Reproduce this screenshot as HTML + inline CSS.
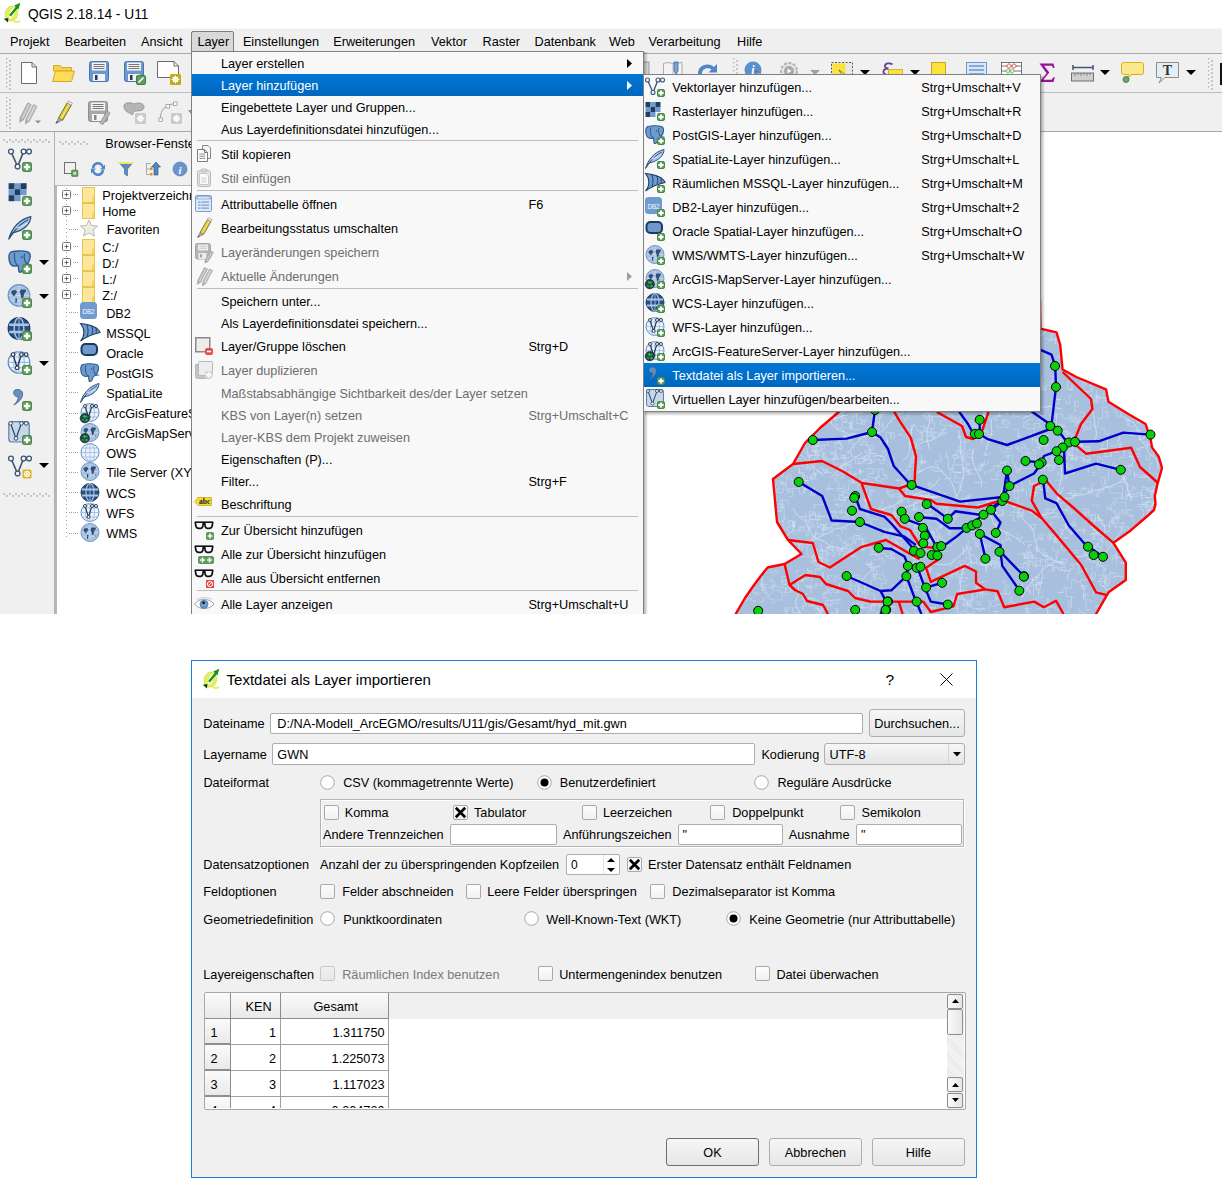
<!DOCTYPE html><html><head><meta charset="utf-8"><style>html,body{margin:0;padding:0;width:1222px;height:1187px;overflow:hidden;background:#fff;position:relative;}body{font-family:"Liberation Sans",sans-serif;}.t{position:absolute;white-space:nowrap;}svg{overflow:visible}</style></head><body>
<svg style="position:absolute;left:2px;top:1px;" width="20" height="24" viewBox="0 0 20 24"><ellipse cx="9.4" cy="12.6" rx="6.4" ry="7.6" transform="rotate(12 9.4 12.6)" fill="#e4ef5e" stroke="#c9d24a" stroke-width="0.5"/><ellipse cx="10" cy="12.2" rx="2.1" ry="5.8" transform="rotate(22 10 12.2)" fill="#fff"/><path d="M11.5 18.5C13.5 20.5 16 20.5 18.5 19L17.8 21.2C15 22.5 12.5 22 10.8 20Z" fill="#e4ef5e"/><path d="M8 14.8L15.6 5.6" stroke="#159515" stroke-width="2.3"/><path d="M12.2 4.6L18.4 1.8L16.4 8.6Z" fill="#159515"/><path d="M1.8 17.8L6.4 17L6 21.4Z" fill="#0b3d0b"/></svg>
<div class="t" style="left:27.5px;top:6.00px;font-size:15.0px;line-height:15.0px;color:#000;transform:scaleX(0.916);transform-origin:0 0;">QGIS 2.18.14 - U11</div>
<div style="position:absolute;left:0px;top:28px;width:1222px;height:1px;background:#f7f7f7"></div>
<div style="position:absolute;left:0px;top:29px;width:1222px;height:24px;background:#efefef"></div>
<div style="position:absolute;left:0px;top:53px;width:1222px;height:1px;background:#a8a8a8"></div>
<div style="position:absolute;left:191px;top:31px;width:43px;height:21px;background:#d9d9d9;border:1px solid #7d7d7d;border-radius:2px 2px 0 0;box-sizing:border-box"></div>
<div class="t" style="left:10px;top:36.00px;font-size:12.7px;line-height:12.7px;color:#000;">Projekt</div>
<div class="t" style="left:64.8px;top:36.00px;font-size:12.7px;line-height:12.7px;color:#000;">Bearbeiten</div>
<div class="t" style="left:141px;top:36.00px;font-size:12.7px;line-height:12.7px;color:#000;">Ansicht</div>
<div class="t" style="left:197.4px;top:36.00px;font-size:12.7px;line-height:12.7px;color:#000;">Layer</div>
<div class="t" style="left:242.9px;top:36.00px;font-size:12.7px;line-height:12.7px;color:#000;">Einstellungen</div>
<div class="t" style="left:333.2px;top:36.00px;font-size:12.7px;line-height:12.7px;color:#000;">Erweiterungen</div>
<div class="t" style="left:431px;top:36.00px;font-size:12.7px;line-height:12.7px;color:#000;">Vektor</div>
<div class="t" style="left:482.6px;top:36.00px;font-size:12.7px;line-height:12.7px;color:#000;">Raster</div>
<div class="t" style="left:534.5px;top:36.00px;font-size:12.7px;line-height:12.7px;color:#000;">Datenbank</div>
<div class="t" style="left:609px;top:36.00px;font-size:12.7px;line-height:12.7px;color:#000;">Web</div>
<div class="t" style="left:648.6px;top:36.00px;font-size:12.7px;line-height:12.7px;color:#000;">Verarbeitung</div>
<div class="t" style="left:737px;top:36.00px;font-size:12.7px;line-height:12.7px;color:#000;">Hilfe</div>
<div style="position:absolute;left:0px;top:54px;width:1222px;height:38px;background:#f0f0f0"></div>
<div style="position:absolute;left:0px;top:92px;width:1222px;height:1px;background:#bdbdbd"></div>
<div style="position:absolute;left:0px;top:93px;width:1222px;height:38px;background:#f0f0f0"></div>
<div style="position:absolute;left:0px;top:131px;width:1222px;height:1px;background:#a8a8a8"></div>
<svg style="position:absolute;left:6px;top:58px;" width="6" height="30" viewBox="0 0 6 30"><rect x="0" y="0" width="2" height="2" fill="#c6c6c6"/><rect x="3" y="2" width="2" height="2" fill="#c6c6c6"/><rect x="1" y="1" width="1" height="1" fill="#fff"/><rect x="0" y="4" width="2" height="2" fill="#c6c6c6"/><rect x="3" y="6" width="2" height="2" fill="#c6c6c6"/><rect x="1" y="5" width="1" height="1" fill="#fff"/><rect x="0" y="8" width="2" height="2" fill="#c6c6c6"/><rect x="3" y="10" width="2" height="2" fill="#c6c6c6"/><rect x="1" y="9" width="1" height="1" fill="#fff"/><rect x="0" y="12" width="2" height="2" fill="#c6c6c6"/><rect x="3" y="14" width="2" height="2" fill="#c6c6c6"/><rect x="1" y="13" width="1" height="1" fill="#fff"/><rect x="0" y="16" width="2" height="2" fill="#c6c6c6"/><rect x="3" y="18" width="2" height="2" fill="#c6c6c6"/><rect x="1" y="17" width="1" height="1" fill="#fff"/><rect x="0" y="20" width="2" height="2" fill="#c6c6c6"/><rect x="3" y="22" width="2" height="2" fill="#c6c6c6"/><rect x="1" y="21" width="1" height="1" fill="#fff"/><rect x="0" y="24" width="2" height="2" fill="#c6c6c6"/><rect x="3" y="26" width="2" height="2" fill="#c6c6c6"/><rect x="1" y="25" width="1" height="1" fill="#fff"/><rect x="0" y="28" width="2" height="2" fill="#c6c6c6"/><rect x="3" y="30" width="2" height="2" fill="#c6c6c6"/><rect x="1" y="29" width="1" height="1" fill="#fff"/></svg>
<svg style="position:absolute;left:6px;top:97px;" width="6" height="30" viewBox="0 0 6 30"><rect x="0" y="0" width="2" height="2" fill="#c6c6c6"/><rect x="3" y="2" width="2" height="2" fill="#c6c6c6"/><rect x="1" y="1" width="1" height="1" fill="#fff"/><rect x="0" y="4" width="2" height="2" fill="#c6c6c6"/><rect x="3" y="6" width="2" height="2" fill="#c6c6c6"/><rect x="1" y="5" width="1" height="1" fill="#fff"/><rect x="0" y="8" width="2" height="2" fill="#c6c6c6"/><rect x="3" y="10" width="2" height="2" fill="#c6c6c6"/><rect x="1" y="9" width="1" height="1" fill="#fff"/><rect x="0" y="12" width="2" height="2" fill="#c6c6c6"/><rect x="3" y="14" width="2" height="2" fill="#c6c6c6"/><rect x="1" y="13" width="1" height="1" fill="#fff"/><rect x="0" y="16" width="2" height="2" fill="#c6c6c6"/><rect x="3" y="18" width="2" height="2" fill="#c6c6c6"/><rect x="1" y="17" width="1" height="1" fill="#fff"/><rect x="0" y="20" width="2" height="2" fill="#c6c6c6"/><rect x="3" y="22" width="2" height="2" fill="#c6c6c6"/><rect x="1" y="21" width="1" height="1" fill="#fff"/><rect x="0" y="24" width="2" height="2" fill="#c6c6c6"/><rect x="3" y="26" width="2" height="2" fill="#c6c6c6"/><rect x="1" y="25" width="1" height="1" fill="#fff"/><rect x="0" y="28" width="2" height="2" fill="#c6c6c6"/><rect x="3" y="30" width="2" height="2" fill="#c6c6c6"/><rect x="1" y="29" width="1" height="1" fill="#fff"/></svg>
<svg style="position:absolute;left:20px;top:61px;" width="18" height="24" viewBox="0 0 18 24"><path d="M1.5 1.5H12L16.5 6V22.5H1.5Z" fill="#fff" stroke="#6b6b6b" stroke-width="1"/><path d="M12 1.5V6H16.5" fill="none" stroke="#6b6b6b" stroke-width="1"/></svg>
<svg style="position:absolute;left:52px;top:63px;" width="24" height="20" viewBox="0 0 24 20"><path d="M1.5 2.5H8L10 4.5H19.5V8H1.5Z" fill="#f5d34a" stroke="#d4a92a" stroke-width="1"/><path d="M3.5 8H22.5L19.5 18.5H0.5Z" fill="#fddc58" stroke="#d4a92a" stroke-width="1"/></svg>
<svg style="position:absolute;left:89px;top:61px;" width="22" height="22" viewBox="0 0 22 22"><rect x="0.5" y="0.5" width="19" height="20" rx="2" fill="#6a98d0" stroke="#4a76b0"/><rect x="3" y="1.5" width="14" height="8" fill="#f4f4f4"/><path d="M4.5 3.5h11M4.5 5.5h11M4.5 7.5h11" stroke="#555" stroke-width="0.8"/><rect x="4" y="13" width="12" height="7" fill="#f4f4f4"/><rect x="6" y="14" width="2.5" height="5" fill="#1f3a5c"/></svg>
<svg style="position:absolute;left:124px;top:61px;" width="24" height="24" viewBox="0 0 24 24"><rect x="0.5" y="0.5" width="19" height="20" rx="2" fill="#6a98d0" stroke="#4a76b0"/><rect x="3" y="1.5" width="14" height="8" fill="#f4f4f4"/><path d="M4.5 3.5h11M4.5 5.5h11M4.5 7.5h11" stroke="#555" stroke-width="0.8"/><rect x="4" y="13" width="12" height="7" fill="#f4f4f4"/><rect x="6" y="14" width="2.5" height="5" fill="#1f3a5c"/><rect x="12.5" y="14.5" width="9" height="9" rx="1.5" fill="#5e9e5e" stroke="#3f7c3f"/><path d="M14.5 21.5L19.5 16.5" stroke="#fff" stroke-width="1.6"/></svg>
<svg style="position:absolute;left:157px;top:61px;" width="25" height="25" viewBox="0 0 25 25"><path d="M0.5 0.5H17L21.5 5V16.5H0.5Z" fill="#fff" stroke="#6b6b6b"/><path d="M17 0.5V5H21.5" fill="none" stroke="#6b6b6b"/><rect x="13" y="13" width="11" height="11" rx="1.5" fill="#c9a414"/><circle cx="18.5" cy="18.5" r="2.4" fill="none" stroke="#fff" stroke-width="1.3"/><path d="M18.5 14.5v8M14.5 18.5h8M15.7 15.7l5.6 5.6M21.3 15.7l-5.6 5.6" stroke="#fff" stroke-width="0.9"/></svg>
<svg style="position:absolute;left:18px;top:100px;" width="26" height="26" viewBox="0 0 26 26"><g transform="scale(1.15)"><path d="M1.5 16L8.5 2.5L11.5 4L4.5 17.5Z" fill="#bdbdbd" stroke="#9c9c9c" stroke-width="0.7"/><path d="M1.5 16L4.5 17.5L1 20Z" fill="#a5a5a5"/><path d="M6.5 17.5L13.5 4L16.5 5.5L9.5 19Z" fill="#c6c6c6" stroke="#9c9c9c" stroke-width="0.7"/><path d="M6.5 17.5L9.5 19L6 21.5Z" fill="#a5a5a5"/><path d="M3.5 16.5L10 3.3M8.5 18L15 4.8" stroke="#e0e0e0" stroke-width="0.7"/></g><path d="M17 20.5h6l-3 3z" fill="#8a8a8a"/></svg>
<svg style="position:absolute;left:54px;top:100px;" width="20" height="25" viewBox="0 0 20 25"><g transform="scale(1.15)"><path d="M4 15.5L11.5 2.5L15 4.5L7.5 17.5Z" fill="#e1cc3a" stroke="#6d6020" stroke-width="0.8"/><path d="M6 16.3L13.2 3.6" stroke="#f3e88a" stroke-width="0.9"/><path d="M11.5 2.5L12.5 0.8L16 2.8L15 4.5Z" fill="#f4f4f4" stroke="#8a8a8a" stroke-width="0.6"/><path d="M4 15.5L7.5 17.5L1.5 20.5Z" fill="#a8a8a8" stroke="#777" stroke-width="0.5"/><path d="M1.5 20.5L2.6 18.5L3.8 19.2Z" fill="#333"/></g></svg>
<svg style="position:absolute;left:88px;top:101px;" width="24" height="24" viewBox="0 0 24 24"><rect x="0.5" y="0.5" width="19" height="20" rx="2" fill="#a8a8a8" stroke="#8d8d8d"/><rect x="3" y="1.5" width="14" height="8" fill="#f4f4f4"/><path d="M4.5 3.5h11M4.5 5.5h11M4.5 7.5h11" stroke="#555" stroke-width="0.8"/><rect x="4" y="13" width="12" height="7" fill="#f4f4f4"/><rect x="6" y="14" width="2.5" height="5" fill="#888"/><path d="M12 22L19 10L22 12L15 23.5Z" fill="#b8b8b8" stroke="#8a8a8a" stroke-width="0.8"/></svg>
<svg style="position:absolute;left:122px;top:101px;" width="26" height="26" viewBox="0 0 26 26"><path d="M2 6C1 1 9 1 12 3C16 1 22 2 22 6C22 10 17 10 13 10C10 12 12 15 9 13C6 11 3 11 2 6Z" fill="#b5b5b5" stroke="#8d8d8d" stroke-width="0.8"/><rect x="13" y="12" width="11" height="11" rx="1.5" fill="#c9c9c9"/><circle cx="18.5" cy="17.5" r="2.3" fill="none" stroke="#fff" stroke-width="1.2"/><path d="M18.5 13.5v8M14.5 17.5h8M15.7 14.7l5.6 5.6M21.3 14.7l-5.6 5.6" stroke="#fff" stroke-width="0.8"/></svg>
<svg style="position:absolute;left:158px;top:101px;" width="26" height="26" viewBox="0 0 26 26"><path d="M2.5 19C2 12 5 6 9.5 5C12 4 14 3 16 2.5" fill="none" stroke="#a0a0a0" stroke-width="1"/><rect x="1" y="17" width="3.5" height="3.5" fill="#fff" stroke="#9a9a9a" stroke-width="0.8"/><rect x="8" y="3.5" width="3.5" height="3.5" fill="#fff" stroke="#9a9a9a" stroke-width="0.8"/><rect x="15.5" y="1" width="3.5" height="3.5" fill="#fff" stroke="#9a9a9a" stroke-width="0.8"/><rect x="13" y="12" width="11" height="11" rx="1.5" fill="#c9c9c9"/><circle cx="18.5" cy="17.5" r="2.3" fill="none" stroke="#fff" stroke-width="1.2"/><path d="M18.5 13.5v8M14.5 17.5h8M15.7 14.7l5.6 5.6M21.3 14.7l-5.6 5.6" stroke="#fff" stroke-width="0.8"/></svg>
<svg style="position:absolute;left:188px;top:110px;" width="6" height="6" viewBox="0 0 6 6"><path d="M0 0h6l-3 4z" fill="#8a8a8a"/></svg>
<svg style="position:absolute;left:643px;top:61px;" width="8" height="14" viewBox="0 0 8 14"><rect x="0" y="1" width="6" height="14" fill="#d8d8d8" stroke="#888" stroke-width="0.8"/></svg>
<svg style="position:absolute;left:662px;top:61px;" width="24" height="14" viewBox="0 0 24 14"><path d="M1.5 2.5L6 1.5L11 2.5L20 1.5V14H1.5Z" fill="#f4f4f4" stroke="#9a9a9a" stroke-width="0.8"/><path d="M11 2.5V14" stroke="#bbb"/><path d="M12 1H16V10L14 13L12 10Z" fill="#7aa6dc" stroke="#3d6494" stroke-width="0.8"/></svg>
<svg style="position:absolute;left:696px;top:61px;" width="24" height="14" viewBox="0 0 24 14"><path d="M2 13C2 7 6 3.5 11.5 3.5C14.5 3.5 16.5 4.5 18 6L21 3V11.5H12.5L15.5 8.5C14.5 7.8 13 7.3 11.5 7.3C8 7.3 6 9.5 6 13Z" fill="#4f86c8"/></svg>
<svg style="position:absolute;left:733px;top:58px;" width="6" height="17" viewBox="0 0 6 17"><rect x="0" y="0" width="2" height="2" fill="#c6c6c6"/><rect x="3" y="2" width="2" height="2" fill="#c6c6c6"/><rect x="1" y="1" width="1" height="1" fill="#fff"/><rect x="0" y="4" width="2" height="2" fill="#c6c6c6"/><rect x="3" y="6" width="2" height="2" fill="#c6c6c6"/><rect x="1" y="5" width="1" height="1" fill="#fff"/><rect x="0" y="8" width="2" height="2" fill="#c6c6c6"/><rect x="3" y="10" width="2" height="2" fill="#c6c6c6"/><rect x="1" y="9" width="1" height="1" fill="#fff"/><rect x="0" y="12" width="2" height="2" fill="#c6c6c6"/><rect x="3" y="14" width="2" height="2" fill="#c6c6c6"/><rect x="1" y="13" width="1" height="1" fill="#fff"/><rect x="0" y="16" width="2" height="2" fill="#c6c6c6"/><rect x="3" y="18" width="2" height="2" fill="#c6c6c6"/><rect x="1" y="17" width="1" height="1" fill="#fff"/></svg>
<svg style="position:absolute;left:744px;top:61px;" width="20" height="14" viewBox="0 0 20 14"><circle cx="9" cy="9" r="8.5" fill="#5b8fcd"/><text x="9" y="13" font-family="Liberation Serif" font-style="italic" font-weight="bold" font-size="12" fill="#fff" text-anchor="middle">i</text><path d="M12 10L18 14L15 14.5Z" fill="#fff" stroke="#333" stroke-width="0.5"/></svg>
<svg style="position:absolute;left:779px;top:61px;" width="22" height="14" viewBox="0 0 22 14"><circle cx="10" cy="10" r="8" fill="#e4e4e4" stroke="#b0b0b0" stroke-width="2" stroke-dasharray="3 1.6"/><circle cx="10" cy="10" r="5" fill="#a8a8a8"/><path d="M8.5 7.5L12.5 10L8.5 12.5Z" fill="#fff"/></svg>
<svg style="position:absolute;left:810px;top:70px;" width="11" height="6" viewBox="0 0 11 6"><path d="M0 0h10l-5 5z" fill="#a0a0a0"/></svg>
<svg style="position:absolute;left:831px;top:62px;" width="23" height="13" viewBox="0 0 23 13"><rect x="0.5" y="0.5" width="21" height="21" fill="#e8e8e8" stroke="#333" stroke-width="0.8" stroke-dasharray="2 1.5"/><rect x="1.5" y="1.5" width="13" height="14" fill="#fce33b"/><path d="M8 8L16 14L12 14.5Z" fill="#fff" stroke="#333" stroke-width="0.6"/></svg>
<svg style="position:absolute;left:860px;top:70px;" width="11" height="6" viewBox="0 0 11 6"><path d="M0 0h10l-5 5z" fill="#000"/></svg>
<svg style="position:absolute;left:882px;top:62px;" width="22" height="13" viewBox="0 0 22 13"><path d="M10.5 2.5C8 0.5 2.5 1 3 4.5C3.3 6 5 6.5 6.5 6.5C3 6.5 1 8 1.5 10.5C2 13 6 13.5 9 12" fill="none" stroke="#6a3d8f" stroke-width="1.8"/><rect x="6.5" y="7.5" width="14" height="10" fill="#fce33b" stroke="#c8a820" stroke-width="0.8"/></svg>
<svg style="position:absolute;left:910px;top:70px;" width="11" height="6" viewBox="0 0 11 6"><path d="M0 0h10l-5 5z" fill="#000"/></svg>
<svg style="position:absolute;left:931px;top:62px;" width="16" height="13" viewBox="0 0 16 13"><rect x="0.5" y="0.5" width="14" height="16" fill="#fce33b" stroke="#c8a820"/></svg>
<svg style="position:absolute;left:966px;top:62px;" width="22" height="13" viewBox="0 0 22 13"><rect x="0.5" y="0.5" width="20" height="16" fill="#dbe7f5" stroke="#6a98d0"/><path d="M3 4h15M3 8h15M3 12h15" stroke="#6a98d0" stroke-width="1.6"/></svg>
<svg style="position:absolute;left:1001px;top:62px;" width="22" height="13" viewBox="0 0 22 13"><rect x="0.5" y="0.5" width="20" height="16" fill="#fff" stroke="#555" stroke-width="0.8"/><path d="M1 4h19M1 9h19" stroke="#555" stroke-width="0.8"/><path d="M8 1.5l2.5 2.5-2.5 2.5-2.5-2.5z M13 1.5l2.5 2.5-2.5 2.5-2.5-2.5z" fill="#fff" stroke="#d33" stroke-width="1"/><path d="M7 6.5l2.5 2.5-2.5 2.5-2.5-2.5z M11 6.5l2.5 2.5-2.5 2.5-2.5-2.5z" fill="#dff0d8" stroke="#5cb85c" stroke-width="1"/></svg>
<svg style="position:absolute;left:1039px;top:63px;" width="17" height="20" viewBox="0 0 17 20"><path d="M0.5 0.5H14.5L15.5 5H14L12.8 2.8H5L10.3 9.6L4.3 16.8H12.8L14.3 14.2H15.8L14.5 19H0.5L7.6 10.2Z" fill="#9c109c"/></svg>
<svg style="position:absolute;left:1071px;top:65px;" width="24" height="18" viewBox="0 0 24 18"><path d="M2 2.5h20M2 0v5M22 0v5" stroke="#3d5675" stroke-width="1.5"/><rect x="0.5" y="8" width="22" height="8" fill="#cfcfcf" stroke="#707070"/><path d="M4 8v3M7 8v2M10 8v3M13 8v2M16 8v3M19 8v2" stroke="#707070" stroke-width="0.8"/></svg>
<svg style="position:absolute;left:1100px;top:70px;" width="11" height="6" viewBox="0 0 11 6"><path d="M0 0h10l-5 5z" fill="#000"/></svg>
<svg style="position:absolute;left:1121px;top:62px;" width="26" height="22" viewBox="0 0 26 22"><path d="M3.5 0.5H20.5C22 0.5 22.5 1 22.5 3V10C22.5 12 22 12.5 20.5 12.5H10L6 18L7.5 12.5H3.5C1.5 12.5 0.5 12 0.5 10V3C0.5 1 1.5 0.5 3.5 0.5Z" fill="#fae98c" stroke="#d1b21c"/><circle cx="5" cy="17.5" r="3" fill="#6aa56a" stroke="#3f7c3f" stroke-width="0.8"/></svg>
<svg style="position:absolute;left:1156px;top:62px;" width="26" height="22" viewBox="0 0 26 22"><path d="M0.5 0.5H22.5V15.5H9L3 21L5.5 15.5H0.5Z" fill="#e6eef5" stroke="#8d8d8d"/><text x="11.5" y="13" font-family="Liberation Serif" font-weight="bold" font-size="14" fill="#333" text-anchor="middle">T</text></svg>
<svg style="position:absolute;left:1186px;top:70px;" width="11" height="6" viewBox="0 0 11 6"><path d="M0 0h10l-5 5z" fill="#000"/></svg>
<svg style="position:absolute;left:1208px;top:58px;" width="6" height="30" viewBox="0 0 6 30"><rect x="0" y="0" width="2" height="2" fill="#c6c6c6"/><rect x="3" y="2" width="2" height="2" fill="#c6c6c6"/><rect x="1" y="1" width="1" height="1" fill="#fff"/><rect x="0" y="4" width="2" height="2" fill="#c6c6c6"/><rect x="3" y="6" width="2" height="2" fill="#c6c6c6"/><rect x="1" y="5" width="1" height="1" fill="#fff"/><rect x="0" y="8" width="2" height="2" fill="#c6c6c6"/><rect x="3" y="10" width="2" height="2" fill="#c6c6c6"/><rect x="1" y="9" width="1" height="1" fill="#fff"/><rect x="0" y="12" width="2" height="2" fill="#c6c6c6"/><rect x="3" y="14" width="2" height="2" fill="#c6c6c6"/><rect x="1" y="13" width="1" height="1" fill="#fff"/><rect x="0" y="16" width="2" height="2" fill="#c6c6c6"/><rect x="3" y="18" width="2" height="2" fill="#c6c6c6"/><rect x="1" y="17" width="1" height="1" fill="#fff"/><rect x="0" y="20" width="2" height="2" fill="#c6c6c6"/><rect x="3" y="22" width="2" height="2" fill="#c6c6c6"/><rect x="1" y="21" width="1" height="1" fill="#fff"/><rect x="0" y="24" width="2" height="2" fill="#c6c6c6"/><rect x="3" y="26" width="2" height="2" fill="#c6c6c6"/><rect x="1" y="25" width="1" height="1" fill="#fff"/><rect x="0" y="28" width="2" height="2" fill="#c6c6c6"/><rect x="3" y="30" width="2" height="2" fill="#c6c6c6"/><rect x="1" y="29" width="1" height="1" fill="#fff"/></svg>
<div style="position:absolute;left:1220px;top:63px;width:2px;height:22px;background:#111"></div>
<div style="position:absolute;left:0px;top:132px;width:54px;height:482px;background:#f0f0f0"></div>
<div style="position:absolute;left:54px;top:132px;width:1px;height:482px;background:#b0b0b0"></div>
<div style="position:absolute;left:55px;top:132px;width:140px;height:482px;background:#f0f0f0"></div>
<svg style="position:absolute;left:3px;top:139px;" width="46" height="5" viewBox="0 0 46 5"><rect x="0" y="0" width="2" height="2" fill="#c6c6c6"/><rect x="3" y="2" width="2" height="2" fill="#c6c6c6"/><rect x="6" y="0" width="2" height="2" fill="#c6c6c6"/><rect x="9" y="2" width="2" height="2" fill="#c6c6c6"/><rect x="12" y="0" width="2" height="2" fill="#c6c6c6"/><rect x="15" y="2" width="2" height="2" fill="#c6c6c6"/><rect x="18" y="0" width="2" height="2" fill="#c6c6c6"/><rect x="21" y="2" width="2" height="2" fill="#c6c6c6"/><rect x="24" y="0" width="2" height="2" fill="#c6c6c6"/><rect x="27" y="2" width="2" height="2" fill="#c6c6c6"/><rect x="30" y="0" width="2" height="2" fill="#c6c6c6"/><rect x="33" y="2" width="2" height="2" fill="#c6c6c6"/><rect x="36" y="0" width="2" height="2" fill="#c6c6c6"/><rect x="39" y="2" width="2" height="2" fill="#c6c6c6"/><rect x="42" y="0" width="2" height="2" fill="#c6c6c6"/><rect x="45" y="2" width="2" height="2" fill="#c6c6c6"/></svg>
<svg style="position:absolute;left:59px;top:141px;" width="30" height="5" viewBox="0 0 30 5"><rect x="0" y="0" width="2" height="2" fill="#c6c6c6"/><rect x="3" y="2" width="2" height="2" fill="#c6c6c6"/><rect x="6" y="0" width="2" height="2" fill="#c6c6c6"/><rect x="9" y="2" width="2" height="2" fill="#c6c6c6"/><rect x="12" y="0" width="2" height="2" fill="#c6c6c6"/><rect x="15" y="2" width="2" height="2" fill="#c6c6c6"/><rect x="18" y="0" width="2" height="2" fill="#c6c6c6"/><rect x="21" y="2" width="2" height="2" fill="#c6c6c6"/><rect x="24" y="0" width="2" height="2" fill="#c6c6c6"/><rect x="27" y="2" width="2" height="2" fill="#c6c6c6"/></svg>
<svg style="position:absolute;left:3px;top:493px;" width="46" height="5" viewBox="0 0 46 5"><rect x="0" y="0" width="2" height="2" fill="#c6c6c6"/><rect x="3" y="2" width="2" height="2" fill="#c6c6c6"/><rect x="6" y="0" width="2" height="2" fill="#c6c6c6"/><rect x="9" y="2" width="2" height="2" fill="#c6c6c6"/><rect x="12" y="0" width="2" height="2" fill="#c6c6c6"/><rect x="15" y="2" width="2" height="2" fill="#c6c6c6"/><rect x="18" y="0" width="2" height="2" fill="#c6c6c6"/><rect x="21" y="2" width="2" height="2" fill="#c6c6c6"/><rect x="24" y="0" width="2" height="2" fill="#c6c6c6"/><rect x="27" y="2" width="2" height="2" fill="#c6c6c6"/><rect x="30" y="0" width="2" height="2" fill="#c6c6c6"/><rect x="33" y="2" width="2" height="2" fill="#c6c6c6"/><rect x="36" y="0" width="2" height="2" fill="#c6c6c6"/><rect x="39" y="2" width="2" height="2" fill="#c6c6c6"/><rect x="42" y="0" width="2" height="2" fill="#c6c6c6"/><rect x="45" y="2" width="2" height="2" fill="#c6c6c6"/></svg>
<div class="t" style="left:105.2px;top:138.00px;font-size:12.7px;line-height:12.7px;color:#000;">Browser-Fenster</div>
<svg style="position:absolute;left:0px;top:0px;" width="54" height="614" viewBox="0 0 54 614"><g transform="translate(8,148) scale(1.2)"><path d="M2.5 3L8 15.5L13 3H17" fill="none" stroke="#3d5675" stroke-width="1.3"/><circle cx="2.5" cy="3" r="2" fill="#f8f8f8" stroke="#3d5675" stroke-width="1.1"/><circle cx="8" cy="15.5" r="2" fill="#f8f8f8" stroke="#3d5675" stroke-width="1.1"/><circle cx="13" cy="3" r="2" fill="#f8f8f8" stroke="#3d5675" stroke-width="1.1"/><circle cx="17.5" cy="3" r="2" fill="#f8f8f8" stroke="#3d5675" stroke-width="1.1"/></g><rect x="22.5" y="162.5" width="9" height="9" rx="1.7" fill="#5c9c5c" stroke="#4b874b" stroke-width="1"/><path d="M27.0 163.8V170.2M23.8 167.0H30.2" stroke="#fff" stroke-width="2.4"/></svg>
<svg style="position:absolute;left:0px;top:0px;" width="54" height="614" viewBox="0 0 54 614"><g transform="translate(8,182) scale(1.2)"><rect x="0.5" y="1" width="5" height="5" fill="#213f63"/><rect x="5.5" y="1" width="5" height="5" fill="#6e9bd1"/><rect x="10.5" y="1" width="5" height="5" fill="#213f63"/><rect x="0.5" y="6" width="5" height="5" fill="#6e9bd1"/><rect x="5.5" y="6" width="5" height="5" fill="#213f63"/><rect x="10.5" y="6" width="5" height="5" fill="#6e9bd1"/><rect x="0.5" y="11" width="5" height="5" fill="#213f63"/><rect x="5.5" y="11" width="5" height="5" fill="#6e9bd1"/></g><rect x="22.5" y="196.5" width="9" height="9" rx="1.7" fill="#5c9c5c" stroke="#4b874b" stroke-width="1"/><path d="M27.0 197.8V204.2M23.8 201.0H30.2" stroke="#fff" stroke-width="2.4"/></svg>
<svg style="position:absolute;left:0px;top:0px;" width="54" height="614" viewBox="0 0 54 614"><g transform="translate(8,216) scale(1.2)"><path d="M0.5 19.5C3 11 9 3 19 0.5C19 6 14 12 4 14Z" fill="#a9c6ea" stroke="#2f4f7a" stroke-width="1"/><path d="M1.5 18C6 11 11 6 17 3" fill="none" stroke="#2f4f7a" stroke-width="0.9"/><path d="M7 10C10 9 13 8 16 6" fill="none" stroke="#e6f0fb" stroke-width="0.8"/></g><rect x="22.5" y="230.5" width="9" height="9" rx="1.7" fill="#5c9c5c" stroke="#4b874b" stroke-width="1"/><path d="M27.0 231.8V238.2M23.8 235.0H30.2" stroke="#fff" stroke-width="2.4"/></svg>
<svg style="position:absolute;left:0px;top:0px;" width="54" height="614" viewBox="0 0 54 614"><g transform="translate(8,250) scale(1.2)"><path d="M2.0 2.0C4.0 0.5 13.0 0.5 16.5 1.5C18.5 2.5 19.0 5.0 18.0 8.0C17.5 10.0 16.0 11.0 15.0 11.0L18.0 12.0L14.5 12.8C13.0 13.5 12.5 15.5 12.0 17.0C11.0 19.0 9.0 19.0 9.0 17.5L8.5 13.0L6.0 13.5C3.0 13.5 1.0 11.0 0.8 7.0C0.6 4.5 1.0 3.0 2.0 2.0Z" fill="#6d9bd0" stroke="#2f5a8a" stroke-width="1.1"/><path d="M5.5 2.5C5.0 6.0 5.5 10.0 7.5 13.0M14.0 3.0C13.0 5.0 13.5 8.0 15.0 11.0" fill="none" stroke="#2f5a8a" stroke-width="1"/><circle cx="11.5" cy="6" r="0.8" fill="#2f5a8a"/></g><rect x="22.5" y="264.5" width="9" height="9" rx="1.7" fill="#5c9c5c" stroke="#4b874b" stroke-width="1"/><path d="M27.0 265.8V272.2M23.8 269.0H30.2" stroke="#fff" stroke-width="2.4"/></svg>
<svg style="position:absolute;left:39px;top:260px;" width="10" height="6" viewBox="0 0 10 6"><path d="M0 0h10l-5 5z" fill="#000"/></svg>
<svg style="position:absolute;left:0px;top:0px;" width="54" height="614" viewBox="0 0 54 614"><g transform="translate(7,284) scale(1.2)"><circle cx="10" cy="9.5" r="9" fill="#a9c2e0" stroke="#6f95c5" stroke-width="1"/><path d="M1.5 9.5h17M10 1.5v17M3 5.5h14M3 13.5h14" stroke="#e8f0fa" stroke-width="0.6" opacity="0.6"/><path d="M4 5.5l3 -0.5 1.5 1.5 -1.5 2 -1 2 -1.5 -1.5 -1 -2z M7 12l1.5 0 -0.5 3.5 -1 0.5z M11.5 4.5l4 0 0.5 1.5 -1.5 1.5 -1 4 -1.5 0.5 -0.5 -3 -1 -2.5z M15.5 12l1 1 -1 1.5z" fill="#2f4f7a"/></g><rect x="22.5" y="298.5" width="9" height="9" rx="1.7" fill="#5c9c5c" stroke="#4b874b" stroke-width="1"/><path d="M27.0 299.8V306.2M23.8 303.0H30.2" stroke="#fff" stroke-width="2.4"/></svg>
<svg style="position:absolute;left:39px;top:294px;" width="10" height="6" viewBox="0 0 10 6"><path d="M0 0h10l-5 5z" fill="#000"/></svg>
<svg style="position:absolute;left:0px;top:0px;" width="54" height="614" viewBox="0 0 54 614"><g transform="translate(7,317) scale(1.2)"><circle cx="10" cy="9.5" r="9" fill="#2a4f7e" stroke="#1c3a60" stroke-width="1"/><path d="M1.8 6.5H18.2M1.8 12.5H18.2" stroke="#a9c6ea" stroke-width="2.2"/><ellipse cx="10" cy="9.5" rx="4" ry="9" fill="none" stroke="#a9c6ea" stroke-width="1.2"/><path d="M10 0.5V18.5" stroke="#a9c6ea" stroke-width="0.8"/></g><rect x="22.5" y="331.5" width="9" height="9" rx="1.7" fill="#5c9c5c" stroke="#4b874b" stroke-width="1"/><path d="M27.0 332.8V339.2M23.8 336.0H30.2" stroke="#fff" stroke-width="2.4"/></svg>
<svg style="position:absolute;left:0px;top:0px;" width="54" height="614" viewBox="0 0 54 614"><g transform="translate(7,351) scale(1.2)"><circle cx="10" cy="9.5" r="9" fill="#eef4fb" stroke="#5b8bc6" stroke-width="1"/><path d="M1.5 9.5H18.5M3 5H17M3 14H17M10 0.5V18.5" stroke="#9dbbe2" stroke-width="0.9"/><ellipse cx="10" cy="9.5" rx="4.5" ry="9" fill="none" stroke="#9dbbe2" stroke-width="0.9"/><path d="M5 3L8.5 14L12 3H16" fill="none" stroke="#1f2f45" stroke-width="1.1"/><circle cx="5" cy="3" r="1.5" fill="#fff" stroke="#1f2f45" stroke-width="0.9"/><circle cx="12" cy="3" r="1.5" fill="#fff" stroke="#1f2f45" stroke-width="0.9"/><circle cx="16" cy="3" r="1.5" fill="#fff" stroke="#1f2f45" stroke-width="0.9"/><circle cx="8.5" cy="14" r="1.5" fill="#fff" stroke="#1f2f45" stroke-width="0.9"/></g><rect x="22.5" y="365.5" width="9" height="9" rx="1.7" fill="#5c9c5c" stroke="#4b874b" stroke-width="1"/><path d="M27.0 366.8V373.2M23.8 370.0H30.2" stroke="#fff" stroke-width="2.4"/></svg>
<svg style="position:absolute;left:39px;top:361px;" width="10" height="6" viewBox="0 0 10 6"><path d="M0 0h10l-5 5z" fill="#000"/></svg>
<svg style="position:absolute;left:0px;top:0px;" width="54" height="614" viewBox="0 0 54 614"><g transform="translate(9,387) scale(1.2)"><path d="M5 2.5C9 1 12.5 3.5 11 8C10 11 7 13.5 4 15C6.5 12.5 8 10 7.5 8C4.5 8.5 2.5 4.5 5 2.5Z" fill="#6a8fc0" stroke="#3d5f8f" stroke-width="0.7"/></g><rect x="22.5" y="401.5" width="9" height="9" rx="1.7" fill="#5c9c5c" stroke="#4b874b" stroke-width="1"/><path d="M27.0 402.8V409.2M23.8 406.0H30.2" stroke="#fff" stroke-width="2.4"/></svg>
<svg style="position:absolute;left:0px;top:0px;" width="54" height="614" viewBox="0 0 54 614"><g transform="translate(7,421) scale(1.2)"><rect x="1.5" y="0.5" width="17" height="17" rx="2.5" fill="#c6d7ec" stroke="#5d7fa8" stroke-width="1"/><path d="M3 2L7.5 14.5L12 2H16" fill="none" stroke="#2a3f5a" stroke-width="1"/><circle cx="3" cy="2" r="1.5" fill="#fff" stroke="#2a3f5a" stroke-width="0.8"/><circle cx="12" cy="2" r="1.5" fill="#fff" stroke="#2a3f5a" stroke-width="0.8"/><circle cx="16" cy="2" r="1.5" fill="#fff" stroke="#2a3f5a" stroke-width="0.8"/><circle cx="7.5" cy="14.5" r="1.5" fill="#fff" stroke="#2a3f5a" stroke-width="0.8"/></g><rect x="22.5" y="435.5" width="9" height="9" rx="1.7" fill="#5c9c5c" stroke="#4b874b" stroke-width="1"/><path d="M27.0 436.8V443.2M23.8 440.0H30.2" stroke="#fff" stroke-width="2.4"/></svg>
<svg style="position:absolute;left:0px;top:0px;" width="54" height="614" viewBox="0 0 54 614"><g transform="translate(8,455) scale(1.2)"><path d="M2.5 3L8 15.5L13 3H17" fill="none" stroke="#3d5675" stroke-width="1.3"/><circle cx="2.5" cy="3" r="2" fill="#f8f8f8" stroke="#3d5675" stroke-width="1.1"/><circle cx="8" cy="15.5" r="2" fill="#f8f8f8" stroke="#3d5675" stroke-width="1.1"/><circle cx="13" cy="3" r="2" fill="#f8f8f8" stroke="#3d5675" stroke-width="1.1"/><circle cx="17.5" cy="3" r="2" fill="#f8f8f8" stroke="#3d5675" stroke-width="1.1"/></g><rect x="22.5" y="469.5" width="9" height="9" rx="1.5" fill="#d9b21c"/><circle cx="27" cy="474" r="2.6" fill="none" stroke="#fff" stroke-width="1"/><path d="M27 470.5v7M23.5 474h7M24.5 471.5l5 5M29.5 471.5l-5 5" stroke="#fff" stroke-width="0.8"/></svg>
<svg style="position:absolute;left:39px;top:463px;" width="10" height="6" viewBox="0 0 10 6"><path d="M0 0h10l-5 5z" fill="#000"/></svg>
<svg style="position:absolute;left:63px;top:161px;" width="16" height="16" viewBox="0 0 16 16"><rect x="1.5" y="1.5" width="11" height="11" fill="#f0f0f0" stroke="#707070"/><rect x="8.5" y="9" width="6.5" height="6.5" rx="1" fill="#5c9c5c" stroke="#4b874b" stroke-width="0.6"/><circle cx="11.75" cy="12.25" r="1.7" fill="#c8e0c8"/></svg>
<svg style="position:absolute;left:90px;top:161px;" width="16" height="16" viewBox="0 0 16 16"><path d="M2 7C2 3 5 1 8 1C11 1 13 3 13.5 5L15 3.5V8.5H10L12 6.5C11 4.5 10 3.5 8 3.5C6 3.5 4.5 5 4.5 7Z" fill="#4f86c8"/><path d="M14 9C14 13 11 15 8 15C5 15 3 13 2.5 11L1 12.5V7.5H6L4 9.5C5 11.5 6 12.5 8 12.5C10 12.5 11.5 11 11.5 9Z" fill="#4f86c8"/></svg>
<svg style="position:absolute;left:118px;top:161px;" width="16" height="16" viewBox="0 0 16 16"><path d="M1 1.5H15L9.5 8V15L6.5 13V8Z" fill="#5b8bc6" stroke="#3d6494" stroke-width="0.6"/><rect x="1" y="1" width="14" height="2" fill="#f2e55a"/></svg>
<svg style="position:absolute;left:145px;top:161px;" width="16" height="16" viewBox="0 0 16 16"><path d="M1 2.5H6M1.5 2.5V13.5M1.5 8H5M1.5 13.5H5" stroke="#999" stroke-width="0.8" fill="none"/><rect x="5" y="6.5" width="2.5" height="2.5" fill="#f08c1a"/><rect x="5" y="12" width="2.5" height="2.5" fill="#f08c1a"/><path d="M11 1L15.5 6H13V14H9V6H6.5Z" fill="#4f86c8" stroke="#2a4d7a" stroke-width="0.6"/></svg>
<svg style="position:absolute;left:172px;top:161px;" width="16" height="16" viewBox="0 0 16 16"><circle cx="8" cy="8" r="7" fill="#6a95cb" stroke="#4a76b0" stroke-width="0.6"/><text x="8" y="12.5" font-family="Liberation Serif" font-style="italic" font-weight="bold" font-size="11" fill="#fff" text-anchor="middle">i</text></svg>
<div style="position:absolute;left:55px;top:185px;width:140px;height:1px;background:#b8b8b8"></div>
<div style="position:absolute;left:55px;top:185px;width:2px;height:429px;background:#b8b8b8"></div>
<div style="position:absolute;left:57px;top:186px;width:138px;height:428px;background:#fff"></div>
<div class="t" style="left:102.2px;top:190.00px;font-size:12.7px;line-height:12.7px;color:#000;">Projektverzeichnis</div>
<div class="t" style="left:102.2px;top:206.00px;font-size:12.7px;line-height:12.7px;color:#000;">Home</div>
<div class="t" style="left:106.7px;top:224.00px;font-size:12.7px;line-height:12.7px;color:#000;">Favoriten</div>
<div class="t" style="left:102.2px;top:242.00px;font-size:12.7px;line-height:12.7px;color:#000;">C:/</div>
<div class="t" style="left:102.2px;top:258.00px;font-size:12.7px;line-height:12.7px;color:#000;">D:/</div>
<div class="t" style="left:102.2px;top:274.00px;font-size:12.7px;line-height:12.7px;color:#000;">L:/</div>
<div class="t" style="left:102.2px;top:290.00px;font-size:12.7px;line-height:12.7px;color:#000;">Z:/</div>
<div class="t" style="left:106.2px;top:308.00px;font-size:12.7px;line-height:12.7px;color:#000;">DB2</div>
<div class="t" style="left:106.2px;top:328.00px;font-size:12.7px;line-height:12.7px;color:#000;">MSSQL</div>
<div class="t" style="left:106.2px;top:348.00px;font-size:12.7px;line-height:12.7px;color:#000;">Oracle</div>
<div class="t" style="left:106.2px;top:368.00px;font-size:12.7px;line-height:12.7px;color:#000;">PostGIS</div>
<div class="t" style="left:106.2px;top:388.00px;font-size:12.7px;line-height:12.7px;color:#000;">SpatiaLite</div>
<div class="t" style="left:106.2px;top:408.00px;font-size:12.7px;line-height:12.7px;color:#000;">ArcGisFeatureServer</div>
<div class="t" style="left:106.2px;top:428.00px;font-size:12.7px;line-height:12.7px;color:#000;">ArcGisMapServer</div>
<div class="t" style="left:106.2px;top:448.00px;font-size:12.7px;line-height:12.7px;color:#000;">OWS</div>
<div class="t" style="left:106.2px;top:467.00px;font-size:12.7px;line-height:12.7px;color:#000;">Tile Server (XYZ)</div>
<div class="t" style="left:106.2px;top:488.00px;font-size:12.7px;line-height:12.7px;color:#000;">WCS</div>
<div class="t" style="left:106.2px;top:508.00px;font-size:12.7px;line-height:12.7px;color:#000;">WFS</div>
<div class="t" style="left:106.2px;top:528.00px;font-size:12.7px;line-height:12.7px;color:#000;">WMS</div>
<svg style="position:absolute;left:0px;top:0px;pointer-events:none" width="1222" height="614" viewBox="0 0 1222 614"><rect x="66" y="188" width="1" height="1" fill="#a0a0a0"/><rect x="66" y="192" width="1" height="1" fill="#a0a0a0"/><rect x="66" y="196" width="1" height="1" fill="#a0a0a0"/><rect x="66" y="200" width="1" height="1" fill="#a0a0a0"/><rect x="66" y="204" width="1" height="1" fill="#a0a0a0"/><rect x="66" y="208" width="1" height="1" fill="#a0a0a0"/><rect x="66" y="212" width="1" height="1" fill="#a0a0a0"/><rect x="66" y="216" width="1" height="1" fill="#a0a0a0"/><rect x="66" y="220" width="1" height="1" fill="#a0a0a0"/><rect x="66" y="224" width="1" height="1" fill="#a0a0a0"/><rect x="66" y="228" width="1" height="1" fill="#a0a0a0"/><rect x="66" y="232" width="1" height="1" fill="#a0a0a0"/><rect x="66" y="236" width="1" height="1" fill="#a0a0a0"/><rect x="66" y="240" width="1" height="1" fill="#a0a0a0"/><rect x="66" y="244" width="1" height="1" fill="#a0a0a0"/><rect x="66" y="248" width="1" height="1" fill="#a0a0a0"/><rect x="66" y="252" width="1" height="1" fill="#a0a0a0"/><rect x="66" y="256" width="1" height="1" fill="#a0a0a0"/><rect x="66" y="260" width="1" height="1" fill="#a0a0a0"/><rect x="66" y="264" width="1" height="1" fill="#a0a0a0"/><rect x="66" y="268" width="1" height="1" fill="#a0a0a0"/><rect x="66" y="272" width="1" height="1" fill="#a0a0a0"/><rect x="66" y="276" width="1" height="1" fill="#a0a0a0"/><rect x="66" y="280" width="1" height="1" fill="#a0a0a0"/><rect x="66" y="284" width="1" height="1" fill="#a0a0a0"/><rect x="66" y="288" width="1" height="1" fill="#a0a0a0"/><rect x="66" y="292" width="1" height="1" fill="#a0a0a0"/><rect x="66" y="296" width="1" height="1" fill="#a0a0a0"/><rect x="66" y="300" width="1" height="1" fill="#a0a0a0"/><rect x="66" y="304" width="1" height="1" fill="#a0a0a0"/><rect x="66" y="308" width="1" height="1" fill="#a0a0a0"/><rect x="66" y="312" width="1" height="1" fill="#a0a0a0"/><rect x="66" y="316" width="1" height="1" fill="#a0a0a0"/><rect x="66" y="320" width="1" height="1" fill="#a0a0a0"/><rect x="66" y="324" width="1" height="1" fill="#a0a0a0"/><rect x="66" y="328" width="1" height="1" fill="#a0a0a0"/><rect x="66" y="332" width="1" height="1" fill="#a0a0a0"/><rect x="66" y="336" width="1" height="1" fill="#a0a0a0"/><rect x="66" y="340" width="1" height="1" fill="#a0a0a0"/><rect x="66" y="344" width="1" height="1" fill="#a0a0a0"/><rect x="66" y="348" width="1" height="1" fill="#a0a0a0"/><rect x="66" y="352" width="1" height="1" fill="#a0a0a0"/><rect x="66" y="356" width="1" height="1" fill="#a0a0a0"/><rect x="66" y="360" width="1" height="1" fill="#a0a0a0"/><rect x="66" y="364" width="1" height="1" fill="#a0a0a0"/><rect x="66" y="368" width="1" height="1" fill="#a0a0a0"/><rect x="66" y="372" width="1" height="1" fill="#a0a0a0"/><rect x="66" y="376" width="1" height="1" fill="#a0a0a0"/><rect x="66" y="380" width="1" height="1" fill="#a0a0a0"/><rect x="66" y="384" width="1" height="1" fill="#a0a0a0"/><rect x="66" y="388" width="1" height="1" fill="#a0a0a0"/><rect x="66" y="392" width="1" height="1" fill="#a0a0a0"/><rect x="66" y="396" width="1" height="1" fill="#a0a0a0"/><rect x="66" y="400" width="1" height="1" fill="#a0a0a0"/><rect x="66" y="404" width="1" height="1" fill="#a0a0a0"/><rect x="66" y="408" width="1" height="1" fill="#a0a0a0"/><rect x="66" y="412" width="1" height="1" fill="#a0a0a0"/><rect x="66" y="416" width="1" height="1" fill="#a0a0a0"/><rect x="66" y="420" width="1" height="1" fill="#a0a0a0"/><rect x="66" y="424" width="1" height="1" fill="#a0a0a0"/><rect x="66" y="428" width="1" height="1" fill="#a0a0a0"/><rect x="66" y="432" width="1" height="1" fill="#a0a0a0"/><rect x="66" y="436" width="1" height="1" fill="#a0a0a0"/><rect x="66" y="440" width="1" height="1" fill="#a0a0a0"/><rect x="66" y="444" width="1" height="1" fill="#a0a0a0"/><rect x="66" y="448" width="1" height="1" fill="#a0a0a0"/><rect x="66" y="452" width="1" height="1" fill="#a0a0a0"/><rect x="66" y="456" width="1" height="1" fill="#a0a0a0"/><rect x="66" y="460" width="1" height="1" fill="#a0a0a0"/><rect x="66" y="464" width="1" height="1" fill="#a0a0a0"/><rect x="66" y="468" width="1" height="1" fill="#a0a0a0"/><rect x="66" y="472" width="1" height="1" fill="#a0a0a0"/><rect x="66" y="476" width="1" height="1" fill="#a0a0a0"/><rect x="66" y="480" width="1" height="1" fill="#a0a0a0"/><rect x="66" y="484" width="1" height="1" fill="#a0a0a0"/><rect x="66" y="488" width="1" height="1" fill="#a0a0a0"/><rect x="66" y="492" width="1" height="1" fill="#a0a0a0"/><rect x="66" y="496" width="1" height="1" fill="#a0a0a0"/><rect x="66" y="500" width="1" height="1" fill="#a0a0a0"/><rect x="66" y="504" width="1" height="1" fill="#a0a0a0"/><rect x="66" y="508" width="1" height="1" fill="#a0a0a0"/><rect x="66" y="512" width="1" height="1" fill="#a0a0a0"/><rect x="66" y="516" width="1" height="1" fill="#a0a0a0"/><rect x="66" y="520" width="1" height="1" fill="#a0a0a0"/><rect x="66" y="524" width="1" height="1" fill="#a0a0a0"/><rect x="66" y="528" width="1" height="1" fill="#a0a0a0"/><rect x="66" y="532" width="1" height="1" fill="#a0a0a0"/><rect x="66" y="536" width="1" height="1" fill="#a0a0a0"/><rect x="62.5" y="190.5" width="8" height="8" rx="1" fill="#fff" stroke="#777"/><path d="M64.5 194.5h4M66.5 192.5v4" stroke="#666"/><rect x="73" y="194" width="1" height="1" fill="#a0a0a0"/><rect x="75" y="194" width="1" height="1" fill="#a0a0a0"/><rect x="77" y="194" width="1" height="1" fill="#a0a0a0"/><rect x="82.5" y="187.5" width="12" height="15" fill="#fde69a" stroke="#e8c44a"/><path d="M94.5 197h-1.5v5" fill="none" stroke="#e8c44a"/><rect x="62.5" y="206.5" width="8" height="8" rx="1" fill="#fff" stroke="#777"/><path d="M64.5 210.5h4M66.5 208.5v4" stroke="#666"/><rect x="73" y="210" width="1" height="1" fill="#a0a0a0"/><rect x="75" y="210" width="1" height="1" fill="#a0a0a0"/><rect x="77" y="210" width="1" height="1" fill="#a0a0a0"/><rect x="82.5" y="203.5" width="12" height="15" fill="#fde69a" stroke="#e8c44a"/><path d="M94.5 213h-1.5v5" fill="none" stroke="#e8c44a"/><rect x="69" y="229" width="1" height="1" fill="#a0a0a0"/><rect x="71" y="229" width="1" height="1" fill="#a0a0a0"/><rect x="73" y="229" width="1" height="1" fill="#a0a0a0"/><rect x="75" y="229" width="1" height="1" fill="#a0a0a0"/><rect x="77" y="229" width="1" height="1" fill="#a0a0a0"/><path d="M89 220L91.5 225.5L97.5 226L93 230L94.5 236L89 233L83.5 236L85 230L80.5 226L86.5 225.5Z" fill="#eceee6" stroke="#b7bda8" stroke-width="1"/><rect x="62.5" y="242.5" width="8" height="8" rx="1" fill="#fff" stroke="#777"/><path d="M64.5 246.5h4M66.5 244.5v4" stroke="#666"/><rect x="73" y="246" width="1" height="1" fill="#a0a0a0"/><rect x="75" y="246" width="1" height="1" fill="#a0a0a0"/><rect x="77" y="246" width="1" height="1" fill="#a0a0a0"/><rect x="82.5" y="239.5" width="12" height="15" fill="#fde69a" stroke="#e8c44a"/><path d="M94.5 249h-1.5v5" fill="none" stroke="#e8c44a"/><rect x="62.5" y="258.5" width="8" height="8" rx="1" fill="#fff" stroke="#777"/><path d="M64.5 262.5h4M66.5 260.5v4" stroke="#666"/><rect x="73" y="262" width="1" height="1" fill="#a0a0a0"/><rect x="75" y="262" width="1" height="1" fill="#a0a0a0"/><rect x="77" y="262" width="1" height="1" fill="#a0a0a0"/><rect x="82.5" y="255.5" width="12" height="15" fill="#fde69a" stroke="#e8c44a"/><path d="M94.5 265h-1.5v5" fill="none" stroke="#e8c44a"/><rect x="62.5" y="274.5" width="8" height="8" rx="1" fill="#fff" stroke="#777"/><path d="M64.5 278.5h4M66.5 276.5v4" stroke="#666"/><rect x="73" y="278" width="1" height="1" fill="#a0a0a0"/><rect x="75" y="278" width="1" height="1" fill="#a0a0a0"/><rect x="77" y="278" width="1" height="1" fill="#a0a0a0"/><rect x="82.5" y="271.5" width="12" height="15" fill="#fde69a" stroke="#e8c44a"/><path d="M94.5 281h-1.5v5" fill="none" stroke="#e8c44a"/><rect x="62.5" y="290.5" width="8" height="8" rx="1" fill="#fff" stroke="#777"/><path d="M64.5 294.5h4M66.5 292.5v4" stroke="#666"/><rect x="73" y="294" width="1" height="1" fill="#a0a0a0"/><rect x="75" y="294" width="1" height="1" fill="#a0a0a0"/><rect x="77" y="294" width="1" height="1" fill="#a0a0a0"/><rect x="82.5" y="287.5" width="12" height="15" fill="#fde69a" stroke="#e8c44a"/><path d="M94.5 297h-1.5v5" fill="none" stroke="#e8c44a"/><rect x="69" y="312" width="1" height="1" fill="#a0a0a0"/><rect x="71" y="312" width="1" height="1" fill="#a0a0a0"/><rect x="73" y="312" width="1" height="1" fill="#a0a0a0"/><rect x="75" y="312" width="1" height="1" fill="#a0a0a0"/><rect x="77" y="312" width="1" height="1" fill="#a0a0a0"/><g transform="translate(80,302)"><rect x="0" y="0" width="17" height="17" rx="3.5" fill="#6f9bd0"/><text x="8.5" y="11.5" font-family="Liberation Sans" font-size="7.5" fill="#fff" text-anchor="middle" textLength="12" lengthAdjust="spacingAndGlyphs">DB2</text></g><rect x="69" y="332" width="1" height="1" fill="#a0a0a0"/><rect x="71" y="332" width="1" height="1" fill="#a0a0a0"/><rect x="73" y="332" width="1" height="1" fill="#a0a0a0"/><rect x="75" y="332" width="1" height="1" fill="#a0a0a0"/><rect x="77" y="332" width="1" height="1" fill="#a0a0a0"/><g transform="translate(80,323)"><path d="M0.5 0.5C9 1.5 18 4 20 9.5C13 11 6 14 0.5 18C5 13 5 6 0.5 0.5Z" fill="#6d9bd0" stroke="#1f3f68" stroke-width="1.1"/><path d="M6.5 1.5C8.5 5 8.5 10 7 13.5M11.5 2.5C13 5 13 8 12 11M15.5 4C16.5 6 16.5 8 16 10" fill="none" stroke="#1f3f68" stroke-width="1"/></g><rect x="69" y="352" width="1" height="1" fill="#a0a0a0"/><rect x="71" y="352" width="1" height="1" fill="#a0a0a0"/><rect x="73" y="352" width="1" height="1" fill="#a0a0a0"/><rect x="75" y="352" width="1" height="1" fill="#a0a0a0"/><rect x="77" y="352" width="1" height="1" fill="#a0a0a0"/><g transform="translate(80,343)"><rect x="1.5" y="1" width="15.5" height="11" rx="4" fill="#6f98cc" stroke="#1c3a60" stroke-width="2"/></g><rect x="69" y="372" width="1" height="1" fill="#a0a0a0"/><rect x="71" y="372" width="1" height="1" fill="#a0a0a0"/><rect x="73" y="372" width="1" height="1" fill="#a0a0a0"/><rect x="75" y="372" width="1" height="1" fill="#a0a0a0"/><rect x="77" y="372" width="1" height="1" fill="#a0a0a0"/><g transform="translate(80,363)"><path d="M2.0 2.0C4.0 0.5 13.0 0.5 16.5 1.5C18.5 2.5 19.0 5.0 18.0 8.0C17.5 10.0 16.0 11.0 15.0 11.0L18.0 12.0L14.5 12.8C13.0 13.5 12.5 15.5 12.0 17.0C11.0 19.0 9.0 19.0 9.0 17.5L8.5 13.0L6.0 13.5C3.0 13.5 1.0 11.0 0.8 7.0C0.6 4.5 1.0 3.0 2.0 2.0Z" fill="#6d9bd0" stroke="#2f5a8a" stroke-width="1.1"/><path d="M5.5 2.5C5.0 6.0 5.5 10.0 7.5 13.0M14.0 3.0C13.0 5.0 13.5 8.0 15.0 11.0" fill="none" stroke="#2f5a8a" stroke-width="1"/><circle cx="11.5" cy="6" r="0.8" fill="#2f5a8a"/></g><rect x="69" y="392" width="1" height="1" fill="#a0a0a0"/><rect x="71" y="392" width="1" height="1" fill="#a0a0a0"/><rect x="73" y="392" width="1" height="1" fill="#a0a0a0"/><rect x="75" y="392" width="1" height="1" fill="#a0a0a0"/><rect x="77" y="392" width="1" height="1" fill="#a0a0a0"/><g transform="translate(80,383)"><path d="M0.5 19.5C3 11 9 3 19 0.5C19 6 14 12 4 14Z" fill="#a9c6ea" stroke="#2f4f7a" stroke-width="1"/><path d="M1.5 18C6 11 11 6 17 3" fill="none" stroke="#2f4f7a" stroke-width="0.9"/><path d="M7 10C10 9 13 8 16 6" fill="none" stroke="#e6f0fb" stroke-width="0.8"/></g><rect x="69" y="413" width="1" height="1" fill="#a0a0a0"/><rect x="71" y="413" width="1" height="1" fill="#a0a0a0"/><rect x="73" y="413" width="1" height="1" fill="#a0a0a0"/><rect x="75" y="413" width="1" height="1" fill="#a0a0a0"/><rect x="77" y="413" width="1" height="1" fill="#a0a0a0"/><g transform="translate(80,403)"><circle cx="10" cy="9.5" r="9" fill="#eef4fb" stroke="#5b8bc6" stroke-width="1"/><path d="M1.5 9.5H18.5M3 5H17M3 14H17M10 0.5V18.5" stroke="#9dbbe2" stroke-width="0.9"/><ellipse cx="10" cy="9.5" rx="4.5" ry="9" fill="none" stroke="#9dbbe2" stroke-width="0.9"/><path d="M5 3L8.5 14L12 3H16" fill="none" stroke="#1f2f45" stroke-width="1.1"/><circle cx="5" cy="3" r="1.5" fill="#fff" stroke="#1f2f45" stroke-width="0.9"/><circle cx="12" cy="3" r="1.5" fill="#fff" stroke="#1f2f45" stroke-width="0.9"/><circle cx="16" cy="3" r="1.5" fill="#fff" stroke="#1f2f45" stroke-width="0.9"/><circle cx="8.5" cy="14" r="1.5" fill="#fff" stroke="#1f2f45" stroke-width="0.9"/><circle cx="4.8" cy="15.2" r="4.6" fill="#1b4d3a" stroke="#222" stroke-width="0.8"/><path d="M2.5 13l2 -1 1.5 1.5 -1 2zM5.5 16l2 0 0 2 -2 0.5z" fill="#2ec02e"/><circle cx="6.5" cy="13.5" r="1" fill="#3a8ad8"/><circle cx="3" cy="17" r="1" fill="#3a8ad8"/></g><rect x="69" y="432" width="1" height="1" fill="#a0a0a0"/><rect x="71" y="432" width="1" height="1" fill="#a0a0a0"/><rect x="73" y="432" width="1" height="1" fill="#a0a0a0"/><rect x="75" y="432" width="1" height="1" fill="#a0a0a0"/><rect x="77" y="432" width="1" height="1" fill="#a0a0a0"/><g transform="translate(80,423)"><circle cx="10" cy="9.5" r="9" fill="#a9c2e0" stroke="#6f95c5" stroke-width="1"/><path d="M1.5 9.5h17M10 1.5v17M3 5.5h14M3 13.5h14" stroke="#e8f0fa" stroke-width="0.6" opacity="0.6"/><path d="M4 5.5l3 -0.5 1.5 1.5 -1.5 2 -1 2 -1.5 -1.5 -1 -2z M7 12l1.5 0 -0.5 3.5 -1 0.5z M11.5 4.5l4 0 0.5 1.5 -1.5 1.5 -1 4 -1.5 0.5 -0.5 -3 -1 -2.5z M15.5 12l1 1 -1 1.5z" fill="#2f4f7a"/><circle cx="4.8" cy="15.2" r="4.6" fill="#1b4d3a" stroke="#222" stroke-width="0.8"/><path d="M2.5 13l2 -1 1.5 1.5 -1 2zM5.5 16l2 0 0 2 -2 0.5z" fill="#2ec02e"/><circle cx="6.5" cy="13.5" r="1" fill="#3a8ad8"/><circle cx="3" cy="17" r="1" fill="#3a8ad8"/></g><rect x="69" y="452" width="1" height="1" fill="#a0a0a0"/><rect x="71" y="452" width="1" height="1" fill="#a0a0a0"/><rect x="73" y="452" width="1" height="1" fill="#a0a0a0"/><rect x="75" y="452" width="1" height="1" fill="#a0a0a0"/><rect x="77" y="452" width="1" height="1" fill="#a0a0a0"/><g transform="translate(80,443)"><circle cx="10" cy="9.5" r="9" fill="#eef4fb" stroke="#5b8bc6" stroke-width="1"/><path d="M1.5 9.5H18.5M3 5H17M3 14H17M10 0.5V18.5" stroke="#9dbbe2" stroke-width="0.9"/><ellipse cx="10" cy="9.5" rx="4.5" ry="9" fill="none" stroke="#9dbbe2" stroke-width="0.9"/></g><rect x="69" y="472" width="1" height="1" fill="#a0a0a0"/><rect x="71" y="472" width="1" height="1" fill="#a0a0a0"/><rect x="73" y="472" width="1" height="1" fill="#a0a0a0"/><rect x="75" y="472" width="1" height="1" fill="#a0a0a0"/><rect x="77" y="472" width="1" height="1" fill="#a0a0a0"/><g transform="translate(80,462)"><circle cx="10" cy="9.5" r="9" fill="#a9c2e0" stroke="#6f95c5" stroke-width="1"/><path d="M1.5 9.5h17M10 1.5v17M3 5.5h14M3 13.5h14" stroke="#e8f0fa" stroke-width="0.6" opacity="0.6"/><path d="M4 5.5l3 -0.5 1.5 1.5 -1.5 2 -1 2 -1.5 -1.5 -1 -2z M7 12l1.5 0 -0.5 3.5 -1 0.5z M11.5 4.5l4 0 0.5 1.5 -1.5 1.5 -1 4 -1.5 0.5 -0.5 -3 -1 -2.5z M15.5 12l1 1 -1 1.5z" fill="#2f4f7a"/></g><rect x="69" y="492" width="1" height="1" fill="#a0a0a0"/><rect x="71" y="492" width="1" height="1" fill="#a0a0a0"/><rect x="73" y="492" width="1" height="1" fill="#a0a0a0"/><rect x="75" y="492" width="1" height="1" fill="#a0a0a0"/><rect x="77" y="492" width="1" height="1" fill="#a0a0a0"/><g transform="translate(80,483)"><circle cx="10" cy="9.5" r="9" fill="#2a4f7e" stroke="#1c3a60" stroke-width="1"/><path d="M1.8 6.5H18.2M1.8 12.5H18.2" stroke="#a9c6ea" stroke-width="2.2"/><ellipse cx="10" cy="9.5" rx="4" ry="9" fill="none" stroke="#a9c6ea" stroke-width="1.2"/><path d="M10 0.5V18.5" stroke="#a9c6ea" stroke-width="0.8"/></g><rect x="69" y="512" width="1" height="1" fill="#a0a0a0"/><rect x="71" y="512" width="1" height="1" fill="#a0a0a0"/><rect x="73" y="512" width="1" height="1" fill="#a0a0a0"/><rect x="75" y="512" width="1" height="1" fill="#a0a0a0"/><rect x="77" y="512" width="1" height="1" fill="#a0a0a0"/><g transform="translate(80,503)"><circle cx="10" cy="9.5" r="9" fill="#eef4fb" stroke="#5b8bc6" stroke-width="1"/><path d="M1.5 9.5H18.5M3 5H17M3 14H17M10 0.5V18.5" stroke="#9dbbe2" stroke-width="0.9"/><ellipse cx="10" cy="9.5" rx="4.5" ry="9" fill="none" stroke="#9dbbe2" stroke-width="0.9"/><path d="M5 3L8.5 14L12 3H16" fill="none" stroke="#1f2f45" stroke-width="1.1"/><circle cx="5" cy="3" r="1.5" fill="#fff" stroke="#1f2f45" stroke-width="0.9"/><circle cx="12" cy="3" r="1.5" fill="#fff" stroke="#1f2f45" stroke-width="0.9"/><circle cx="16" cy="3" r="1.5" fill="#fff" stroke="#1f2f45" stroke-width="0.9"/><circle cx="8.5" cy="14" r="1.5" fill="#fff" stroke="#1f2f45" stroke-width="0.9"/></g><rect x="69" y="533" width="1" height="1" fill="#a0a0a0"/><rect x="71" y="533" width="1" height="1" fill="#a0a0a0"/><rect x="73" y="533" width="1" height="1" fill="#a0a0a0"/><rect x="75" y="533" width="1" height="1" fill="#a0a0a0"/><rect x="77" y="533" width="1" height="1" fill="#a0a0a0"/><g transform="translate(80,523)"><circle cx="10" cy="9.5" r="9" fill="#a9c2e0" stroke="#6f95c5" stroke-width="1"/><path d="M1.5 9.5h17M10 1.5v17M3 5.5h14M3 13.5h14" stroke="#e8f0fa" stroke-width="0.6" opacity="0.6"/><path d="M4 5.5l3 -0.5 1.5 1.5 -1.5 2 -1 2 -1.5 -1.5 -1 -2z M7 12l1.5 0 -0.5 3.5 -1 0.5z M11.5 4.5l4 0 0.5 1.5 -1.5 1.5 -1 4 -1.5 0.5 -0.5 -3 -1 -2.5z M15.5 12l1 1 -1 1.5z" fill="#2f4f7a"/></g></svg>
<div style="position:absolute;left:195px;top:132px;width:1027px;height:482px;background:#fff"></div>
<svg style="position:absolute;left:0px;top:0px;" width="1222" height="614" viewBox="0 0 1222 614"><defs><clipPath id="mc"><rect x="195" y="132" width="1027" height="482"/></clipPath><pattern id="tex" width="40" height="40" patternUnits="userSpaceOnUse"><path d="M0 7h9v9h7M20 0v12l8 6h12M3 40l10-14h12v-8M30 40v-10l10-4M0 28h6l4 6" fill="none" stroke="#d2e0f0" stroke-width="0.7" opacity="0.8"/></pattern></defs><g clip-path="url(#mc)"><path d="M1040.4 328.7 L1056.5 332.4 L1060.2 344.8 L1062.6 369.5 L1076.3 377.0 L1106.0 389.3 L1108.5 401.7 L1128.3 414.0 L1145.6 424.0 L1150.8 440.0 L1152.0 447.4 L1158.8 456.8 L1162.0 468.0 L1157.5 483.8 L1154.8 496.0 L1155.5 504.0 L1154.0 510.0 L1147.4 516.0 L1142.7 520.0 L1130.7 530.4 L1113.4 542.8 L1125.8 562.6 L1125.8 580.0 L1108.5 592.3 L1096.0 614.0 L1096.0 616.0 L735.0 616.0 L735.6 614.0 L745.0 598.0 L754.0 585.0 L760.0 577.0 L767.6 567.5 L784.6 564.0 L801.5 554.0 L788.0 540.0 L777.0 522.0 L773.0 479.0 L793.0 464.0 L805.0 443.0 L820.0 428.0 L841.0 410.0 L1040.0 300.0Z" fill="#a8c0de"/><clipPath id="oc"><path d="M1040.4 328.7 L1056.5 332.4 L1060.2 344.8 L1062.6 369.5 L1076.3 377.0 L1106.0 389.3 L1108.5 401.7 L1128.3 414.0 L1145.6 424.0 L1150.8 440.0 L1152.0 447.4 L1158.8 456.8 L1162.0 468.0 L1157.5 483.8 L1154.8 496.0 L1155.5 504.0 L1154.0 510.0 L1147.4 516.0 L1142.7 520.0 L1130.7 530.4 L1113.4 542.8 L1125.8 562.6 L1125.8 580.0 L1108.5 592.3 L1096.0 614.0 L1096.0 616.0 L735.0 616.0 L735.6 614.0 L745.0 598.0 L754.0 585.0 L760.0 577.0 L767.6 567.5 L784.6 564.0 L801.5 554.0 L788.0 540.0 L777.0 522.0 L773.0 479.0 L793.0 464.0 L805.0 443.0 L820.0 428.0 L841.0 410.0 L1040.0 300.0Z"/></clipPath><g clip-path="url(#oc)"><path d="M874.2 364.3L874.2 369.5L876.0 369.5L876.0 373.0M972.0 337.4L972.0 341.7L975.2 341.7L975.2 336.4L971.3 336.4M1028.3 350.3L1028.3 353.5L1024.0 353.5L1024.0 350.1L1018.3 350.1M1076.6 525.5L1073.7 525.5L1068.9 525.5L1068.9 523.7L1065.9 523.7L1065.9 529.5L1065.9 525.4L1062.8 525.4M931.2 567.0L931.2 571.6L926.5 571.6L926.5 568.4L930.1 568.4L930.1 572.1L930.1 574.2M1129.2 466.0L1133.2 466.0L1127.8 466.0L1121.9 466.0L1124.1 466.0L1124.1 470.4L1119.9 470.4M797.6 477.2L797.6 483.0L792.2 483.0L792.2 479.7L794.0 479.7L797.5 479.7M757.6 320.1L763.4 320.1L763.4 317.6L760.7 317.6M938.9 353.9L935.2 353.9L935.2 352.0L935.2 355.6L932.8 355.6L932.8 359.6L932.8 362.4M847.3 427.8L843.4 427.8L843.4 432.1L843.4 437.3L847.1 437.3M1074.7 458.8L1068.9 458.8L1064.2 458.8L1067.3 458.8L1067.3 455.2L1071.6 455.2L1071.6 459.7L1071.6 457.6M1057.6 460.5L1054.6 460.5L1054.6 465.4L1054.6 467.7L1050.4 467.7L1048.2 467.7L1048.2 470.7L1053.3 470.7L1053.3 465.0M818.8 576.9L821.6 576.9L818.6 576.9L816.8 576.9L812.4 576.9M1112.6 358.4L1111.0 358.4L1115.3 358.4L1115.3 362.1L1112.3 362.1L1114.3 362.1L1114.3 364.8L1118.3 364.8M998.4 468.6L998.4 465.9L995.8 465.9L1001.3 465.9L1003.4 465.9L1003.4 468.8L1000.9 468.8L1006.5 468.8L1002.1 468.8M1114.6 604.5L1111.3 604.5L1111.3 609.0L1107.9 609.0M819.2 413.6L819.2 410.6L817.6 410.6L817.6 413.5M1130.0 387.2L1130.0 389.9L1130.0 392.2L1130.0 386.9M965.7 471.3L967.6 471.3L970.0 471.3L970.0 472.9L970.0 474.8L964.6 474.8M1162.6 442.8L1162.6 444.9L1162.6 439.0L1160.1 439.0L1160.1 442.9L1163.9 442.9L1163.9 437.8L1165.5 437.8M840.6 451.4L840.6 448.0L835.1 448.0L835.1 442.1L840.6 442.1L840.6 445.1L840.6 443.6L838.9 443.6L834.3 443.6M1032.9 333.3L1029.3 333.3L1029.3 330.3L1023.5 330.3L1023.5 328.0L1027.1 328.0M1068.8 346.7L1068.8 350.0L1071.6 350.0L1071.6 355.8L1066.9 355.8M1044.9 465.3L1049.3 465.3L1044.6 465.3L1049.7 465.3L1054.6 465.3L1058.7 465.3L1058.7 463.6L1058.7 460.4M1004.9 504.1L1004.9 501.4L1004.9 506.3L1003.1 506.3L1003.1 504.5L1008.0 504.5L1002.2 504.5M768.0 587.7L772.3 587.7L772.3 585.5L776.9 585.5M761.1 399.0L761.1 396.5L757.3 396.5L757.3 401.5L755.4 401.5L755.4 397.9L755.4 401.2L753.5 401.2L751.4 401.2M1037.4 388.0L1037.4 391.3L1033.7 391.3L1033.7 386.5L1030.8 386.5L1030.8 381.6L1036.5 381.6M859.6 429.4L857.8 429.4L852.4 429.4L852.4 424.2L850.3 424.2L850.3 421.3L850.3 424.7L850.3 429.0M756.3 535.3L751.9 535.3L751.9 540.9L748.5 540.9L748.5 536.1M837.6 462.1L837.6 464.3L833.9 464.3L833.9 460.8M928.5 361.0L930.8 361.0L930.8 364.2L930.8 359.3M1055.7 381.7L1052.0 381.7L1052.0 385.5L1046.4 385.5M926.7 600.5L926.7 598.4L926.7 592.9L926.7 596.6M1133.5 562.7L1133.5 565.3L1135.7 565.3L1131.0 565.3L1131.0 570.3L1131.0 572.9L1133.8 572.9M962.1 448.6L962.1 450.4L964.7 450.4L964.7 447.6M871.0 566.8L873.6 566.8L873.6 563.4L871.2 563.4L871.2 560.9L871.2 563.4L866.5 563.4L866.5 561.0M952.1 380.3L952.1 385.3L949.6 385.3L949.6 389.6L949.6 393.3L949.6 391.1M745.2 495.3L743.4 495.3L743.4 490.6L743.4 496.5L741.1 496.5L741.1 492.1L741.1 486.1L739.5 486.1L739.5 489.5M1061.3 431.8L1061.3 426.6L1066.0 426.6L1066.0 432.2L1061.1 432.2L1061.1 428.8M750.0 338.4L750.0 340.8L750.0 337.7L755.8 337.7L755.8 333.0L755.8 335.9M835.6 459.7L835.6 454.7L835.6 452.6L830.5 452.6L835.4 452.6L835.4 449.6L835.4 453.8M803.8 439.9L803.8 435.9L807.2 435.9L809.9 435.9L809.9 432.5L807.8 432.5L807.8 437.0M861.4 402.1L866.2 402.1L866.2 404.5L871.7 404.5L871.7 407.8L874.2 407.8M1161.1 350.1L1155.8 350.1L1155.8 352.9L1160.0 352.9L1163.2 352.9M846.8 548.7L846.8 544.3L849.9 544.3L849.9 550.3M1015.2 379.8L1011.9 379.8L1011.9 382.7L1008.1 382.7L1008.1 380.8L1010.3 380.8M906.0 399.7L906.0 402.6L902.0 402.6L902.0 401.0L898.7 401.0L898.7 402.6L893.5 402.6L893.5 405.7L895.3 405.7M1126.2 346.2L1126.2 351.0L1129.0 351.0L1127.0 351.0L1132.1 351.0L1132.1 356.3M942.6 335.7L942.6 337.6L937.2 337.6L937.2 335.2L934.7 335.2L932.5 335.2L932.5 337.8M976.8 542.7L974.8 542.7L974.8 538.4L977.7 538.4L977.7 533.9L980.0 533.9M945.5 389.2L945.5 383.9L943.7 383.9L943.7 382.0L948.1 382.0L948.1 380.1L948.1 383.9M1119.8 511.9L1119.8 517.3L1113.9 517.3L1113.9 522.4M1045.1 385.0L1045.1 389.9L1040.8 389.9L1040.8 386.2L1043.5 386.2L1043.5 387.8L1039.1 387.8L1039.1 393.3M848.7 545.9L842.8 545.9L842.8 550.0L838.9 550.0L835.7 550.0L831.6 550.0M770.0 387.6L770.0 384.8L764.1 384.8L769.0 384.8M999.9 447.1L999.9 449.2L1001.6 449.2L1001.6 452.3M964.7 441.5L962.2 441.5L962.2 443.1L962.2 446.6L956.8 446.6M848.6 323.4L848.6 317.9L844.8 317.9L844.8 323.4L846.4 323.4L846.4 325.2L850.4 325.2L850.4 322.8M810.1 411.0L804.1 411.0L802.6 411.0L799.0 411.0M1163.5 396.9L1163.5 393.8L1163.5 391.2L1157.9 391.2M1134.3 582.9L1132.7 582.9L1138.0 582.9L1133.1 582.9L1133.1 586.1L1127.8 586.1L1127.8 590.0L1127.8 593.5M867.3 382.3L867.3 386.4L869.0 386.4L869.0 388.6M748.3 360.7L748.3 365.3L744.1 365.3L744.1 371.1M1060.0 529.1L1062.4 529.1L1062.4 534.9L1062.4 530.5L1064.5 530.5M879.7 396.8L878.0 396.8L873.0 396.8L877.3 396.8L878.9 396.8L878.9 401.5M1091.0 488.9L1092.5 488.9L1092.5 493.8L1088.8 493.8L1088.8 488.6L1083.0 488.6L1083.0 490.8M834.6 368.7L834.6 372.4L831.5 372.4L837.0 372.4M1012.7 429.4L1018.3 429.4L1018.3 434.8L1018.3 436.9L1021.2 436.9L1017.7 436.9L1017.7 433.4M789.2 455.8L789.2 452.0L793.9 452.0L788.0 452.0L788.0 455.1M816.4 606.7L816.4 608.9L818.6 608.9L813.8 608.9M782.0 588.0L785.6 588.0L785.6 593.0L781.2 593.0L781.2 590.4L778.6 590.4L774.5 590.4M1022.2 511.8L1022.2 516.5L1017.8 516.5L1017.8 519.2L1017.8 516.6L1017.8 512.2L1017.8 515.9L1021.2 515.9L1024.1 515.9M945.6 606.5L948.1 606.5L948.1 604.6L952.8 604.6L952.8 599.4L958.6 599.4L960.9 599.4L965.2 599.4M899.2 338.1L894.9 338.1L894.9 336.1L894.9 341.8L894.9 336.0L896.9 336.0L892.6 336.0M1044.9 559.5L1040.5 559.5L1040.5 562.3L1040.5 565.9L1037.3 565.9L1032.8 565.9L1032.8 561.2L1028.3 561.2L1028.3 564.6M890.8 593.0L890.8 591.2L890.8 589.0L892.4 589.0M766.0 406.1L766.0 408.3L769.5 408.3L769.5 411.6L774.1 411.6L774.1 406.1L778.7 406.1L782.2 406.1M848.7 388.8L844.7 388.8L844.7 386.7L847.0 386.7L847.0 383.8L841.7 383.8L841.7 389.8M890.0 510.1L885.4 510.1L883.5 510.1L883.5 515.6M913.7 357.3L910.6 357.3L914.6 357.3L914.6 354.3L909.3 354.3L909.3 350.5L906.6 350.5L911.1 350.5L911.1 347.6M1153.3 345.7L1153.3 341.0L1151.6 341.0L1151.6 339.3L1147.1 339.3L1147.1 343.6L1142.6 343.6M809.8 515.1L809.8 520.1L804.6 520.1L804.6 517.4L806.2 517.4L806.2 521.8L810.1 521.8M916.1 524.5L914.5 524.5L914.5 530.5L917.9 530.5M938.0 583.4L938.0 584.9L938.0 590.2L938.0 592.3L934.0 592.3L936.3 592.3L936.3 597.2M771.2 504.8L771.2 500.3L771.2 502.0L772.8 502.0L772.8 504.9L772.8 510.2L767.0 510.2M806.6 604.1L804.3 604.1L804.3 599.1L804.3 594.1L802.6 594.1L807.3 594.1L803.1 594.1L803.1 600.0L807.7 600.0M856.8 320.5L859.0 320.5L859.0 322.6L853.7 322.6L853.7 320.7L853.7 323.1L851.9 323.1M823.8 394.9L823.8 398.5L826.9 398.5L826.9 394.4L826.9 390.5L829.3 390.5L829.3 388.2M977.7 438.3L977.7 435.7L975.7 435.7L977.9 435.7L977.9 439.6M823.0 576.0L823.0 572.0L823.0 574.7L823.0 579.7L824.7 579.7L827.9 579.7L827.9 575.7L833.2 575.7M1010.1 591.1L1010.1 593.8L1004.3 593.8L1004.3 588.4M1161.4 385.2L1167.2 385.2L1172.7 385.2L1172.7 381.4L1174.9 381.4L1170.3 381.4M924.8 511.8L927.4 511.8L927.4 508.6L929.6 508.6L929.6 514.2L934.8 514.2M1107.7 581.3L1101.9 581.3L1097.6 581.3L1100.5 581.3L1100.5 585.6L1105.3 585.6L1109.3 585.6M799.2 443.0L796.5 443.0L796.5 440.7L793.0 440.7M1155.8 336.7L1155.8 331.1L1155.8 333.1L1155.8 329.6L1155.8 335.3L1159.2 335.3L1159.2 330.5L1154.8 330.5L1157.8 330.5M1074.5 597.4L1071.1 597.4L1071.1 601.5L1071.1 605.4L1071.1 607.7L1071.1 602.2M810.4 360.3L810.4 355.1L808.6 355.1L803.0 355.1L803.0 349.8L799.6 349.8L799.6 354.3L794.4 354.3L794.4 359.0M1135.8 604.8L1131.1 604.8L1136.5 604.8L1136.5 602.8L1138.1 602.8L1138.1 608.7M807.2 411.7L807.2 413.3L801.9 413.3L801.9 418.0M775.4 372.6L771.7 372.6L771.7 374.7L774.2 374.7L774.2 370.6L769.0 370.6L769.0 374.8M1139.8 548.4L1134.5 548.4L1130.4 548.4L1135.8 548.4L1135.8 546.3M916.5 506.0L914.2 506.0L914.2 509.8L910.8 509.8L916.5 509.8L922.0 509.8L922.0 505.4L922.0 509.7M842.7 473.0L840.0 473.0L840.0 475.2L834.2 475.2M988.8 594.0L986.7 594.0L982.6 594.0L982.6 592.1L982.6 596.3L980.2 596.3L980.2 592.4L983.1 592.4M816.2 480.5L816.2 478.9L810.4 478.9L810.4 475.2L810.4 477.7L810.4 479.9L813.5 479.9M1093.8 424.1L1093.8 426.6L1098.3 426.6L1098.3 422.3L1098.3 418.5L1102.6 418.5L1102.6 416.6L1102.6 412.4M1162.0 364.0L1162.0 369.4L1158.4 369.4L1158.4 366.3L1154.4 366.3L1154.4 364.8M864.0 477.8L864.0 481.9L858.4 481.9L862.6 481.9L860.2 481.9L866.0 481.9L866.0 477.9M965.7 411.9L965.7 408.0L962.6 408.0L962.6 409.6L960.6 409.6L960.6 414.0L960.6 408.1M1065.0 584.4L1065.0 588.2L1067.9 588.2L1071.7 588.2L1071.7 585.4L1071.7 579.5L1075.5 579.5L1075.5 581.8L1079.6 581.8M1162.3 507.1L1163.9 507.1L1163.9 511.7L1163.9 515.0L1168.4 515.0L1168.4 510.1L1168.4 515.6M911.8 355.7L913.8 355.7L913.8 350.0L913.8 354.2L909.2 354.2L909.2 351.6L911.9 351.6L917.6 351.6M928.4 433.4L932.6 433.4L932.6 437.7L934.8 437.7L934.8 432.1L930.6 432.1L928.8 432.1M986.5 441.6L990.2 441.6L990.2 439.3L984.3 439.3L984.3 436.2L981.0 436.2L981.0 430.3L981.0 433.4L977.4 433.4M750.0 515.3L752.6 515.3L752.6 518.0L756.2 518.0L756.2 514.9M1147.1 381.2L1147.1 378.7L1141.4 378.7L1141.4 375.3L1144.7 375.3L1144.7 380.1L1142.0 380.1L1142.0 384.9M902.7 345.3L905.6 345.3L905.6 339.7L910.4 339.7L910.4 337.6M908.5 587.2L908.5 592.6L908.5 590.3L904.0 590.3L902.4 590.3L902.4 585.0L902.4 583.1L908.0 583.1L909.6 583.1M920.2 542.5L918.5 542.5L918.5 548.3L913.8 548.3L909.3 548.3L907.3 548.3L912.7 548.3L917.3 548.3L914.8 548.3M772.0 524.2L776.3 524.2L776.3 522.3L773.3 522.3L773.3 526.9L777.1 526.9L777.1 524.5L779.3 524.5L779.3 527.1M884.3 347.2L884.3 345.1L886.9 345.1L886.9 349.7L886.9 346.6M1039.3 492.7L1034.1 492.7L1036.4 492.7L1036.4 489.2L1036.4 487.2L1040.1 487.2L1040.1 489.9L1043.0 489.9L1043.0 486.4M974.7 333.4L972.9 333.4L976.9 333.4L976.9 327.6L980.8 327.6L980.8 325.7L975.1 325.7M768.6 539.7L763.3 539.7L763.3 545.6L758.6 545.6L761.6 545.6L761.6 548.7L757.6 548.7M844.0 337.0L838.4 337.0L832.6 337.0L832.6 332.2L836.9 332.2L836.9 329.9L840.3 329.9L843.9 329.9L842.4 329.9M766.0 336.3L766.0 338.0L771.2 338.0L771.2 336.5L767.6 336.5L767.6 339.9M1148.6 502.2L1148.6 497.5L1145.7 497.5L1149.4 497.5M882.7 580.2L880.2 580.2L880.2 578.1L874.4 578.1L874.4 574.0M832.7 604.7L830.7 604.7L830.7 602.4L830.7 599.9L834.8 599.9L840.4 599.9L835.8 599.9L835.8 603.6L841.6 603.6M1030.0 480.0L1030.0 484.1L1035.0 484.1L1035.0 485.8L1039.1 485.8M786.8 359.9L786.8 364.2L781.2 364.2L781.2 359.3M1051.5 323.4L1048.3 323.4L1046.6 323.4L1046.6 327.4L1052.2 327.4M818.1 451.3L818.1 454.8L816.2 454.8L816.2 450.8L816.2 455.3L813.6 455.3L812.0 455.3L808.3 455.3M1079.2 330.4L1074.6 330.4L1068.8 330.4L1068.8 335.9L1064.9 335.9L1069.1 335.9L1069.1 330.7L1065.5 330.7L1065.5 327.7M743.8 455.1L743.8 459.4L741.1 459.4L741.1 463.5M749.7 484.8L749.7 489.8L752.4 489.8L758.2 489.8L758.2 484.9M1008.1 423.0L1008.1 420.0L1002.7 420.0L1002.7 425.5L1002.7 427.7L997.2 427.7L997.2 424.4M987.3 362.3L987.3 357.5L989.7 357.5L989.7 354.6L989.7 351.5L989.7 345.9M810.4 583.9L810.4 588.3L810.4 585.8L804.8 585.8L809.2 585.8M759.4 357.9L754.3 357.9L752.8 357.9L752.8 352.5M826.3 416.1L826.3 412.4L831.6 412.4L831.6 408.1L831.6 404.8L831.6 403.2L837.6 403.2L837.6 398.5L839.2 398.5M1064.9 346.4L1064.9 349.5L1060.7 349.5L1060.7 345.2L1060.7 340.2L1056.7 340.2L1056.7 337.1M738.9 459.9L738.9 462.1L744.8 462.1L744.8 464.1L742.5 464.1L748.0 464.1M885.9 528.6L883.4 528.6L886.6 528.6L886.6 534.2L885.1 534.2L885.1 537.3L881.7 537.3M1004.7 385.9L1009.4 385.9L1009.4 383.5L1006.5 383.5L1006.5 387.5L1000.8 387.5M793.7 408.2L797.4 408.2L797.4 403.7L799.1 403.7M1051.3 333.6L1051.3 335.9L1051.3 338.7L1051.3 340.9L1048.4 340.9L1048.4 338.7L1045.4 338.7M1156.2 329.7L1160.9 329.7L1160.9 325.5L1165.6 325.5L1168.6 325.5L1168.6 329.2L1170.1 329.2L1170.1 331.4L1175.3 331.4M827.5 604.4L827.5 606.3L830.2 606.3L830.2 604.6L833.2 604.6L833.2 600.6L827.3 600.6L827.3 597.7L825.1 597.7M1080.6 584.0L1080.6 579.8L1085.4 579.8L1089.9 579.8L1094.9 579.8M975.2 521.3L978.1 521.3L978.1 516.9L973.9 516.9L973.9 512.6L972.1 512.6L972.1 508.1L977.2 508.1L972.3 508.1M938.5 532.1L938.5 536.2L933.6 536.2L933.6 532.3L931.3 532.3L931.3 538.1L928.2 538.1M801.2 393.9L796.7 393.9L796.7 392.0L800.2 392.0L800.2 395.7L800.2 397.9M958.9 389.9L953.8 389.9L953.8 387.5L951.5 387.5L948.8 387.5L946.9 387.5M821.7 444.4L821.7 449.4L821.7 452.6L821.7 449.8L817.5 449.8L817.5 453.0L817.5 450.7L819.9 450.7M926.6 435.6L931.5 435.6L931.5 431.6L931.5 428.1L929.7 428.1L929.7 431.9L924.9 431.9L924.9 426.3L919.9 426.3M829.9 342.7L829.9 346.4L831.7 346.4L835.3 346.4M1056.6 568.0L1061.8 568.0L1061.8 570.4L1057.9 570.4L1057.9 567.2L1054.1 567.2L1054.1 570.0M1079.8 571.9L1081.9 571.9L1081.9 568.7L1086.6 568.7L1086.6 573.8M1039.0 515.2L1039.0 511.3L1039.0 516.5L1033.9 516.5M825.0 606.1L825.0 600.4L827.4 600.4L827.4 604.8L822.0 604.8L822.0 610.4L817.4 610.4M964.8 366.7L964.8 369.2L967.2 369.2L963.9 369.2L960.4 369.2L960.4 370.9L955.1 370.9L949.7 370.9L944.9 370.9M874.5 567.3L868.6 567.3L871.6 567.3L871.6 569.8L873.7 569.8L873.7 574.4L876.8 574.4L882.5 574.4L882.5 571.3M1127.6 378.9L1131.8 378.9L1131.8 382.6L1134.6 382.6L1137.7 382.6L1137.7 380.8M941.8 416.9L936.8 416.9L932.0 416.9L932.0 420.9M933.4 329.9L933.4 333.3L938.7 333.3L938.7 337.8M1020.0 346.5L1014.6 346.5L1014.6 349.1L1014.6 347.1L1010.6 347.1L1010.6 349.4L1013.8 349.4L1013.8 353.4L1013.8 358.1M741.5 597.3L745.6 597.3L745.6 595.1L745.6 598.5L751.1 598.5L751.1 601.0L756.1 601.0L754.3 601.0L756.0 601.0M882.1 558.3L880.5 558.3L882.2 558.3L882.2 562.1L885.2 562.1M1132.7 521.7L1132.7 515.7L1128.8 515.7L1133.7 515.7M1003.8 568.6L1003.8 564.2L998.7 564.2L998.7 569.1M1033.3 409.1L1038.5 409.1L1038.5 403.9L1038.5 408.0L1033.5 408.0L1038.8 408.0L1038.8 411.6M982.3 594.4L982.3 591.1L982.3 586.5L982.3 589.9M1023.9 552.8L1023.9 557.9L1028.1 557.9L1024.5 557.9L1024.5 554.3L1022.6 554.3L1018.3 554.3M1161.8 375.1L1161.8 379.5L1166.3 379.5L1166.3 374.0L1160.5 374.0L1160.5 370.9L1163.5 370.9M1151.3 434.9L1153.3 434.9L1153.3 429.8L1153.3 425.2L1148.4 425.2M767.6 503.5L764.5 503.5L769.6 503.5L765.9 503.5L765.9 505.0L769.4 505.0M1057.4 330.3L1055.9 330.3L1055.9 334.5L1055.9 332.2L1058.5 332.2M1155.6 510.7L1155.6 506.4L1155.6 501.7L1150.4 501.7L1145.3 501.7L1147.7 501.7L1147.7 506.5L1142.1 506.5L1137.1 506.5M815.5 411.0L815.5 406.7L810.9 406.7L810.9 403.4L808.5 403.4M910.6 367.0L910.6 364.8L905.2 364.8L902.5 364.8M905.1 558.4L905.1 561.1L899.9 561.1L899.9 555.4M1115.9 577.4L1111.4 577.4L1106.7 577.4L1106.7 579.7L1106.7 576.4L1102.9 576.4L1102.9 578.8L1099.1 578.8M880.7 339.4L882.2 339.4L882.2 336.1L882.2 340.6L886.7 340.6L886.7 346.2L886.7 341.0L886.7 338.9M853.3 339.8L853.3 342.5L853.3 339.6L859.2 339.6L859.2 344.3L865.0 344.3L865.0 348.6L861.2 348.6M991.1 329.5L991.1 331.5L985.4 331.5L985.4 334.0L991.3 334.0L991.3 331.7L989.5 331.7M986.5 437.6L986.5 441.0L986.5 435.2L983.9 435.2L983.9 431.7L988.2 431.7L988.2 434.5L993.7 434.5M820.0 526.9L817.6 526.9L823.4 526.9L823.4 529.3L823.4 524.9L819.1 524.9M866.5 333.0L869.9 333.0L873.4 333.0L873.4 327.6L873.4 331.3L873.4 326.2M1154.8 569.9L1154.8 573.7L1159.2 573.7L1153.5 573.7L1158.3 573.7L1163.5 573.7M782.8 534.0L782.8 535.5L784.5 535.5L781.5 535.5M1010.0 380.5L1013.2 380.5L1013.2 385.9L1009.1 385.9L1013.2 385.9L1015.4 385.9M936.9 578.9L936.9 573.3L939.5 573.3L939.5 577.4M1053.9 331.3L1059.0 331.3L1059.0 334.6L1059.0 332.9L1061.2 332.9M1146.3 543.3L1146.3 545.6L1143.3 545.6L1144.8 545.6M1088.2 467.7L1088.2 472.8L1088.2 468.3L1092.7 468.3L1092.7 463.1L1097.4 463.1L1097.4 469.0L1100.5 469.0M837.7 579.1L837.7 576.0L834.9 576.0L834.9 581.9M767.2 353.4L767.2 351.0L770.6 351.0L775.4 351.0L780.6 351.0L780.6 348.8L780.6 347.1L776.0 347.1M1098.9 328.3L1095.4 328.3L1090.1 328.3L1090.1 325.7L1087.1 325.7M876.3 546.5L876.3 551.6L871.1 551.6L871.1 554.6L877.0 554.6L877.0 556.3M910.2 588.7L910.2 590.6L915.1 590.6L918.6 590.6L916.3 590.6L916.3 588.3L916.3 585.7L916.3 587.6L920.6 587.6M992.1 524.3L996.9 524.3L996.9 526.1L996.9 521.7M928.5 584.6L931.9 584.6L931.9 589.3L931.9 585.8L931.9 587.4L929.4 587.4L929.4 590.2M766.2 346.3L766.2 342.2L768.4 342.2L766.6 342.2L766.6 346.2L763.8 346.2L761.7 346.2L761.7 351.0L756.9 351.0M959.9 352.8L957.1 352.8L958.8 352.8L953.8 352.8L953.8 347.3M756.7 515.1L756.7 512.3L754.7 512.3L754.7 508.6L758.4 508.6M918.1 337.9L915.0 337.9L915.0 340.9L917.5 340.9L917.5 335.5L923.2 335.5M808.4 574.2L804.7 574.2L808.3 574.2L808.3 570.7M855.7 552.0L849.7 552.0L849.7 555.8L854.3 555.8L854.3 553.2L852.2 553.2L852.2 548.1L852.2 542.8L856.6 542.8M932.1 532.8L934.9 532.8L932.1 532.8L932.1 527.1M806.0 425.8L802.4 425.8L802.4 428.3L798.8 428.3M931.3 386.5L931.3 388.2L935.8 388.2L935.8 393.1L935.8 391.6L932.2 391.6M838.4 355.4L838.4 361.0L843.9 361.0L843.9 364.4L840.3 364.4M980.2 385.6L977.5 385.6L977.5 389.0L977.5 394.6L983.3 394.6L983.3 390.7L983.3 395.1L979.6 395.1L985.4 395.1M989.6 394.5L995.4 394.5L995.4 388.7L997.3 388.7L997.3 385.1L997.3 383.5L1002.2 383.5L1002.2 386.5L1002.2 388.4M907.5 359.4L907.5 354.6L903.7 354.6L903.7 357.1L903.7 359.1L903.7 363.3M930.3 417.6L930.3 412.9L935.4 412.9L935.4 407.9L929.6 407.9L934.0 407.9M1150.5 377.7L1150.5 382.1L1150.5 386.3L1149.0 386.3L1151.7 386.3L1156.9 386.3M736.7 387.6L741.7 387.6L741.7 389.6L741.7 387.5L738.7 387.5L738.7 383.8L733.0 383.8L733.0 385.7L730.3 385.7M946.5 375.4L946.5 380.5L946.5 377.1L946.5 379.6L946.5 381.6L941.8 381.6L944.3 381.6L940.7 381.6M817.9 491.3L814.3 491.3L814.3 487.4L814.3 489.0L811.5 489.0L811.5 494.6L811.5 488.6L809.7 488.6L804.5 488.6M959.9 410.1L959.9 412.0L962.4 412.0L957.0 412.0L957.0 409.0L953.3 409.0M780.7 340.6L782.5 340.6L782.5 335.3L782.5 332.1L782.5 327.3L780.5 327.3L780.5 333.0M1156.9 587.4L1161.5 587.4L1161.5 585.6L1159.6 585.6L1159.6 590.4L1165.2 590.4L1165.2 585.7M963.7 564.9L960.5 564.9L963.6 564.9L963.6 568.9L958.8 568.9M1146.3 497.6L1149.5 497.6L1151.6 497.6L1147.9 497.6L1146.3 497.6L1141.6 497.6L1141.6 492.8M1018.7 336.6L1022.7 336.6L1025.4 336.6L1019.6 336.6L1019.6 333.6M864.7 501.6L866.7 501.6L866.7 506.2L866.7 510.6L866.7 515.4L866.7 512.7M1096.1 359.3L1096.1 363.8L1090.8 363.8L1092.9 363.8L1087.6 363.8L1084.0 363.8M1109.0 383.0L1110.8 383.0L1110.8 384.6L1112.6 384.6L1112.6 382.8M868.8 460.1L864.4 460.1L864.4 457.1L864.4 460.2L870.4 460.2L870.4 463.5L867.3 463.5L871.8 463.5L871.8 459.5M920.9 530.9L918.6 530.9L913.5 530.9L913.5 536.0M1114.7 611.8L1119.1 611.8L1116.7 611.8L1120.5 611.8L1120.5 616.7L1118.4 616.7L1122.4 616.7M1126.4 482.1L1126.4 485.2L1128.0 485.2L1128.0 490.9L1132.3 490.9L1132.3 486.7L1134.9 486.7L1134.9 490.3M1080.2 585.6L1084.1 585.6L1084.1 587.8L1084.1 590.2L1084.1 595.0M1095.5 592.0L1099.0 592.0L1093.4 592.0L1093.4 595.5M879.5 545.4L877.0 545.4L877.0 541.9L879.5 541.9L879.5 546.1M813.9 461.0L810.3 461.0L810.3 463.4L807.7 463.4L801.9 463.4L801.9 458.6L797.3 458.6L797.3 462.2M1072.3 460.2L1072.3 454.5L1072.3 458.8L1076.8 458.8L1074.6 458.8L1074.6 455.5L1070.1 455.5L1067.9 455.5L1067.9 458.3M1079.2 327.9L1075.7 327.9L1075.7 322.3L1070.7 322.3L1070.7 318.7L1066.4 318.7L1066.4 323.8M1127.6 478.4L1124.8 478.4L1124.8 483.1L1127.2 483.1L1127.2 485.6L1129.3 485.6M971.9 591.1L975.3 591.1L975.3 587.3L979.7 587.3L979.7 593.2M804.0 331.5L808.3 331.5L808.3 333.5L812.9 333.5L812.9 327.5L809.5 327.5L809.5 333.4L804.0 333.4L804.0 329.0M1027.7 329.9L1026.1 329.9L1021.9 329.9L1021.9 333.7L1021.9 339.3L1026.5 339.3L1026.5 340.8L1026.5 343.9M1048.2 440.2L1048.2 445.9L1045.0 445.9L1047.5 445.9L1042.9 445.9L1042.9 441.8L1037.5 441.8L1042.9 441.8M1091.3 333.7L1087.2 333.7L1087.2 337.1L1092.2 337.1M1111.9 498.2L1117.0 498.2L1121.5 498.2L1121.5 493.0L1117.0 493.0L1114.6 493.0L1110.0 493.0L1110.0 487.6L1114.6 487.6M1094.6 558.5L1100.5 558.5L1100.5 563.9L1096.7 563.9L1096.7 565.7L1100.9 565.7L1104.0 565.7L1108.4 565.7M1095.5 396.5L1099.1 396.5L1099.1 402.1L1093.1 402.1L1088.2 402.1M1102.6 450.4L1107.7 450.4L1105.2 450.4L1105.2 454.3L1105.2 456.5L1108.5 456.5L1102.9 456.5M850.2 428.1L850.2 425.1L850.2 428.3L850.2 426.1L850.2 429.4L851.8 429.4L851.8 423.6L847.8 423.6M1134.7 378.1L1134.7 373.6L1132.4 373.6L1135.0 373.6L1135.0 376.1L1138.7 376.1L1141.3 376.1L1141.3 381.7L1146.0 381.7M1154.2 345.7L1149.6 345.7L1149.6 350.4L1152.0 350.4L1154.5 350.4L1151.8 350.4L1151.8 353.7L1146.6 353.7M1055.9 399.5L1061.3 399.5L1055.3 399.5L1055.3 403.9L1058.5 403.9L1058.5 398.4M804.9 364.6L807.1 364.6L807.1 367.9L807.1 370.5M1060.4 391.1L1060.4 386.1L1057.0 386.1L1059.5 386.1L1059.5 389.9M812.8 340.4L807.9 340.4L807.9 337.0L802.9 337.0L802.9 334.8L808.6 334.8M919.4 368.8L925.4 368.8L920.3 368.8L920.3 371.8M1056.7 376.2L1052.2 376.2L1052.2 379.8L1052.2 381.3L1050.2 381.3M1030.6 612.2L1026.1 612.2L1026.1 608.9L1028.0 608.9L1028.0 614.8L1023.4 614.8M1023.0 465.7L1023.0 463.9L1021.2 463.9L1021.2 468.5L1027.1 468.5L1032.2 468.5M873.5 335.8L873.5 338.5L870.3 338.5L870.3 342.0L868.4 342.0L872.8 342.0L872.8 344.7L876.0 344.7L876.0 343.0M866.6 493.5L866.6 488.5L866.6 492.9L864.2 492.9L864.2 496.0L868.6 496.0L868.6 499.3L871.5 499.3L866.8 499.3M842.1 592.1L842.1 588.2L837.4 588.2L837.4 593.0L837.4 587.6L835.5 587.6L837.9 587.6M920.8 536.1L916.2 536.1L916.2 533.1L910.4 533.1L907.9 533.1L907.9 537.8M893.8 399.3L891.7 399.3L886.3 399.3L886.3 401.5L886.3 403.9L888.1 403.9L888.1 409.2L885.7 409.2L885.7 407.2M905.9 495.0L909.2 495.0L909.2 493.5L912.1 493.5M1003.6 375.4L1007.6 375.4L1007.6 377.8L1003.5 377.8L1003.5 381.9L1005.6 381.9L1005.6 375.9L1003.0 375.9L1000.4 375.9M987.5 430.9L982.4 430.9L982.4 426.2L982.4 424.4L986.6 424.4L981.3 424.4L981.3 418.6L981.3 423.5M1109.6 523.8L1111.9 523.8L1111.9 520.0L1111.9 516.9M807.8 470.1L810.6 470.1L810.6 466.9L806.6 466.9L806.6 465.0L806.6 461.8M1024.8 353.5L1019.0 353.5L1019.0 355.0L1015.5 355.0M809.1 527.1L814.3 527.1L814.3 524.6L809.7 524.6L809.7 529.7L812.0 529.7M1012.2 360.0L1012.2 355.6L1008.3 355.6L1006.3 355.6L1006.3 360.1M1054.5 414.0L1058.2 414.0L1062.6 414.0L1062.6 418.3L1067.9 418.3L1073.7 418.3M1117.8 449.4L1117.8 452.9L1117.8 450.5L1115.7 450.5L1115.7 452.3L1111.1 452.3L1111.1 457.1L1111.1 451.2L1116.9 451.2M1049.8 386.9L1053.8 386.9L1053.8 383.0L1053.8 386.5L1053.8 384.0L1053.8 389.3L1056.7 389.3L1056.7 386.8L1053.6 386.8M1059.0 539.1L1059.0 542.4L1054.2 542.4L1054.2 537.4L1054.2 541.1L1054.2 543.5M1084.4 347.7L1082.3 347.7L1082.3 351.8L1077.2 351.8L1077.2 357.1L1077.2 359.3L1077.2 354.8L1072.6 354.8L1072.6 352.8M1120.7 413.4L1120.7 416.7L1125.4 416.7L1125.4 420.8L1129.2 420.8L1129.2 426.5L1134.7 426.5M828.6 549.6L832.8 549.6L832.8 546.5L832.8 552.4L834.9 552.4L834.9 556.5L832.5 556.5L832.5 554.6L831.0 554.6M839.3 578.2L844.7 578.2L844.7 576.2L844.7 582.2L841.8 582.2M1135.4 435.4L1131.1 435.4L1131.1 431.3L1125.9 431.3M756.1 383.4L756.1 389.4L753.0 389.4L751.4 389.4L751.4 384.1M1111.1 447.6L1111.1 445.5L1115.6 445.5L1115.6 450.2L1117.7 450.2M1075.0 409.9L1075.0 411.9L1075.0 409.1L1075.0 404.8L1075.0 402.8M1150.9 432.6L1154.1 432.6L1154.1 428.2L1149.2 428.2L1145.1 428.2M1132.5 365.1L1135.2 365.1L1135.2 367.4L1135.2 372.9L1136.8 372.9L1136.8 369.4L1136.8 372.9L1131.7 372.9M1042.8 325.7L1047.9 325.7L1047.9 327.9L1053.1 327.9L1053.1 326.0M914.3 394.1L918.3 394.1L918.3 389.6L923.7 389.6M981.0 383.2L981.0 378.6L977.6 378.6L977.6 375.7L981.3 375.7L985.1 375.7M871.1 564.8L868.0 564.8L871.8 564.8L866.0 564.8L871.4 564.8L871.4 568.7M975.0 343.4L975.0 346.5L977.2 346.5L977.2 351.6L972.8 351.6M817.2 602.3L814.8 602.3L814.8 598.2L809.0 598.2L812.6 598.2L812.6 603.1L812.6 597.6M932.5 417.7L932.5 423.0L934.7 423.0L934.7 428.4L930.7 428.4M859.1 344.1L864.9 344.1L864.9 342.6L864.9 344.5M838.4 494.5L842.5 494.5L842.5 497.3L848.5 497.3L844.3 497.3L844.3 502.5L844.3 498.9M817.3 528.2L817.3 523.9L817.3 518.8L821.0 518.8L821.0 516.1L815.3 516.1L815.3 512.5L815.3 517.1L815.3 519.7M824.9 516.2L818.9 516.2L818.9 517.9L818.9 516.2L822.5 516.2L827.3 516.2M1100.4 549.3L1100.4 546.2L1102.2 546.2L1102.2 542.0L1105.2 542.0M1097.2 570.9L1097.2 566.2L1097.2 562.1L1094.0 562.1L1094.0 556.3L1090.8 556.3L1090.8 551.8M1079.2 495.9L1075.5 495.9L1075.5 490.4L1074.0 490.4L1071.4 490.4L1071.4 493.2L1067.5 493.2L1071.5 493.2M1114.6 506.5L1114.6 502.2L1120.1 502.2L1125.9 502.2L1125.9 506.9M840.1 587.6L837.5 587.6L832.6 587.6L832.6 589.8L828.8 589.8L826.6 589.8M975.2 547.6L975.2 543.7L977.2 543.7L977.2 547.7M765.6 431.6L765.6 436.3L765.6 439.9L770.8 439.9L770.8 434.1L769.3 434.1L769.3 429.2L764.1 429.2M790.6 374.4L790.6 369.9L793.3 369.9L793.3 375.2L797.9 375.2L797.9 378.1L796.0 378.1M1026.7 557.1L1026.7 555.1L1029.0 555.1L1029.0 560.0L1029.0 563.3L1024.5 563.3L1024.5 561.3M839.1 551.9L839.1 555.8L839.1 554.0L843.9 554.0L843.9 557.5L843.9 553.1L848.2 553.1M928.3 486.6L928.3 482.9L932.1 482.9L932.1 485.3L928.9 485.3L928.9 487.3M1018.8 410.5L1018.8 407.5L1013.4 407.5L1013.4 411.8L1013.4 416.2L1019.4 416.2M965.6 466.1L965.6 469.5L968.9 469.5L968.9 474.1L974.8 474.1M822.2 429.2L822.2 423.5L824.2 423.5L824.2 421.5L824.2 415.8L828.5 415.8L824.4 415.8L824.4 412.5L824.4 410.9M824.0 335.8L826.8 335.8L824.3 335.8L824.3 339.7L826.1 339.7L826.1 336.5M795.9 415.5L794.2 415.5L794.2 410.1L791.4 410.1M849.8 457.5L844.1 457.5L841.9 457.5L840.2 457.5L844.7 457.5L844.7 455.6L840.4 455.6M926.2 575.4L926.2 572.2L921.5 572.2L921.5 567.8L916.4 567.8L916.4 573.2L911.7 573.2L911.7 576.7L913.4 576.7M1069.3 524.4L1064.4 524.4L1068.7 524.4L1068.7 528.1L1068.7 525.7L1067.1 525.7L1067.1 530.5L1071.9 530.5L1071.9 534.6M1061.8 441.6L1061.8 435.8L1061.8 431.3L1067.6 431.3L1067.6 433.8L1067.6 431.1L1062.4 431.1M955.5 600.4L953.5 600.4L953.5 596.7L949.4 596.7L949.4 599.8L943.8 599.8M939.5 416.9L943.7 416.9L943.7 419.5L948.4 419.5L948.4 414.9L952.1 414.9M1004.4 445.0L1004.4 443.3L1007.1 443.3L1007.1 447.1L1007.1 451.5M789.4 383.9L789.4 382.1L786.1 382.1L786.1 378.4L790.1 378.4L790.1 381.9L792.0 381.9M1071.9 532.6L1073.8 532.6L1072.1 532.6L1068.5 532.6L1071.4 532.6L1071.4 534.9L1071.4 530.4L1076.1 530.4L1078.0 530.4M741.8 591.6L737.3 591.6L737.3 590.0L734.6 590.0L739.4 590.0L739.4 588.4L742.8 588.4L742.8 593.0M986.3 569.4L986.3 564.7L986.3 562.4L986.3 560.4L988.2 560.4L988.2 564.8L988.2 568.6M827.5 324.9L830.1 324.9L830.1 323.2L835.5 323.2L838.4 323.2L838.4 318.7M807.1 421.2L807.1 427.1L807.1 430.5L807.1 435.4L807.1 431.0L803.4 431.0M790.5 445.2L787.9 445.2L787.9 443.0L793.8 443.0L793.8 446.0L797.3 446.0L797.3 448.6M757.1 528.7L757.1 531.6L757.1 534.2L751.9 534.2L751.9 536.2L751.9 530.8L747.7 530.8L741.8 530.8L740.0 530.8M938.6 582.1L938.6 584.2L941.2 584.2L941.2 587.7L938.3 587.7L938.3 582.4L938.3 587.2L942.5 587.2M1137.6 371.5L1137.6 368.0L1135.3 368.0L1135.3 365.8M986.9 401.0L986.9 398.2L991.2 398.2L991.2 392.8L986.0 392.8M939.3 436.6L939.3 433.1L933.7 433.1L933.7 429.9M790.3 588.6L790.3 592.4L785.9 592.4L785.9 587.7L791.7 587.7L791.7 582.5L789.1 582.5M1073.5 519.1L1073.5 523.7L1071.9 523.7L1070.1 523.7M945.2 480.0L945.2 478.3L950.5 478.3L950.5 473.3L950.5 468.4L953.2 468.4L953.2 473.4M885.5 374.9L888.1 374.9L882.3 374.9L882.3 380.3L880.6 380.3L880.6 376.7M936.4 332.3L936.4 336.8L938.1 336.8L938.1 339.6M802.9 582.2L802.9 577.8L799.4 577.8L799.4 575.7L802.3 575.7L802.3 580.8L798.1 580.8L803.8 580.8M997.1 364.7L998.7 364.7L998.7 360.0L998.7 354.5L993.8 354.5L993.8 351.4L988.1 351.4M1084.2 419.9L1082.2 419.9L1079.1 419.9L1079.1 416.8L1081.3 416.8L1084.1 416.8L1084.1 412.3L1079.0 412.3M967.0 440.6L967.0 442.7L964.9 442.7L964.9 447.8M757.2 323.1L760.4 323.1L760.4 319.3L760.4 324.4L760.4 319.4M1049.7 463.1L1049.7 466.6L1046.2 466.6L1044.6 466.6L1044.6 470.5L1039.9 470.5M1162.5 510.7L1166.1 510.7L1166.1 507.7L1161.7 507.7M1095.4 484.2L1091.6 484.2L1091.6 489.6L1091.6 491.4L1086.8 491.4L1091.3 491.4M830.3 385.2L833.1 385.2L833.1 382.4L835.9 382.4L835.9 378.8L834.0 378.8M1104.8 578.4L1104.8 583.8L1109.6 583.8L1109.6 579.7L1104.7 579.7L1104.7 575.0L1109.8 575.0M1090.0 338.5L1090.0 341.4L1090.0 339.5L1086.7 339.5L1089.3 339.5L1089.3 335.6L1085.3 335.6L1088.0 335.6L1088.0 334.0M892.9 491.0L889.0 491.0L889.0 496.7L891.7 496.7L891.7 494.8L894.2 494.8L890.3 494.8L887.3 494.8L887.3 489.5M981.8 560.8L985.8 560.8L985.8 555.2L982.4 555.2M736.3 347.2L736.3 345.1L736.3 350.5L736.3 356.4L739.4 356.4M848.3 391.0L850.7 391.0L850.7 393.6L854.2 393.6L854.2 390.7L854.2 385.6L854.2 382.6M778.7 504.4L780.6 504.4L780.6 507.6L776.1 507.6L776.1 511.2L779.5 511.2L782.3 511.2M1162.8 483.7L1167.0 483.7L1167.0 479.1L1170.7 479.1L1170.7 476.0M866.7 460.1L866.7 454.2L868.5 454.2L868.5 456.6L863.1 456.6L863.1 459.0L865.8 459.0L871.6 459.0L871.6 461.9M1148.4 606.4L1148.4 609.8L1148.4 605.0L1146.8 605.0L1146.8 602.3L1143.8 602.3L1143.8 607.3L1143.8 612.4L1138.4 612.4M1074.4 552.8L1077.7 552.8L1077.7 550.3L1073.1 550.3M1150.8 487.0L1155.7 487.0L1155.7 491.9L1149.8 491.9L1148.0 491.9L1148.0 488.1L1150.9 488.1L1147.8 488.1M928.7 595.3L923.4 595.3L923.4 591.9L921.4 591.9M944.1 574.0L948.4 574.0L948.4 576.1L951.8 576.1L951.8 573.9L957.5 573.9L957.5 568.1L960.3 568.1L960.3 562.5M1050.5 479.4L1050.5 481.4L1050.5 485.8L1048.3 485.8M1087.3 462.2L1087.3 459.6L1084.6 459.6L1084.6 458.0L1084.6 461.7L1082.7 461.7L1082.7 459.3L1082.7 457.3L1080.7 457.3M967.7 375.8L967.7 379.7L963.6 379.7L963.6 384.6L961.6 384.6L961.6 382.2L966.2 382.2M911.7 444.9L911.7 442.8L916.2 442.8L916.2 448.1L922.0 448.1M798.2 342.6L802.6 342.6L804.4 342.6L804.4 344.6L801.3 344.6L801.3 341.5M976.0 613.3L976.0 618.2L976.0 623.1L979.3 623.1L979.3 626.8M918.6 527.8L918.6 522.7L918.6 528.0L921.7 528.0L921.7 525.8L925.4 525.8L925.4 523.5M940.6 401.5L942.7 401.5L942.7 399.6L939.6 399.6L939.6 402.9L933.7 402.9L933.7 405.9L933.7 409.4M990.7 563.5L995.5 563.5L995.5 567.6L995.5 564.7M857.0 589.9L860.8 589.9L860.8 587.2L860.8 591.2L855.4 591.2L855.4 586.6M785.4 581.6L781.8 581.6L781.8 576.3L787.0 576.3L787.0 581.7M849.4 321.8L855.1 321.8L855.1 326.0L855.1 330.2L859.5 330.2L859.5 325.9L861.0 325.9L857.1 325.9L857.1 331.6M1158.5 340.3L1160.7 340.3L1160.7 344.0L1160.7 347.6L1157.8 347.6L1155.4 347.6L1152.1 347.6M1057.7 444.5L1057.7 449.4L1059.4 449.4L1059.4 444.4L1064.1 444.4M777.1 490.5L775.2 490.5L775.2 492.5L777.8 492.5L783.2 492.5L783.2 487.4M839.6 463.8L841.7 463.8L841.7 469.1L841.7 471.0L844.4 471.0L844.4 474.0L848.6 474.0L848.6 471.6L848.6 475.4M811.7 334.6L811.7 332.0L814.8 332.0L814.8 329.4L814.8 326.2L811.6 326.2M985.3 414.5L983.1 414.5L983.1 410.3L983.1 412.2L986.9 412.2L986.9 417.3L984.3 417.3L990.0 417.3L990.0 421.5M1114.9 408.2L1114.9 412.7L1117.4 412.7L1117.4 416.9L1121.3 416.9L1121.3 412.5M973.4 590.0L976.5 590.0L976.5 584.3L979.4 584.3L979.4 582.7L982.1 582.7L982.1 581.1L986.5 581.1M929.2 565.6L929.2 568.7L931.5 568.7L931.5 562.9M796.9 574.5L796.9 572.5L796.9 570.5L799.9 570.5M1040.6 583.5L1040.6 589.0L1035.2 589.0L1038.9 589.0L1038.9 594.6M875.4 514.7L875.4 510.7L879.3 510.7L879.3 507.0L882.0 507.0L882.0 502.0L884.0 502.0M1069.2 334.1L1069.2 337.6L1066.9 337.6L1066.9 340.5L1063.1 340.5L1063.1 343.7L1059.8 343.7L1054.3 343.7M1102.7 403.2L1102.7 401.0L1107.9 401.0L1107.9 397.6L1102.9 397.6L1102.9 393.7L1106.0 393.7L1106.0 389.9L1106.0 395.1M1138.1 585.2L1138.1 589.4L1141.2 589.4L1141.2 587.3L1141.2 584.2L1141.2 589.6M1144.0 510.0L1141.1 510.0L1141.1 504.6L1146.1 504.6L1146.1 502.2L1152.1 502.2L1152.1 506.6M956.0 472.4L961.2 472.4L956.4 472.4L961.6 472.4L959.8 472.4L954.7 472.4M966.4 335.5L968.3 335.5L968.3 338.7L964.0 338.7L964.0 333.5L968.6 333.5L968.6 337.4L968.6 340.8L974.1 340.8M971.5 571.3L971.5 566.4L971.5 563.4L975.3 563.4M1131.9 376.8L1127.3 376.8L1127.3 371.1L1131.2 371.1L1131.2 366.6L1134.2 366.6M974.5 531.2L974.5 527.8L976.7 527.8L976.7 522.4L982.0 522.4L978.4 522.4L978.4 520.5M996.4 513.0L991.0 513.0L994.2 513.0L994.2 508.1M1162.0 611.3L1163.8 611.3L1157.9 611.3L1163.2 611.3L1160.9 611.3M999.8 502.2L995.7 502.2L995.7 500.1L990.2 500.1L994.7 500.1L997.1 500.1L997.1 503.1M1136.6 543.0L1136.6 540.7L1138.3 540.7L1138.3 542.3L1138.3 538.4L1134.7 538.4L1136.4 538.4M1040.0 577.6L1035.1 577.6L1036.8 577.6L1036.8 579.7L1036.8 575.9M805.6 512.2L805.6 516.6L799.8 516.6L805.7 516.6L809.3 516.6L809.3 511.6L814.0 511.6L814.0 515.2M1143.7 406.8L1143.7 410.0L1149.3 410.0L1152.3 410.0L1152.3 404.7L1152.3 401.9L1156.2 401.9M740.8 456.6L742.7 456.6L742.7 453.4L742.7 451.8L742.7 448.0M912.1 522.9L915.6 522.9L915.6 526.0L919.4 526.0L919.4 529.6L924.8 529.6L924.8 533.8L921.9 533.8L921.9 537.2M922.1 458.3L922.1 462.0L919.0 462.0L921.5 462.0L921.5 465.1L919.8 465.1L916.8 465.1L916.8 471.1L916.8 473.1M773.2 481.3L778.7 481.3L782.9 481.3L782.9 483.2L779.5 483.2L784.5 483.2L781.7 483.2L781.7 485.0L787.0 485.0M1048.6 532.4L1048.6 534.1L1050.2 534.1L1050.2 539.0L1047.8 539.0L1047.8 535.3L1049.8 535.3L1049.8 541.0M961.6 370.0L956.8 370.0L956.8 367.0L962.0 367.0L962.0 364.2M837.5 524.6L831.7 524.6L831.7 527.5L826.6 527.5L823.6 527.5L823.6 531.5L823.6 529.3L821.4 529.3L824.5 529.3M850.6 482.9L855.0 482.9L849.1 482.9L849.1 480.1L854.3 480.1L854.3 475.4L854.3 473.6L859.4 473.6L859.4 468.0M1051.0 517.1L1054.8 517.1L1058.6 517.1L1063.2 517.1L1063.2 521.2L1063.2 518.4L1066.8 518.4M930.5 364.1L935.6 364.1L935.6 358.4L931.1 358.4L931.1 360.4L931.1 363.8L931.1 366.4L931.1 371.1M752.9 345.1L750.4 345.1L753.8 345.1L753.8 342.6L757.8 342.6L757.8 344.7M1054.1 571.3L1054.1 565.3L1049.9 565.3L1047.0 565.3L1052.8 565.3L1052.8 571.2L1049.7 571.2L1049.7 569.5M981.2 601.5L977.3 601.5L977.3 604.3L981.2 604.3L979.1 604.3M1100.6 477.5L1103.4 477.5L1105.9 477.5L1105.9 482.8L1105.9 486.6L1110.5 486.6M946.8 389.6L946.8 394.8L944.7 394.8L944.7 400.4M917.4 553.4L917.4 558.0L911.5 558.0L915.9 558.0L915.9 563.4L912.1 563.4M957.0 382.8L961.5 382.8L961.5 386.6L957.7 386.6L961.5 386.6L961.5 384.6L964.3 384.6L964.3 387.4M894.6 525.8L894.6 520.8L894.6 524.0L894.6 527.0L890.4 527.0M934.4 534.1L934.4 539.0L934.4 541.2L937.5 541.2L937.5 537.4L940.4 537.4L940.4 539.1L940.4 533.6M842.4 439.1L844.0 439.1L844.0 436.3L848.8 436.3L851.4 436.3L851.4 438.9L851.4 443.7L853.6 443.7L853.6 449.5M772.2 502.7L768.3 502.7L769.9 502.7L769.9 507.7M1031.2 556.0L1031.2 558.2L1036.0 558.2L1040.7 558.2M753.4 508.2L753.4 505.9L753.4 503.9L753.4 499.4M945.6 329.7L945.6 327.2L951.0 327.2L954.6 327.2L954.6 329.7L954.6 332.9L954.6 328.3M883.8 353.2L883.8 347.9L888.7 347.9L890.8 347.9L890.8 346.0L890.8 340.0L896.4 340.0M758.9 601.8L761.6 601.8L763.5 601.8L763.5 596.9M1081.2 372.1L1081.2 376.7L1081.2 380.2L1083.0 380.2L1083.0 385.3M981.9 415.2L983.9 415.2L983.9 413.3L983.9 418.4L985.8 418.4L983.8 418.4L986.4 418.4L986.4 415.7M972.5 336.4L974.6 336.4L974.6 332.6L974.6 327.8L979.4 327.8L979.4 329.4L979.4 332.3M1111.8 347.0L1111.8 352.8L1111.8 356.3L1106.8 356.3L1109.0 356.3L1109.0 353.1L1113.0 353.1L1113.0 347.9M1143.3 503.2L1146.0 503.2L1142.4 503.2L1142.4 497.7L1140.9 497.7L1140.9 492.3L1137.8 492.3L1135.7 492.3M962.3 363.0L962.3 360.6L957.4 360.6L957.4 365.3L961.0 365.3L961.0 359.6M1102.0 426.4L1102.0 429.0L1105.0 429.0L1105.0 434.1L1108.4 434.1L1108.4 430.7M1162.4 420.0L1162.4 414.9L1168.3 414.9L1168.3 409.7L1164.0 409.7M766.0 524.9L768.2 524.9L768.2 522.1L768.2 520.0L768.2 517.1L765.6 517.1L765.6 520.1L771.1 520.1M756.8 462.0L753.3 462.0L757.3 462.0L757.3 459.9M800.4 451.8L800.4 448.9L804.2 448.9L804.2 451.8L807.9 451.8M811.3 327.1L805.5 327.1L800.3 327.1L800.3 324.4L806.0 324.4L806.0 330.1M991.3 385.4L988.5 385.4L988.5 381.4L985.4 381.4L985.4 376.5L990.1 376.5L990.1 371.5L994.8 371.5L994.8 369.2M876.8 612.5L876.8 616.9L874.7 616.9L874.7 621.4L877.6 621.4L881.6 621.4M1103.8 325.1L1101.2 325.1L1101.2 322.6L1102.9 322.6M973.2 418.2L978.2 418.2L978.2 423.8L976.2 423.8L971.1 423.8L971.1 426.3L975.9 426.3L972.9 426.3L972.9 430.9M961.2 462.3L961.2 457.4L965.7 457.4L965.7 459.9L965.7 463.3L970.0 463.3M823.3 578.2L820.7 578.2L822.9 578.2L822.9 575.5M957.7 540.5L957.7 537.2L954.8 537.2L954.8 542.5M999.0 465.8L995.4 465.8L993.4 465.8L993.4 470.2L990.2 470.2L990.2 472.0L984.4 472.0L984.4 474.5M1096.2 491.9L1096.2 496.4L1099.1 496.4L1099.1 493.9M1150.8 607.4L1145.1 607.4L1145.1 601.9L1147.3 601.9L1145.5 601.9L1145.5 597.1L1148.4 597.1L1144.1 597.1L1144.1 594.6M830.0 613.0L833.6 613.0L837.3 613.0L837.3 609.6L837.3 614.2L837.3 608.4L834.2 608.4M735.1 612.0L733.6 612.0L732.0 612.0L732.0 610.1L732.0 607.8L728.4 607.8M1119.6 460.7L1119.6 457.5L1124.2 457.5L1124.2 454.4L1124.2 450.4M762.6 582.0L762.6 586.8L762.6 590.2L766.5 590.2L764.1 590.2L764.1 584.3M919.4 463.0L925.0 463.0L925.0 461.3L920.5 461.3L925.8 461.3L925.8 462.9L921.3 462.9L921.3 459.6L921.3 454.4M859.1 591.0L864.5 591.0L864.5 589.1L864.5 587.0L864.5 582.0M963.0 467.2L963.0 469.5L963.0 464.9L959.1 464.9L954.9 464.9L952.5 464.9L952.5 469.0L948.4 469.0L948.4 463.1M836.9 440.0L839.1 440.0L839.1 442.5L840.7 442.5L840.7 445.4L842.5 445.4L842.5 448.5L839.1 448.5M792.6 334.1L792.6 336.9L790.3 336.9L784.6 336.9M749.9 595.2L749.9 591.1L749.9 585.4L749.9 581.4L746.4 581.4L748.3 581.4L748.3 583.9M1067.5 354.0L1070.1 354.0L1070.1 349.9L1070.1 344.6L1073.6 344.6M1003.9 464.1L1003.9 461.7L1008.0 461.7L1008.0 457.9L1008.0 455.2L1012.8 455.2L1012.8 458.3L1012.8 463.8M777.6 521.6L780.9 521.6L783.9 521.6L783.9 526.7L783.9 529.4L788.0 529.4L788.0 531.7M788.5 496.8L792.8 496.8L792.8 491.2L794.5 491.2L788.6 491.2M934.8 323.6L934.8 326.7L940.1 326.7L945.2 326.7L939.8 326.7L939.8 332.4M1094.8 519.0L1094.8 523.2L1094.8 517.9L1098.5 517.9L1098.5 520.6M955.9 596.0L959.0 596.0L959.0 599.4L959.0 602.2L953.1 602.2M1005.7 407.1L1005.7 402.9L1010.7 402.9L1014.7 402.9L1017.9 402.9M1016.7 326.8L1016.7 329.2L1019.6 329.2L1019.6 332.4L1019.6 327.6M1128.0 591.8L1128.0 586.3L1122.1 586.3L1122.1 590.7L1127.3 590.7L1127.3 595.4M1105.8 346.9L1105.8 344.1L1109.3 344.1L1109.3 338.6L1115.1 338.6L1119.0 338.6L1117.4 338.6L1117.4 334.2M740.5 437.2L740.5 440.7L740.5 446.4L745.4 446.4M890.4 541.8L888.1 541.8L888.1 536.6L886.2 536.6M790.6 342.6L790.6 346.6L788.9 346.6L790.9 346.6L790.9 342.3M814.6 460.2L814.6 455.6L809.2 455.6L809.2 461.2L809.2 456.9L809.2 453.6L807.3 453.6L805.0 453.6M846.5 422.2L846.5 418.4L846.5 422.5L841.9 422.5L841.9 428.0L837.0 428.0L837.0 424.0L834.0 424.0M880.5 417.7L875.5 417.7L875.5 420.8L879.6 420.8L879.6 426.0L879.6 422.6L879.6 417.9M1063.0 587.4L1063.0 592.3L1058.4 592.3L1063.4 592.3L1057.9 592.3M876.8 397.0L876.8 402.5L882.1 402.5L882.1 401.0L887.2 401.0M1139.6 547.6L1139.6 549.7L1144.1 549.7L1138.3 549.7L1138.3 546.0L1135.3 546.0M1118.2 517.1L1118.2 512.6L1118.2 516.1L1118.2 521.5L1118.2 518.5L1113.0 518.5L1113.0 523.7M992.9 336.0L990.5 336.0L990.5 338.3L993.6 338.3L996.2 338.3L996.2 341.3M901.7 484.5L906.4 484.5L906.4 490.1L906.4 495.9L902.1 495.9M870.5 341.8L870.5 336.9L874.6 336.9L872.3 336.9L872.3 332.1L868.8 332.1L868.8 330.3L866.1 330.3L860.5 330.3M882.5 371.7L882.5 368.0L882.5 373.8L882.5 377.3L878.5 377.3L878.5 382.8L873.0 382.8M1099.3 449.4L1104.2 449.4L1106.2 449.4L1106.2 447.9L1106.2 451.0L1101.9 451.0L1101.9 449.2L1101.9 444.2L1104.3 444.2M921.7 434.9L921.7 440.1L919.7 440.1L919.7 443.1M883.7 482.5L881.1 482.5L881.1 478.9L885.9 478.9L885.9 475.4L883.7 475.4M971.9 593.7L971.9 597.7L977.2 597.7L977.2 592.8L981.0 592.8M1034.3 433.1L1034.3 428.6L1031.5 428.6L1026.3 428.6L1026.3 426.5L1023.6 426.5L1023.6 421.9M784.4 323.8L784.4 319.5L786.4 319.5L786.4 314.6L790.0 314.6L792.9 314.6L790.9 314.6M922.2 388.4L922.2 383.3L922.2 386.9L922.2 388.5L922.2 384.2L924.1 384.2L924.1 380.4L929.7 380.4L934.1 380.4M912.3 456.0L912.3 451.4L913.9 451.4L913.9 447.2L913.9 449.2L913.9 454.6L913.9 458.6M1035.3 440.2L1035.3 442.2L1035.3 440.0L1040.8 440.0L1040.8 435.0L1044.2 435.0L1048.9 435.0M755.3 491.3L752.6 491.3L757.8 491.3L757.8 493.1L752.1 493.1L752.1 488.1L752.1 491.6L749.8 491.6L747.1 491.6M826.2 403.5L826.2 400.6L829.4 400.6L829.4 396.0L829.4 398.2M960.2 596.8L960.2 590.8L957.6 590.8L957.6 593.9L957.6 597.5L960.3 597.5L956.9 597.5L954.8 597.5M781.0 473.5L777.9 473.5L777.9 468.2L777.9 464.2L775.0 464.2L775.0 462.6L778.7 462.6L778.7 464.7L778.7 461.1M1104.4 440.0L1107.6 440.0L1107.6 444.7L1107.6 440.9L1107.6 438.4L1107.6 444.3L1107.6 448.8M835.7 513.0L835.7 517.2L838.2 517.2L838.2 522.4L838.2 524.7L833.0 524.7M1063.0 533.8L1060.7 533.8L1060.7 538.2L1060.7 540.8L1060.7 536.8L1055.9 536.8L1055.9 542.2L1055.9 537.2M1133.5 612.1L1137.4 612.1L1137.4 614.2L1132.7 614.2L1132.7 610.9M940.7 382.6L937.6 382.6L934.2 382.6L934.2 380.5L934.2 375.9L934.2 381.5M832.1 437.6L832.1 440.8L827.9 440.8L827.9 445.1L822.8 445.1L824.5 445.1L824.5 448.7L821.4 448.7M786.5 442.9L786.5 448.3L783.9 448.3L782.3 448.3M922.9 347.6L925.6 347.6L931.3 347.6L929.0 347.6L929.0 351.4M846.4 506.1L841.0 506.1L837.3 506.1L837.3 504.2L834.6 504.2L837.7 504.2L843.5 504.2M995.1 479.3L998.3 479.3L994.6 479.3L990.4 479.3M1110.4 593.3L1110.4 589.4L1110.4 593.6L1110.4 588.5L1108.8 588.5L1108.8 591.9M920.6 500.4L920.6 504.5L924.5 504.5L921.2 504.5L921.2 500.3M1132.0 379.2L1127.0 379.2L1127.0 373.5L1122.4 373.5L1122.4 367.9L1120.8 367.9L1116.1 367.9L1116.1 365.9M758.1 537.7L763.3 537.7L758.9 537.7L756.0 537.7L756.0 543.3L756.0 538.7M1127.9 423.3L1127.9 426.0L1127.9 422.5L1127.9 419.0M894.7 494.4L900.2 494.4L900.2 497.2L896.0 497.2L890.2 497.2M1112.9 473.1L1112.9 468.0L1114.9 468.0L1114.9 463.3L1112.4 463.3L1112.4 468.4M915.3 376.5L919.3 376.5L919.3 380.1L919.3 374.4M968.7 441.7L968.7 437.1L964.7 437.1L964.7 443.0L964.7 440.5M996.1 600.0L996.1 596.7L996.1 601.2L991.4 601.2L991.4 605.0L989.2 605.0L989.2 603.3L989.2 599.5M942.0 514.1L942.0 517.2L944.0 517.2L944.0 515.5L949.7 515.5L953.2 515.5L953.2 520.6L953.2 525.5M894.4 385.9L892.3 385.9L892.3 382.6L895.2 382.6L898.2 382.6L898.2 379.7L900.3 379.7M850.3 581.5L850.3 585.5L852.7 585.5L856.9 585.5L856.9 583.9L856.9 579.3L855.0 579.3M1134.5 475.6L1134.5 472.4L1134.5 477.5L1134.5 474.6L1139.7 474.6L1139.7 477.5L1145.4 477.5L1145.4 474.9L1147.3 474.9M759.6 370.1L763.0 370.1L763.0 371.8L763.0 367.8L763.0 364.2L759.1 364.2L759.1 367.2L759.1 362.3M847.9 369.0L853.4 369.0L853.4 366.3L853.4 369.3L853.4 365.4L855.9 365.4L855.9 362.9M887.2 366.8L884.4 366.8L884.4 372.7L887.0 372.7L890.2 372.7L890.2 369.6L890.2 363.6L886.4 363.6L886.4 360.9M1135.4 612.9L1133.6 612.9L1138.8 612.9L1134.2 612.9L1134.2 609.0M882.8 425.0L882.8 422.7L882.8 427.8L882.8 425.4L882.8 427.4M942.5 493.2L939.1 493.2L939.1 490.9L937.5 490.9L940.9 490.9M1032.4 557.6L1032.4 555.2L1032.4 559.2L1032.4 553.7M896.9 400.2L896.9 397.1L896.9 399.5L896.9 395.2L893.3 395.2L893.3 400.0L893.3 395.5L898.0 395.5L893.1 395.5M1120.5 588.8L1123.8 588.8L1123.8 594.5L1119.0 594.5M842.2 518.3L842.2 521.9L842.2 517.6L845.6 517.6L845.6 512.1L839.6 512.1L834.7 512.1L834.7 508.8M934.7 404.3L932.7 404.3L932.7 401.6L929.4 401.6L925.9 401.6M1024.6 455.9L1022.7 455.9L1022.7 451.9L1020.8 451.9L1020.8 447.6L1025.1 447.6L1025.1 444.3L1021.1 444.3M1146.2 455.7L1146.2 459.7L1149.5 459.7L1149.5 455.2L1153.8 455.2L1153.8 450.5L1157.4 450.5M1075.4 573.8L1078.9 573.8L1078.9 569.0L1078.9 563.4L1081.9 563.4L1081.9 568.0L1084.7 568.0L1084.7 570.9M1153.0 550.6L1155.0 550.6L1155.0 553.5L1158.1 553.5L1158.1 556.3L1158.1 560.9L1158.1 557.0L1163.4 557.0L1163.4 561.4M1142.5 552.4L1142.5 555.5L1142.5 557.7L1146.0 557.7L1142.6 557.7L1142.6 555.1M866.9 597.5L864.1 597.5L864.1 602.0L858.7 602.0L858.7 603.6L860.9 603.6M857.9 490.2L857.9 485.0L862.0 485.0L867.8 485.0L867.8 482.3L873.4 482.3M1098.1 606.4L1094.7 606.4L1098.1 606.4L1098.1 609.6L1100.8 609.6L1100.8 606.7L1106.1 606.7L1104.2 606.7M758.3 495.1L758.3 489.3L761.7 489.3L761.7 485.5L761.7 490.3L764.3 490.3M772.0 588.2L774.2 588.2L774.2 583.4L774.2 581.6L770.9 581.6L770.9 577.3M981.5 553.3L981.5 558.1L979.0 558.1L980.8 558.1M745.5 367.0L745.5 364.2L742.9 364.2L742.9 367.6L740.6 367.6L740.6 370.3M843.3 462.0L843.3 464.1L845.7 464.1L845.7 468.2M892.9 584.1L892.9 589.9L898.8 589.9L904.4 589.9M967.3 605.0L967.3 601.1L972.1 601.1L972.1 597.5L972.1 601.4L970.5 601.4L970.5 604.7M1096.5 554.4L1096.5 548.9L1091.6 548.9L1091.6 545.8L1095.9 545.8L1095.9 543.3L1097.9 543.3L1097.9 547.1L1102.0 547.1M950.6 567.2L950.6 562.9L952.8 562.9L952.8 559.6L954.8 559.6M1025.0 557.0L1026.8 557.0L1031.4 557.0L1031.4 552.5L1026.5 552.5L1026.5 550.8L1030.8 550.8L1030.8 556.6M1082.1 361.7L1076.3 361.7L1077.8 361.7L1077.8 357.9L1077.8 363.8L1079.5 363.8L1085.1 363.8L1089.5 363.8L1087.6 363.8M1148.8 388.1L1150.9 388.1L1150.9 384.6L1145.4 384.6L1145.4 380.5L1150.8 380.5M784.8 452.4L784.8 446.5L790.2 446.5L795.0 446.5L795.0 452.4L795.0 449.9L790.0 449.9L790.0 454.0M900.2 480.2L895.7 480.2L900.4 480.2L897.4 480.2L895.7 480.2M1041.6 582.6L1039.2 582.6L1036.2 582.6L1036.2 586.0L1033.6 586.0L1033.6 591.0L1033.6 595.4M925.8 524.4L927.3 524.4L927.3 528.8L927.3 531.6L931.4 531.6L934.1 531.6L934.1 535.8L934.1 539.7L936.6 539.7M855.6 474.5L850.6 474.5L850.6 471.1L850.6 476.0L852.5 476.0L852.5 481.8L858.5 481.8L858.5 479.3L860.8 479.3M1101.4 479.7L1101.4 484.7L1104.5 484.7L1104.5 479.0M811.6 326.3L815.8 326.3L818.0 326.3L822.1 326.3L822.1 330.0L822.1 325.9L819.1 325.9M1029.1 385.2L1029.1 390.3L1031.1 390.3L1031.1 384.9L1031.1 389.1L1035.4 389.1L1035.4 385.0M850.6 582.9L850.6 588.5L852.4 588.5L848.0 588.5L848.0 593.6M751.5 380.8L751.5 385.5L753.7 385.5L756.3 385.5M1000.4 416.6L996.7 416.6L996.7 421.2L996.7 419.1L993.9 419.1L993.9 415.4M870.8 496.4L870.8 490.9L874.2 490.9L869.6 490.9L869.6 485.8M809.5 515.3L812.9 515.3L812.9 511.9L812.9 514.7L810.2 514.7L810.2 519.5L815.2 519.5L819.5 519.5M741.1 416.6L741.1 420.9L743.3 420.9L743.3 418.7L743.3 413.0L739.0 413.0L739.0 415.0L737.3 415.0L737.3 419.9M852.4 415.8L856.4 415.8L856.4 413.4L856.4 419.1L862.2 419.1L862.2 423.7L856.6 423.7L856.6 421.4M736.1 529.5L733.5 529.5L733.5 524.6L738.9 524.6M1006.3 585.5L1006.3 588.1L1006.3 593.9L1003.5 593.9L998.0 593.9L998.0 598.9L995.4 598.9L995.4 595.5L995.4 589.7M786.1 449.8L786.1 445.4L787.7 445.4L787.7 442.2L784.2 442.2L784.2 444.3L788.9 444.3M1069.3 569.1L1069.3 572.6L1069.3 574.5L1067.6 574.5L1067.6 579.9L1067.6 574.0M968.2 600.6L968.2 605.6L963.2 605.6L963.2 602.3L963.2 605.0L965.5 605.0L969.4 605.0M1123.1 330.5L1120.5 330.5L1120.5 328.0L1122.4 328.0L1122.4 325.4M1117.3 500.6L1113.4 500.6L1113.4 503.7L1110.9 503.7L1110.9 509.7L1107.1 509.7L1107.1 505.5M826.3 332.5L826.3 327.8L824.0 327.8L824.0 322.5L826.5 322.5L826.5 317.4M773.2 443.5L773.2 448.1L776.5 448.1L780.4 448.1L777.8 448.1L777.8 445.8L773.0 445.8L776.5 445.8L770.9 445.8M1054.8 480.2L1060.2 480.2L1062.7 480.2L1062.7 475.1L1058.1 475.1L1058.1 471.3L1058.1 474.5M896.9 380.3L898.5 380.3L893.3 380.3L896.3 380.3L896.3 383.6L893.6 383.6L893.6 378.8L897.6 378.8M1160.0 322.3L1157.8 322.3L1157.8 324.5L1153.1 324.5L1153.1 322.3L1153.1 328.0L1156.9 328.0L1156.9 323.5M863.6 543.9L866.4 543.9L866.4 545.5L863.0 545.5L863.0 541.0L863.0 545.0L863.0 539.2L865.1 539.2L865.1 536.7M867.8 592.5L867.8 595.6L864.9 595.6L864.9 589.8L864.9 585.7L867.7 585.7L867.7 591.5L867.7 593.9M1085.3 595.3L1085.3 600.0L1091.2 600.0L1091.2 601.9L1091.2 603.7M939.8 529.0L939.8 527.0L942.6 527.0L942.6 521.6L940.4 521.6L940.4 527.3M877.4 611.7L877.4 614.7L880.4 614.7L880.4 616.7M741.1 509.6L741.1 512.0L735.9 512.0L735.9 509.6L739.7 509.6M778.4 557.5L775.3 557.5L775.3 555.2L772.7 555.2L770.1 555.2M1045.8 554.9L1045.8 556.4L1045.8 552.4L1043.5 552.4L1043.5 549.0L1037.5 549.0L1037.5 552.6M1132.4 466.1L1132.4 462.5L1132.4 464.9L1128.8 464.9L1128.8 470.2L1130.7 470.2L1130.7 474.1L1127.0 474.1M1095.2 514.8L1090.3 514.8L1095.4 514.8L1095.4 518.8L1095.4 520.5L1091.3 520.5L1091.3 518.4M934.2 392.6L934.2 389.4L939.1 389.4L939.1 392.9L939.1 390.3L939.1 387.7L933.6 387.7L930.3 387.7L930.3 385.5M1079.1 612.5L1079.1 614.5L1082.2 614.5L1084.2 614.5L1084.2 612.4L1079.9 612.4L1079.9 609.1L1077.5 609.1M1148.5 418.0L1143.9 418.0L1143.9 415.1L1140.7 415.1L1140.7 412.0L1139.1 412.0L1136.1 412.0L1136.1 407.8M1041.2 437.4L1041.2 441.6L1037.2 441.6L1041.9 441.6L1041.9 447.1M1101.8 489.7L1098.0 489.7L1098.0 495.2L1096.1 495.2L1096.1 496.8M818.4 414.2L818.4 410.6L818.4 404.6L815.9 404.6L815.9 408.8M1125.2 451.3L1122.6 451.3L1122.6 446.9L1120.1 446.9L1120.1 448.4L1120.1 442.4L1122.8 442.4M873.9 354.4L873.9 351.3L871.4 351.3L871.4 356.8L868.8 356.8L871.8 356.8L871.8 362.3L867.2 362.3L861.2 362.3M1151.9 385.1L1151.9 382.2L1157.9 382.2L1157.9 380.2L1160.7 380.2L1160.7 376.7M1138.4 476.9L1144.2 476.9L1150.1 476.9L1150.1 473.4L1150.1 468.3L1150.1 463.3L1152.9 463.3M912.2 607.6L916.1 607.6L919.0 607.6L919.0 611.4L920.6 611.4L926.3 611.4L926.3 616.0M1009.9 327.5L1007.9 327.5L1004.3 327.5L1004.3 332.6L1009.5 332.6L1009.5 327.4L1013.1 327.4M1009.4 455.2L1004.8 455.2L1004.8 457.1L1010.1 457.1M1092.2 381.6L1092.2 385.7L1092.2 391.3L1090.6 391.3L1090.6 388.2L1090.6 382.6L1090.6 386.7M926.9 328.5L922.7 328.5L922.7 325.7L922.7 323.6L922.7 326.6L926.8 326.6L930.2 326.6M1083.7 444.7L1080.3 444.7L1080.3 449.3L1075.5 449.3L1077.5 449.3L1077.5 445.9L1083.4 445.9L1081.0 445.9M1008.9 515.0L1013.4 515.0L1013.4 520.7L1016.5 520.7M845.8 322.7L849.8 322.7L846.4 322.7L846.4 320.2L843.6 320.2L846.8 320.2M807.8 544.4L801.9 544.4L801.9 549.8L801.9 546.4L806.9 546.4L806.9 551.7L806.9 554.7L809.6 554.7M745.5 333.3L745.5 334.9L741.1 334.9L743.3 334.9L743.3 336.8L743.3 332.8L737.3 332.8L737.3 330.7L731.9 330.7M955.2 577.0L951.9 577.0L951.9 574.6L957.3 574.6L957.3 577.9L963.1 577.9L966.1 577.9L967.6 577.9L967.6 579.7M1026.3 559.5L1026.3 563.3L1023.4 563.3L1023.4 567.6L1020.5 567.6L1015.8 567.6M766.9 597.8L766.9 592.5L763.7 592.5L763.7 590.6L762.0 590.6L762.0 585.6M966.4 547.5L966.4 544.6L966.4 549.7L966.4 547.5L971.3 547.5L971.3 549.7L967.3 549.7L967.3 547.5M1134.4 581.2L1138.1 581.2L1134.4 581.2L1136.2 581.2L1136.2 585.0L1132.6 585.0L1132.6 580.9L1127.9 580.9L1127.9 584.2M1052.7 523.2L1050.3 523.2L1050.3 528.6L1050.3 525.2L1045.6 525.2L1048.9 525.2L1048.9 526.8M939.4 393.2L939.4 388.4L943.0 388.4L940.8 388.4M1134.1 335.4L1134.1 340.6L1129.0 340.6L1126.3 340.6L1130.0 340.6L1130.0 336.9L1130.0 342.4L1130.0 344.6M777.0 340.4L774.0 340.4L774.0 343.5L771.7 343.5L771.7 341.4M887.6 441.8L887.6 439.6L887.6 444.6L887.6 439.2L887.6 443.5M832.5 459.4L837.7 459.4L837.7 454.7L833.9 454.7L833.9 460.1L833.9 458.4L830.3 458.4M851.1 437.1L851.1 434.1L852.7 434.1L850.7 434.1L850.7 439.6M965.1 597.4L965.1 600.1L968.5 600.1L972.8 600.1L972.8 597.3L972.8 592.7L969.5 592.7M884.9 463.2L881.7 463.2L880.0 463.2L880.0 459.8L877.3 459.8L874.2 459.8L874.2 462.4L871.7 462.4M1086.1 561.9L1086.1 559.9L1090.3 559.9L1090.3 561.9L1094.5 561.9M926.2 514.8L930.3 514.8L932.2 514.8L928.1 514.8L925.1 514.8L925.1 516.6L925.1 513.3L921.3 513.3L921.3 516.1M997.2 392.9L1002.6 392.9L1002.6 397.5L1002.6 399.5L1006.7 399.5L1006.7 401.6L1006.7 403.4L1011.0 403.4L1011.0 405.5M819.7 610.8L821.8 610.8L825.8 610.8L821.0 610.8L821.0 614.0L815.7 614.0L820.7 614.0M984.9 465.2L978.9 465.2L978.9 471.1L980.7 471.1L980.7 465.3L982.4 465.3L982.4 467.7L982.4 463.5L982.4 466.1M779.7 439.0L779.7 444.7L775.0 444.7L775.0 440.9L775.0 439.1L775.0 436.7L778.3 436.7L775.9 436.7M1155.2 507.2L1160.7 507.2L1160.7 510.6L1162.9 510.6M1011.9 408.7L1007.3 408.7L1007.3 414.3L1005.6 414.3L1005.6 411.0L1009.9 411.0L1009.9 407.7L1009.9 410.2M887.0 556.1L890.7 556.1L890.7 553.5L890.7 548.0L886.1 548.0L886.1 546.2L890.9 546.2M781.6 510.7L781.6 507.1L783.9 507.1L780.1 507.1L780.1 511.6L776.4 511.6L776.4 514.7M1163.2 566.3L1166.0 566.3L1166.0 569.6L1166.0 575.3L1161.5 575.3L1161.5 580.0L1165.3 580.0L1163.7 580.0M968.7 495.6L968.7 498.8L968.7 495.5L966.9 495.5L966.9 499.1L966.9 505.0L966.9 500.9M785.9 443.1L788.6 443.1L788.6 446.8L791.0 446.8M746.5 575.9L751.9 575.9L751.9 577.7L749.0 577.7L751.8 577.7M1043.4 582.9L1038.4 582.9L1041.6 582.9L1041.6 580.8L1041.6 582.4L1041.6 578.0L1041.6 583.7L1039.5 583.7L1039.5 581.3M896.1 509.9L896.1 513.3L891.1 513.3L894.1 513.3L894.1 511.7L888.9 511.7L885.5 511.7M818.8 512.1L818.8 516.2L816.9 516.2L816.9 518.0M828.6 560.2L824.1 560.2L824.1 557.7L820.4 557.7L818.7 557.7M849.4 322.0L849.4 316.5L844.3 316.5L839.0 316.5L842.3 316.5M929.9 370.4L929.9 364.6L933.7 364.6L933.7 359.9L939.2 359.9L939.2 354.1M826.3 329.0L826.3 333.4L831.0 333.4L831.0 338.8L836.4 338.8L840.0 338.8L840.0 335.9L840.0 340.8L840.0 339.1M986.6 327.1L981.8 327.1L981.8 332.9L981.8 331.1L985.7 331.1L985.7 325.9L985.7 330.5L983.0 330.5M774.5 500.8L774.5 495.8L772.5 495.8L772.5 491.2L772.5 495.0L772.5 490.4L770.4 490.4L770.4 485.2M957.0 436.7L960.5 436.7L958.2 436.7L961.9 436.7M867.9 420.3L864.7 420.3L864.7 424.5L861.8 424.5L861.8 420.7L865.7 420.7M1029.8 388.0L1029.8 391.7L1033.0 391.7L1033.0 395.2L1038.3 395.2L1038.3 391.5L1038.3 393.3M1130.6 500.5L1130.6 495.4L1125.9 495.4L1125.9 491.2M945.7 529.2L948.6 529.2L948.6 535.2L950.1 535.2L950.1 530.7L950.1 532.5L950.1 527.7L945.8 527.7M880.1 553.8L880.1 548.7L880.1 553.4L885.7 553.4L885.7 556.5L888.4 556.5M1142.1 387.2L1138.0 387.2L1138.0 390.3L1138.0 391.9L1138.0 397.5M919.1 399.2L913.4 399.2L913.4 403.5L917.0 403.5L917.0 407.1M1037.0 446.2L1037.0 443.6L1037.0 439.3L1032.2 439.3L1032.2 442.6L1032.2 445.7M993.4 381.7L993.4 379.2L993.4 382.3L998.7 382.3L998.7 380.7L1002.5 380.7L1002.5 384.3M921.5 436.4L921.5 438.9L917.4 438.9L917.4 444.5L915.8 444.5L915.8 447.6L910.7 447.6L910.7 444.6M753.9 429.7L753.9 431.7L751.8 431.7L751.8 434.5L753.9 434.5L753.9 439.1L750.9 439.1M1047.0 597.7L1047.0 602.6L1051.6 602.6L1051.6 606.6L1047.1 606.6L1047.1 603.5L1052.1 603.5L1048.1 603.5L1048.1 597.9M811.5 365.8L817.2 365.8L817.2 360.0L817.2 358.3M862.6 438.6L862.6 441.2L862.6 444.7L859.3 444.7L862.6 444.7L868.4 444.7M809.5 465.5L806.9 465.5L806.9 462.2L806.9 468.1L811.9 468.1L813.6 468.1L813.6 473.0L816.5 473.0M974.1 574.4L977.5 574.4L977.5 576.3L974.6 576.3L974.6 573.7M743.4 404.6L743.4 407.4L743.4 404.8L743.4 401.4L737.9 401.4L737.9 396.6L743.7 396.6L743.7 398.2L741.0 398.2M1137.7 329.6L1137.7 334.1L1133.5 334.1L1133.5 330.8L1129.4 330.8L1129.4 333.7L1129.4 330.3L1127.6 330.3L1127.6 328.2M773.4 329.4L768.9 329.4L772.5 329.4L772.5 334.7L768.7 334.7L768.7 333.0L765.1 333.0M1153.3 473.8L1157.5 473.8L1157.5 478.5L1160.8 478.5L1160.8 477.0L1158.7 477.0L1158.7 481.6M976.9 607.6L976.9 609.4L980.7 609.4L980.7 612.2L980.7 609.2L986.3 609.2M1002.1 580.9L1005.0 580.9L1005.0 586.1L1010.6 586.1M812.3 473.3L815.6 473.3L815.6 477.4L812.6 477.4L810.5 477.4L812.4 477.4L808.5 477.4M1015.6 355.8L1015.6 361.6L1018.9 361.6L1013.5 361.6L1013.5 359.7M894.4 548.8L899.1 548.8L899.1 546.5L901.5 546.5L901.5 541.8L905.3 541.8L905.3 539.9L909.4 539.9M1000.8 558.9L1000.8 561.3L1000.8 565.4L997.4 565.4M891.4 606.9L895.8 606.9L892.6 606.9L891.0 606.9L891.0 601.0L891.0 605.2M744.6 588.4L744.6 594.1L746.7 594.1L750.7 594.1M1030.1 457.9L1030.1 452.2L1027.6 452.2L1027.6 454.3L1027.6 460.0L1033.1 460.0L1033.1 455.3M897.1 548.2L897.1 553.6L902.6 553.6L902.6 559.0L902.6 562.3L902.6 560.0M885.6 456.3L885.6 450.9L882.3 450.9L882.3 456.5L879.9 456.5L884.5 456.5L884.5 460.4L886.7 460.4M872.9 600.6L868.7 600.6L868.7 603.2L862.8 603.2L862.8 607.8L858.4 607.8L859.9 607.8L864.9 607.8L867.7 607.8M735.3 355.3L735.3 353.4L739.9 353.4L739.9 349.4L734.1 349.4L734.1 347.7L738.8 347.7L738.8 345.4M820.8 608.6L823.8 608.6L818.5 608.6L818.5 605.1L818.5 600.1L814.4 600.1L814.4 598.3M802.5 462.8L802.5 465.8L797.7 465.8L797.7 467.3L794.8 467.3M772.4 362.9L772.4 367.8L767.4 367.8L767.4 371.3L771.8 371.3L771.8 375.9M963.3 348.5L961.0 348.5L967.0 348.5L967.0 342.8L969.9 342.8L969.9 337.2L975.7 337.2L975.7 331.7M1150.9 495.8L1150.9 490.3L1153.7 490.3L1151.1 490.3L1147.4 490.3L1147.4 487.5L1142.4 487.5L1142.4 485.1M868.7 594.0L874.4 594.0L874.4 599.4L876.7 599.4L876.7 603.1L871.8 603.1L871.8 607.3M1069.0 455.5L1069.0 450.2L1071.0 450.2L1072.8 450.2L1072.8 447.2L1067.4 447.2M1109.5 528.1L1109.5 526.0L1109.5 521.3L1114.7 521.3L1114.7 517.1L1118.4 517.1L1115.8 517.1L1115.8 514.3M1089.3 325.3L1089.3 330.2L1087.1 330.2L1087.1 325.0L1089.1 325.0L1094.7 325.0M750.3 548.1L754.4 548.1L754.4 543.8L754.4 541.1L754.4 537.9L754.4 534.6L748.7 534.6L748.7 529.6M988.5 396.8L985.1 396.8L979.4 396.8L984.2 396.8L989.0 396.8L987.3 396.8L987.3 393.8M850.5 440.7L848.9 440.7L848.9 438.0L848.9 443.7M920.0 530.2L920.0 527.0L923.0 527.0L923.0 525.5L928.3 525.5L928.3 530.4L924.9 530.4L924.9 535.6L920.2 535.6M1034.6 580.2L1037.4 580.2L1032.3 580.2L1032.3 577.4L1032.3 582.2L1032.3 586.2L1028.4 586.2L1028.4 588.5M918.4 367.3L918.4 371.9L923.1 371.9L925.4 371.9L925.4 375.4L925.4 380.4L930.7 380.4L930.7 376.8M867.2 472.5L867.2 468.5L872.3 468.5L872.3 473.8L868.1 473.8L868.1 477.2L872.4 477.2M1072.8 436.6L1072.8 434.3L1067.8 434.3L1065.2 434.3L1065.2 439.2L1060.4 439.2L1060.4 442.7L1060.4 438.3M980.4 438.8L984.3 438.8L981.8 438.8L981.8 443.8M967.9 452.0L967.9 450.0L972.6 450.0L972.6 453.6L970.1 453.6L967.7 453.6L967.7 457.5L972.1 457.5L972.1 460.9M1048.1 411.5L1048.1 405.8L1051.3 405.8L1051.3 409.0M914.8 613.1L920.2 613.1L920.2 608.2L922.5 608.2L922.5 610.3L920.7 610.3L920.7 608.2L915.1 608.2L915.1 612.0M955.8 387.6L949.9 387.6L949.9 391.8L947.3 391.8M1106.9 543.2L1106.9 547.1L1106.9 541.1L1109.4 541.1L1109.4 542.9L1114.2 542.9M855.2 612.7L850.1 612.7L850.1 609.7L848.5 609.7L848.5 612.7M880.2 410.7L881.9 410.7L881.9 408.7L881.9 414.5L886.4 414.5L886.4 412.4L881.3 412.4L881.3 415.0L877.2 415.0M1087.1 594.1L1083.5 594.1L1083.5 599.8L1083.5 595.4L1088.8 595.4M855.1 535.6L859.1 535.6L859.1 539.6L855.1 539.6L855.1 544.6M947.4 324.4L951.1 324.4L954.6 324.4L954.6 326.9L958.4 326.9L958.4 321.1L954.0 321.1L954.0 325.2M1059.1 550.7L1057.4 550.7L1055.1 550.7L1052.9 550.7L1052.9 545.4M901.4 387.2L901.4 385.4L896.5 385.4L896.5 387.4L901.1 387.4L905.8 387.4L905.8 382.3L900.7 382.3M1023.4 510.5L1023.4 514.1L1018.7 514.1L1018.7 512.5L1020.8 512.5L1018.5 512.5L1013.0 512.5M1061.3 564.8L1061.3 559.7L1067.0 559.7L1067.0 562.8L1061.6 562.8L1059.4 562.8L1056.4 562.8M943.2 510.9L943.2 507.5L945.6 507.5L945.6 512.3L947.9 512.3M996.1 472.2L996.1 475.9L998.4 475.9L998.4 471.2L1000.2 471.2L1000.2 469.6M1137.8 413.6L1137.8 417.9L1137.8 422.5L1141.9 422.5M952.7 517.6L952.7 520.1L952.7 515.4L956.8 515.4L956.8 519.8L954.4 519.8L954.4 516.0M946.4 449.6L946.4 451.8L946.4 455.0L946.4 457.6L946.4 454.3M823.3 342.1L817.9 342.1L817.9 343.8L817.9 342.2L813.6 342.2L816.7 342.2L816.7 347.2L820.6 347.2L815.8 347.2M788.9 385.3L790.5 385.3L790.5 383.0L793.0 383.0L794.7 383.0L796.8 383.0M1081.0 333.2L1076.6 333.2L1076.6 329.6L1076.6 324.5M767.5 399.6L771.3 399.6L771.3 394.3L774.3 394.3L774.3 392.0L771.3 392.0M808.5 374.0L811.1 374.0L811.1 370.8L811.1 366.5M1102.3 397.0L1097.7 397.0L1096.1 397.0L1096.1 395.1L1096.1 399.7L1096.1 403.9M896.8 376.0L896.8 371.9L899.9 371.9L899.9 377.7L899.9 383.7L894.3 383.7L897.0 383.7L897.0 389.6L898.9 389.6M1081.2 453.5L1084.0 453.5L1084.0 449.0L1081.4 449.0L1081.4 447.5M1135.6 376.6L1135.6 379.7L1135.6 385.0L1131.8 385.0L1131.8 390.6M1141.9 591.9L1141.9 597.1L1136.9 597.1L1136.9 599.6L1136.9 594.4L1136.9 588.7L1142.5 588.7M814.5 505.2L814.5 508.2L814.5 504.6L820.3 504.6L823.1 504.6L823.1 499.9L823.1 503.0M874.9 437.4L874.9 434.2L874.9 430.8L879.3 430.8L879.3 428.3L874.5 428.3L874.5 431.2L874.5 433.8L874.5 427.9M1083.1 513.7L1083.1 508.9L1089.0 508.9L1089.0 512.4L1085.3 512.4L1085.3 515.7L1085.3 512.7M1012.8 491.9L1018.8 491.9L1018.8 496.1L1018.8 499.1M847.4 421.8L841.6 421.8L841.6 417.3L836.1 417.3L836.1 420.8L836.1 417.6L831.2 417.6M1068.3 512.4L1068.3 506.4L1065.9 506.4L1065.9 511.9L1065.9 509.6L1068.1 509.6L1065.1 509.6L1061.3 509.6L1061.3 505.0M963.6 478.0L960.0 478.0L954.2 478.0L954.2 482.2L959.9 482.2L959.9 487.7L959.9 490.6L964.1 490.6M743.3 578.9L743.3 581.6L743.3 577.1L743.3 574.3L738.7 574.3L738.7 577.5L738.7 575.9L743.8 575.9M873.9 552.8L873.9 554.7L879.1 554.7L879.1 559.7L873.4 559.7M830.4 396.2L832.0 396.2L832.0 391.4L830.1 391.4L825.9 391.4L825.9 387.7L831.1 387.7M852.5 345.1L852.5 340.0L855.5 340.0L857.0 340.0L861.6 340.0L861.6 334.3M1026.9 545.0L1032.0 545.0L1028.8 545.0L1028.8 547.5L1026.9 547.5M1121.6 337.8L1121.6 333.3L1124.2 333.3L1124.2 330.7L1130.0 330.7L1130.0 327.9L1130.0 325.1M1077.7 360.4L1077.7 364.4L1080.9 364.4L1080.9 362.4L1080.9 360.0L1080.9 363.0L1077.9 363.0L1077.9 361.1L1082.8 361.1M738.1 594.1L741.8 594.1L741.8 590.1L741.8 585.5L739.5 585.5L739.5 590.2L739.5 588.4M1150.9 373.3L1152.8 373.3L1157.5 373.3L1157.5 370.3L1159.8 370.3L1163.1 370.3L1163.1 365.2M896.0 503.0L898.7 503.0L898.7 499.3L902.1 499.3L902.1 496.3M770.9 352.5L770.9 349.5L775.2 349.5L775.2 344.5L772.3 344.5M808.1 520.0L813.0 520.0L815.9 520.0L820.9 520.0M1015.2 490.1L1020.3 490.1L1023.3 490.1L1023.3 487.9M1044.0 537.5L1042.3 537.5L1042.3 540.9L1042.3 538.4L1038.3 538.4L1038.3 534.5M909.4 576.0L909.4 573.5L911.7 573.5L911.7 576.1L911.7 577.8L907.6 577.8L901.9 577.8L898.9 577.8M980.8 330.7L975.1 330.7L975.1 336.0L975.1 331.8L972.4 331.8L972.4 326.5L974.5 326.5M969.9 374.0L969.9 369.1L969.9 364.9L972.8 364.9L976.0 364.9L971.4 364.9M904.0 585.9L906.5 585.9L910.2 585.9L910.2 589.8L908.4 589.8L908.4 586.1M754.3 353.6L758.3 353.6L758.3 348.3L752.9 348.3L752.9 344.9L752.9 342.3L755.8 342.3L754.1 342.3L754.1 338.4M913.0 466.4L907.4 466.4L910.3 466.4L910.3 461.0L912.4 461.0M797.6 612.0L797.6 617.1L797.6 614.8L799.5 614.8L799.5 612.5L795.0 612.5L792.6 612.5L792.6 607.7M786.7 519.2L784.1 519.2L784.1 514.7L784.1 520.4L782.1 520.4L782.1 522.7M1103.5 492.7L1098.5 492.7L1098.5 490.8L1103.3 490.8L1103.3 487.0L1105.2 487.0L1102.4 487.0M739.5 373.3L734.6 373.3L734.6 374.9L729.4 374.9L729.4 372.4L725.4 372.4M1131.9 402.9L1131.9 397.2L1136.5 397.2L1142.4 397.2M1122.0 479.7L1122.0 477.2L1123.8 477.2L1123.8 482.5L1119.5 482.5L1123.0 482.5L1123.0 479.0L1125.2 479.0M876.5 471.0L878.9 471.0L878.9 476.7L876.5 476.7L876.5 480.9L879.5 480.9M765.2 544.2L765.2 538.4L760.4 538.4L760.4 534.1L760.4 529.1L755.1 529.1M776.4 525.6L776.4 527.1L772.2 527.1L772.2 522.8L769.1 522.8M775.7 535.8L775.7 540.8L778.4 540.8L784.2 540.8L781.0 540.8L777.5 540.8L775.3 540.8M952.2 540.6L952.2 545.5L947.1 545.5L947.1 540.4L942.5 540.4L942.5 536.6M870.8 340.1L870.8 337.3L874.7 337.3L876.9 337.3L879.5 337.3L879.5 343.0L876.4 343.0L876.4 347.3L881.1 347.3M948.2 596.6L948.2 601.5L944.2 601.5L948.9 601.5L948.9 597.3M779.2 381.7L780.7 381.7L783.0 381.7L783.0 387.0L783.0 391.9L779.9 391.9M911.7 425.3L911.7 430.2L911.7 425.7L916.6 425.7L916.6 430.8L922.5 430.8L922.5 436.4M919.1 388.0L919.1 392.9L922.7 392.9L922.7 397.4L926.9 397.4L926.9 400.2M750.8 447.5L750.8 453.3L750.8 458.2L746.5 458.2M793.9 401.1L795.8 401.1L790.8 401.1L790.8 397.0L796.0 397.0L798.0 397.0M944.4 407.2L944.4 412.8L942.8 412.8L942.8 407.6L937.4 407.6M802.1 324.2L802.1 327.3L802.1 330.7L802.1 333.5L802.1 328.8L802.1 333.2L802.1 330.9L804.9 330.9L804.9 327.3M944.7 516.2L944.7 521.2L944.7 517.9L941.7 517.9L939.1 517.9L939.1 519.9L941.8 519.9L941.8 525.7M1021.8 502.5L1021.8 508.4L1017.7 508.4L1022.9 508.4L1018.7 508.4L1022.7 508.4M1021.4 553.0L1023.7 553.0L1028.7 553.0L1028.7 558.5L1024.6 558.5L1024.6 554.7L1028.7 554.7M894.3 531.1L889.0 531.1L889.0 535.4L889.0 529.6L893.4 529.6L893.4 535.2L897.3 535.2L897.3 539.1L902.2 539.1M878.4 415.2L880.7 415.2L880.7 418.1L880.7 414.1L878.1 414.1L878.1 409.3L882.5 409.3L882.5 414.3L879.1 414.3M1108.6 463.5L1108.6 468.3L1108.6 471.9L1108.6 476.6L1108.6 480.9M807.4 365.8L810.9 365.8L808.3 365.8L808.3 362.6L803.4 362.6L803.4 368.0M968.8 423.7L970.4 423.7L970.4 421.1L973.1 421.1L968.6 421.1M940.4 495.1L940.4 496.6L935.9 496.6L932.9 496.6L934.8 496.6M811.1 466.5L814.7 466.5L814.7 464.2L814.7 461.3M1160.7 374.2L1160.7 368.4L1156.2 368.4L1156.2 366.2L1151.2 366.2L1147.6 366.2L1147.6 364.6L1141.8 364.6M857.5 479.4L857.5 482.8L863.5 482.8L863.5 479.2L868.5 479.2L868.5 481.7M877.9 325.7L877.9 321.7L880.9 321.7L884.8 321.7L884.8 324.1L883.3 324.1L883.3 320.3L883.3 323.1M1094.6 520.6L1099.9 520.6L1099.9 517.9L1098.4 517.9L1098.4 520.2L1103.9 520.2L1098.5 520.2L1098.5 514.4M1117.6 329.3L1115.9 329.3L1113.2 329.3L1113.2 324.5M773.6 550.0L773.6 547.5L778.1 547.5L778.1 553.3L781.7 553.3L785.2 553.3L781.1 553.3L781.1 547.7L781.1 543.0M1037.3 563.7L1037.3 565.5L1035.1 565.5L1035.1 560.7L1035.1 554.8L1033.4 554.8M850.0 573.8L850.0 571.0L850.0 572.8L845.1 572.8L845.1 575.8L849.0 575.8L843.9 575.8L842.3 575.8M793.5 410.8L793.5 405.0L790.6 405.0L794.1 405.0L789.3 405.0L793.3 405.0M1090.0 447.6L1084.9 447.6L1084.9 449.5L1089.4 449.5L1089.4 451.6L1089.4 448.8M964.7 593.4L967.3 593.4L961.9 593.4L961.9 597.9L959.1 597.9L955.3 597.9L955.3 599.8M1004.0 338.4L1004.0 344.0L999.7 344.0L999.7 342.1L994.8 342.1L994.8 339.0M869.4 453.6L869.4 459.0L869.4 455.9L871.6 455.9L877.1 455.9L873.4 455.9L873.4 458.5M902.9 383.7L902.9 381.5L902.9 375.9L905.8 375.9L905.8 372.7L902.3 372.7M828.3 460.2L828.3 457.8L823.9 457.8L823.9 462.8L828.8 462.8M1090.9 580.0L1090.9 574.1L1092.7 574.1L1092.7 577.7L1095.5 577.7L1095.5 572.5L1092.0 572.5L1092.0 566.8M901.0 467.6L901.0 472.9L906.7 472.9L906.7 468.3M848.4 370.5L851.9 370.5L851.9 365.0L851.9 360.4M1028.0 358.5L1024.9 358.5L1024.9 360.1L1024.9 364.7L1024.9 361.0L1028.8 361.0L1028.8 366.2L1024.3 366.2L1024.3 369.8M788.4 505.2L788.4 500.0L782.5 500.0L782.5 503.8L782.5 509.0L782.5 507.4L782.5 503.9L778.5 503.9L780.2 503.9M1159.6 364.5L1159.6 358.9L1156.3 358.9L1156.3 356.1L1161.0 356.1L1161.0 353.7L1161.0 356.0L1161.0 352.1M813.7 455.1L815.5 455.1L815.5 451.2L811.2 451.2L816.3 451.2L816.3 445.6L819.0 445.6L819.0 440.6M926.2 498.4L922.9 498.4L922.9 496.6L917.1 496.6L923.1 496.6L920.8 496.6L926.3 496.6L926.3 491.5M860.1 323.4L860.1 324.9L860.1 320.4L865.8 320.4L865.8 315.6M1153.6 442.3L1151.3 442.3L1151.3 448.0L1154.2 448.0L1151.3 448.0M817.1 446.1L812.5 446.1L812.5 450.6L815.9 450.6L815.9 446.0L818.6 446.0L822.6 446.0M1108.3 417.4L1108.3 411.8L1106.4 411.8L1106.4 417.7L1104.8 417.7M1009.8 484.3L1005.3 484.3L1005.3 489.3L1005.3 487.3L1009.3 487.3L1009.3 490.8L1014.6 490.8L1014.6 486.8M787.3 407.1L787.3 408.8L789.7 408.8L789.7 411.3L789.7 415.4L795.3 415.4L795.3 418.0L798.6 418.0L798.6 420.5M1069.5 468.2L1067.2 468.2L1069.7 468.2L1064.9 468.2L1064.9 473.9L1069.4 473.9L1074.0 473.9L1074.0 469.0L1079.5 469.0M1027.8 382.3L1030.7 382.3L1030.7 376.9L1030.7 371.8L1027.6 371.8L1027.6 377.0L1027.6 372.9M828.3 384.8L828.3 378.8L833.9 378.8L829.2 378.8L829.2 380.7M914.9 581.0L914.9 575.3L917.5 575.3L917.5 571.4L921.0 571.4L916.7 571.4M1119.3 576.2L1113.4 576.2L1118.6 576.2L1123.6 576.2L1120.8 576.2L1120.8 578.2M742.2 439.5L744.8 439.5L744.8 444.3L746.8 444.3L749.0 444.3L749.0 449.8M962.2 500.1L958.9 500.1L958.9 505.5L958.9 511.4M1080.0 349.4L1084.1 349.4L1081.8 349.4L1081.8 351.4L1081.8 345.8L1078.8 345.8L1083.2 345.8L1083.2 349.0L1079.9 349.0M979.5 328.9L985.4 328.9L985.4 326.5L985.4 323.5L987.8 323.5L987.8 328.8L982.1 328.8L984.4 328.8L989.7 328.8M1157.3 382.6L1163.2 382.6L1167.4 382.6L1167.4 380.6L1167.4 375.1L1170.5 375.1M839.9 500.5L845.3 500.5L845.3 497.2L848.1 497.2L848.1 492.3L842.7 492.3M1020.7 593.0L1020.7 590.5L1022.3 590.5L1022.3 585.8L1022.3 588.8L1022.3 583.4L1022.3 586.1L1019.9 586.1L1015.4 586.1M883.8 605.5L879.0 605.5L875.4 605.5L869.9 605.5L868.1 605.5M994.6 391.6L991.9 391.6L991.9 387.6L988.7 387.6L988.7 391.2L985.6 391.2L985.6 388.2L985.6 386.0L985.6 383.2M818.5 402.4L824.3 402.4L824.3 399.4L821.4 399.4L823.4 399.4L823.4 404.0L829.0 404.0M881.1 403.7L881.1 409.2L883.5 409.2L883.5 411.1L885.3 411.1L885.3 407.5M1010.2 422.9L1007.9 422.9L1007.9 427.5L1005.1 427.5L1005.1 425.0L1005.1 420.7L1003.3 420.7L1003.3 423.1L1001.6 423.1M1080.8 539.8L1086.4 539.8L1091.2 539.8L1093.3 539.8L1093.3 534.0M852.1 467.5L849.8 467.5L849.8 464.2L844.8 464.2L844.8 461.5L844.8 458.1M866.3 547.6L860.3 547.6L860.3 546.0L864.8 546.0L866.9 546.0L866.9 543.6L866.9 545.8M821.5 543.7L821.5 549.4L819.9 549.4L819.9 551.2L824.6 551.2M739.6 461.6L739.6 464.6L745.3 464.6L745.3 467.0L745.3 472.8L745.3 477.3L740.6 477.3M843.7 435.7L847.2 435.7L847.2 439.0L844.1 439.0L844.1 435.8L847.2 435.8L847.2 438.5L842.8 438.5M1027.5 376.9L1030.2 376.9L1034.6 376.9L1036.7 376.9L1036.7 381.9L1041.9 381.9L1041.9 376.2M843.3 520.6L847.9 520.6L847.9 516.9L847.9 512.6L847.9 515.2L853.2 515.2L853.2 519.4L853.2 517.1M921.9 535.9L921.9 540.4L918.3 540.4L918.3 544.1L918.3 547.1L918.3 552.2M780.0 545.1L782.2 545.1L782.2 539.9L782.2 545.2L787.4 545.2M799.5 607.8L796.8 607.8L790.8 607.8L787.9 607.8L787.9 611.2L782.8 611.2M867.5 581.3L864.4 581.3L864.4 586.6L864.4 583.3L861.9 583.3L861.9 581.6L861.9 578.8L856.1 578.8L852.7 578.8M832.6 472.6L826.9 472.6L823.6 472.6L827.8 472.6L827.8 469.3L821.8 469.3M1038.9 415.2L1038.9 420.8L1040.6 420.8L1040.6 422.4M945.3 598.3L947.7 598.3L947.7 600.6L950.9 600.6L950.9 603.4L947.0 603.4M1085.0 491.3L1085.0 487.8L1081.3 487.8L1081.3 493.6L1077.1 493.6L1071.3 493.6L1066.6 493.6M968.2 421.2L964.8 421.2L964.8 424.7L960.1 424.7L960.1 419.5L965.1 419.5L965.1 424.1L965.1 419.9L965.1 416.3M812.0 457.0L807.6 457.0L807.6 452.5L807.6 448.2L805.9 448.2L805.9 443.7L802.2 443.7L804.5 443.7M933.8 439.8L933.8 436.0L928.3 436.0L931.0 436.0M1014.9 462.3L1014.9 467.9L1020.4 467.9L1020.4 472.1L1018.4 472.1L1016.3 472.1L1016.3 469.9L1020.2 469.9L1018.6 469.9M751.7 530.8L751.7 535.4L757.4 535.4L757.4 531.8L757.4 536.1M736.2 479.5L736.2 477.0L733.4 477.0L733.4 479.4L731.8 479.4M830.2 552.1L830.2 553.7L825.9 553.7L825.9 549.8L825.9 551.6L827.9 551.6L827.9 555.4L830.0 555.4M1015.7 347.3L1018.5 347.3L1018.5 341.5L1021.6 341.5L1018.5 341.5L1022.7 341.5L1022.7 339.1L1027.0 339.1M915.4 580.8L915.4 578.1L919.9 578.1L919.9 574.6L922.9 574.6L920.8 574.6M1023.8 329.2L1023.8 330.9L1022.0 330.9L1022.0 329.2L1026.2 329.2L1026.2 332.7M777.8 571.2L777.8 573.6L777.8 571.0L774.9 571.0L774.9 569.3M918.1 563.5L918.1 559.4L918.1 562.0L913.7 562.0L913.7 557.6L913.7 554.3L917.5 554.3M1137.7 367.7L1137.7 371.4L1137.7 367.3L1142.5 367.3L1142.5 365.8L1142.5 361.1L1139.8 361.1L1139.8 357.2L1135.6 357.2M767.0 421.1L770.5 421.1L770.5 425.8L770.5 423.6L765.9 423.6M1008.6 462.5L1008.6 466.4L1008.6 468.4L1012.3 468.4L1007.7 468.4L1007.7 466.5M977.0 353.2L971.8 353.2L969.4 353.2L969.4 348.0L964.9 348.0L964.9 342.3L969.8 342.3L969.8 345.3L965.9 345.3M915.6 561.8L915.6 566.8L912.3 566.8L912.3 568.5L916.0 568.5L916.0 570.7M775.6 522.1L772.0 522.1L772.0 523.9L772.0 527.9L772.0 522.5L770.3 522.5L770.3 528.4L768.1 528.4L768.1 525.1M754.0 368.7L752.4 368.7L754.1 368.7L749.5 368.7L749.5 374.5L751.8 374.5L751.8 378.5L747.6 378.5M1014.4 393.6L1014.4 397.0L1011.8 397.0L1006.3 397.0L1001.0 397.0L1001.0 400.6L1001.0 404.9L1002.9 404.9M1124.8 535.0L1124.8 529.1L1121.7 529.1L1121.7 523.1L1125.5 523.1L1120.4 523.1L1117.8 523.1L1113.0 523.1M1037.1 610.1L1037.1 608.4L1042.1 608.4L1045.2 608.4L1045.2 602.9M977.9 547.9L977.9 542.4L977.9 539.9L980.3 539.9L980.3 544.0L983.2 544.0L983.2 542.2L980.8 542.2M942.9 515.3L946.4 515.3L946.4 511.3L946.4 508.8L948.5 508.8M812.0 541.4L812.0 536.9L814.3 536.9L814.3 533.5M792.8 464.3L798.5 464.3L794.2 464.3L794.2 461.7L794.2 467.0M1085.8 601.1L1085.8 605.7L1085.8 604.2L1085.8 610.0L1090.0 610.0M870.5 518.1L868.6 518.1L868.6 514.4L866.6 514.4L866.6 511.0L861.8 511.0L861.8 513.9M859.2 437.3L859.2 440.2L859.2 436.7L865.2 436.7L865.2 439.2L865.2 441.4L861.7 441.4M1146.2 421.4L1150.4 421.4L1150.4 419.4L1144.9 419.4M1087.3 395.2L1084.0 395.2L1084.0 391.9L1089.9 391.9L1084.1 391.9L1084.1 386.2L1080.5 386.2M896.6 610.0L891.2 610.0L891.2 613.4L893.5 613.4L893.5 615.8L890.3 615.8L885.7 615.8L885.7 613.7L883.8 613.7M1045.3 565.9L1042.5 565.9L1042.5 569.2L1042.5 572.0L1042.5 577.8L1045.6 577.8M1124.1 566.1L1129.3 566.1L1123.9 566.1L1123.9 563.3L1123.9 557.5L1123.9 563.1L1119.7 563.1L1123.7 563.1L1120.9 563.1M973.4 540.0L973.4 537.9L971.0 537.9L971.0 534.7L977.0 534.7M909.6 522.1L914.5 522.1L908.5 522.1L908.5 523.8L912.4 523.8M846.7 547.6L842.0 547.6L842.0 551.2L847.1 551.2L847.1 554.6M780.6 432.8L780.6 437.0L780.6 441.7L775.7 441.7L775.7 439.7L779.7 439.7L784.7 439.7L782.2 439.7L778.5 439.7M860.0 332.1L860.0 336.3L864.1 336.3L864.1 332.4L860.5 332.4L860.5 335.3L863.9 335.3M859.9 597.1L858.1 597.1L858.1 592.2L858.1 595.9L862.5 595.9L862.5 592.1L865.8 592.1L863.2 592.1M868.6 441.7L866.5 441.7L866.5 445.8L869.0 445.8L869.0 449.2M1110.3 571.8L1110.3 574.8L1110.3 571.7L1112.2 571.7L1112.2 573.3L1114.6 573.3L1118.5 573.3M1126.7 514.6L1126.7 509.6L1126.7 514.2L1128.8 514.2M999.1 506.9L995.5 506.9L995.5 512.8L997.1 512.8M780.9 339.5L775.2 339.5L775.2 345.2L780.1 345.2M895.9 518.5L895.9 512.6L895.9 516.9L891.2 516.9L891.2 513.6L896.7 513.6L901.0 513.6M1009.8 602.6L1009.8 597.5L1011.6 597.5L1011.6 603.1L1015.8 603.1M883.1 459.0L883.1 460.9L883.1 455.6L879.6 455.6L875.8 455.6L880.9 455.6M1076.6 455.1L1076.6 460.8L1076.6 457.2L1080.9 457.2L1083.8 457.2L1083.8 462.4L1086.5 462.4L1089.9 462.4M773.1 323.8L777.9 323.8L777.9 322.1L777.9 317.7L777.9 322.6L780.6 322.6L780.6 325.6M741.3 509.7L741.3 514.7L746.8 514.7L746.8 517.2L746.8 515.6L751.6 515.6L751.6 518.2L751.6 521.4M1094.7 534.1L1089.4 534.1L1094.5 534.1L1094.5 539.1L1099.3 539.1L1102.6 539.1L1102.6 542.9M790.2 402.9L790.2 397.1L790.2 392.9L788.6 392.9L788.6 388.6L788.6 382.9M1046.0 389.2L1040.9 389.2L1040.9 384.8L1042.8 384.8L1042.8 389.3L1047.1 389.3M827.3 412.8L832.7 412.8L832.7 407.3L828.4 407.3L828.4 412.4L822.5 412.4M996.3 566.4L996.3 560.5L992.0 560.5L992.0 565.0L987.8 565.0L987.8 561.3L993.7 561.3M929.2 404.4L932.6 404.4L932.6 410.3L930.1 410.3L930.1 416.1L932.4 416.1L932.4 420.4L929.0 420.4M849.7 423.2L852.6 423.2L852.6 417.3L852.6 413.0L857.5 413.0M974.6 514.3L974.6 510.1L977.5 510.1L977.5 507.2L972.6 507.2L972.6 512.1M872.0 477.8L875.7 477.8L875.7 479.8L875.7 478.1L878.7 478.1L878.7 474.5M797.1 445.6L800.6 445.6L800.6 449.8L800.6 448.1L794.7 448.1L790.5 448.1L796.2 448.1M890.8 389.1L890.8 384.9L890.8 387.1L896.6 387.1M929.6 357.8L929.6 359.7L933.6 359.7L933.6 354.2L928.3 354.2L928.3 358.4L931.3 358.4M1091.5 505.1L1096.5 505.1L1098.3 505.1L1098.3 507.3M1075.2 401.1L1078.4 401.1L1078.4 406.5L1074.4 406.5L1074.4 401.1M859.0 458.4L855.5 458.4L855.5 463.7L859.9 463.7L859.9 461.5L864.5 461.5L864.5 455.7L868.1 455.7M1005.8 460.8L1005.8 463.1L1005.8 467.4L1004.2 467.4L1004.2 465.0M1066.0 496.9L1066.0 502.9L1064.2 502.9L1060.4 502.9L1060.4 506.0L1062.2 506.0M951.3 597.4L951.3 602.2L953.1 602.2L957.0 602.2L957.0 604.4L957.0 608.2L952.4 608.2L958.2 608.2L958.2 609.9M1157.0 327.3L1157.0 322.0L1157.0 325.6L1161.0 325.6L1165.1 325.6L1165.1 330.2M1098.6 534.7L1098.6 529.1L1093.1 529.1L1093.1 530.7L1096.2 530.7L1096.2 535.2L1096.2 532.5L1101.2 532.5M886.8 479.2L886.8 474.8L883.2 474.8L883.2 468.9L877.9 468.9L873.8 468.9L873.8 473.5L870.0 473.5M1054.6 324.6L1054.6 319.4L1052.2 319.4L1052.2 324.1L1053.9 324.1L1053.9 329.8L1053.9 334.0L1059.2 334.0L1059.2 336.6M874.7 505.5L874.7 511.0L872.9 511.0L872.9 509.1L878.8 509.1L884.8 509.1L884.8 506.2M1132.7 374.6L1130.1 374.6L1130.1 376.5L1126.6 376.5L1126.6 382.0L1122.2 382.0M1141.2 515.7L1143.6 515.7L1143.6 509.8L1141.6 509.8M873.6 381.6L873.6 384.4L869.5 384.4L869.5 379.5L864.1 379.5L864.1 374.8M810.8 490.3L814.9 490.3L814.9 495.2L809.3 495.2M1073.1 395.4L1069.7 395.4L1069.7 398.1L1069.7 403.6L1066.3 403.6L1066.3 400.2M940.5 419.5L940.5 422.7L940.5 425.2L946.3 425.2L952.2 425.2M863.0 458.5L858.5 458.5L858.5 463.6L863.9 463.6L863.9 459.9L863.9 457.8L859.7 457.8M980.2 508.9L981.7 508.9L981.7 504.7L977.6 504.7L980.5 504.7M858.3 411.7L858.3 408.1L861.8 408.1L861.8 402.6L860.2 402.6L860.2 400.3L855.0 400.3L855.0 406.2M883.9 338.9L879.4 338.9L883.0 338.9L883.0 335.5L888.0 335.5L888.0 338.8M803.5 400.4L807.9 400.4L807.9 398.8L811.1 398.8L806.5 398.8L806.5 402.8L801.5 402.8L806.7 402.8M980.8 352.8L980.8 355.8L985.1 355.8L985.1 360.6M968.1 539.5L968.1 543.5L968.1 548.7L968.1 553.3L970.2 553.3L970.2 557.9L970.2 555.5L975.2 555.5M1157.7 591.3L1157.7 585.5L1151.9 585.5L1151.9 580.3L1148.7 580.3M1024.2 541.4L1027.7 541.4L1033.1 541.4L1036.3 541.4L1036.3 539.3L1040.1 539.3L1040.1 534.8L1045.7 534.8M987.6 357.1L989.3 357.1L989.3 360.9L991.0 360.9L991.0 365.6L995.6 365.6L995.6 361.0L991.4 361.0M812.1 439.1L808.2 439.1L808.2 441.6L813.4 441.6L813.4 443.9L809.6 443.9L809.6 448.6M768.4 472.4L762.8 472.4L762.8 477.1L759.4 477.1L759.4 482.4L759.4 486.4M833.9 457.2L833.9 458.8L838.7 458.8L844.6 458.8M1113.8 588.5L1117.5 588.5L1117.5 583.4L1121.7 583.4L1121.7 587.6L1123.6 587.6L1119.5 587.6M933.3 495.9L933.3 498.1L928.9 498.1L928.9 494.1M799.0 474.2L799.0 468.7L799.0 473.1L802.3 473.1L802.3 475.8L807.3 475.8L807.3 479.5M1069.0 448.3L1072.2 448.3L1072.2 450.4L1072.2 455.4L1070.4 455.4L1070.4 451.9L1067.6 451.9L1067.6 454.1L1071.5 454.1M817.0 454.8L820.6 454.8L817.8 454.8L817.8 458.2L814.3 458.2L814.3 463.0L814.3 464.6L814.3 459.5L812.8 459.5M830.2 512.0L835.8 512.0L841.4 512.0L841.4 514.3L841.4 508.8M956.8 458.2L952.6 458.2L952.6 455.2L956.3 455.2L952.6 455.2M1112.5 351.1L1118.1 351.1L1118.1 346.8L1121.1 346.8L1121.1 351.9L1123.8 351.9L1123.8 356.9M824.3 376.6L830.2 376.6L825.9 376.6L825.9 379.4L830.1 379.4M905.6 470.5L908.0 470.5L909.7 470.5L909.7 473.1L909.7 477.3L903.8 477.3L903.8 474.1L903.8 478.6M961.4 380.5L957.1 380.5L957.1 384.6L955.5 384.6L955.5 382.5L955.5 378.7L955.5 384.2L961.2 384.2M1051.3 460.6L1051.3 465.3L1048.2 465.3L1048.2 460.1L1046.5 460.1L1043.6 460.1L1043.6 463.1L1043.6 466.9M767.1 338.6L767.1 333.5L767.1 336.5L761.3 336.5L761.3 339.6L761.3 341.8L764.1 341.8L764.1 346.7M891.0 534.8L891.0 529.2L891.0 532.8L889.2 532.8L889.2 528.5L891.8 528.5L891.8 532.6L891.8 530.5M793.0 404.0L793.0 400.9L793.0 403.5L793.0 405.0L795.2 405.0M966.8 463.4L966.8 465.0L970.0 465.0L965.1 465.0M965.8 362.2L965.8 367.8L962.2 367.8L962.2 365.9L964.4 365.9M916.1 577.8L921.9 577.8L924.3 577.8L924.3 575.9L922.0 575.9L922.0 581.3L917.7 581.3L912.9 581.3M1149.1 389.2L1149.1 393.5L1149.1 395.2L1149.1 400.9L1152.7 400.9M927.6 537.9L927.6 535.0L924.3 535.0L919.3 535.0L919.3 529.1M856.7 456.8L851.6 456.8L851.6 453.1L851.6 455.9L851.6 451.4L847.5 451.4L844.6 451.4M830.0 419.4L828.5 419.4L828.5 415.5L830.1 415.5L830.1 417.3M1018.1 451.8L1018.1 446.5L1018.1 448.5L1016.1 448.5L1016.1 443.6M1142.9 432.8L1138.3 432.8L1138.3 430.6L1141.1 430.6L1137.5 430.6L1133.0 430.6L1133.0 435.6L1129.1 435.6M1096.7 472.2L1092.8 472.2L1092.8 475.5L1095.4 475.5M1144.4 325.2L1147.7 325.2L1147.7 323.1L1150.6 323.1M1064.4 573.3L1064.4 570.3L1060.1 570.3L1065.8 570.3L1065.8 567.5L1060.7 567.5M751.7 571.1L751.7 574.6L748.8 574.6L745.8 574.6L742.9 574.6L742.9 580.0M1023.5 327.8L1023.5 322.4L1027.9 322.4L1027.9 325.4L1027.9 323.9L1027.9 318.4M960.0 590.9L965.9 590.9L965.9 594.3L968.5 594.3L968.5 591.0L963.6 591.0L963.6 585.7L967.0 585.7L967.0 583.7M1062.4 463.7L1067.4 463.7L1062.5 463.7L1062.5 465.3L1064.5 465.3L1068.1 465.3L1068.1 462.6M737.6 379.6L737.6 375.6L735.2 375.6L735.2 371.1L740.1 371.1L740.1 376.1L746.0 376.1L750.6 376.1L749.0 376.1M1072.5 414.5L1069.9 414.5L1069.9 418.2L1069.9 421.5L1074.7 421.5L1072.8 421.5L1072.8 419.6L1074.5 419.6M1130.5 363.0L1130.5 365.2L1133.2 365.2L1133.2 368.1L1130.4 368.1L1126.9 368.1L1126.9 363.8L1128.6 363.8M890.4 345.7L885.6 345.7L885.6 344.0L881.4 344.0L881.4 348.9L881.4 352.0L879.6 352.0M1130.5 534.4L1127.8 534.4L1127.8 531.9L1133.7 531.9L1135.9 531.9L1133.6 531.9L1133.6 534.9L1129.7 534.9M754.9 448.7L754.9 444.8L757.4 444.8L759.2 444.8L759.2 442.7M1127.4 368.9L1123.2 368.9L1123.2 364.4L1123.2 368.2L1128.0 368.2L1128.0 364.7L1123.0 364.7L1123.0 369.3L1128.7 369.3M900.7 432.8L900.7 435.0L898.5 435.0L902.7 435.0L907.9 435.0M851.2 433.8L854.0 433.8L856.0 433.8L853.0 433.8L853.0 438.2M797.8 406.7L797.8 410.3L800.8 410.3L800.8 414.1L803.4 414.1M737.2 558.4L732.6 558.4L726.7 558.4L726.7 554.8L730.0 554.8L730.0 552.4L727.8 552.4M918.3 606.3L918.3 604.5L922.3 604.5L922.3 608.9L926.1 608.9L926.1 613.6L926.1 612.0M894.6 326.3L890.8 326.3L890.8 332.0L887.0 332.0L887.0 326.4L887.0 321.7L887.0 326.7M748.0 401.4L748.0 403.7L745.4 403.7L745.4 408.7L745.4 403.5L749.5 403.5M743.0 414.0L743.0 410.7L743.0 407.7L748.8 407.7L748.8 411.8L752.1 411.8L747.1 411.8L747.1 415.5M845.4 465.5L843.0 465.5L843.0 470.0L843.0 473.6L843.0 477.9L839.7 477.9M1106.3 464.1L1102.7 464.1L1102.7 458.4L1099.4 458.4L1099.4 456.1L1097.6 456.1L1097.6 462.0M914.6 521.7L916.5 521.7L916.5 527.0L914.2 527.0L914.2 521.5L918.5 521.5L918.5 525.6L922.9 525.6L917.9 525.6M1036.7 486.9L1036.7 482.7L1036.7 479.2L1036.7 477.1M919.1 519.6L919.1 524.9L919.1 521.4L920.7 521.4L920.7 519.6L918.3 519.6L918.3 523.2M877.7 515.2L882.1 515.2L884.2 515.2L886.2 515.2M893.7 456.0L893.7 460.3L891.7 460.3L891.7 465.7L894.9 465.7L894.9 467.5L891.0 467.5L891.0 462.4L891.0 466.2M1026.8 404.1L1026.8 407.2L1021.0 407.2L1021.0 409.1L1021.0 413.3M926.2 418.2L926.2 414.0L926.2 409.5L926.2 413.0L924.4 413.0L924.4 415.6L924.4 417.4L927.3 417.4L927.3 420.2M926.5 412.3L926.5 408.5L928.0 408.5L928.0 405.1L924.6 405.1L924.6 407.0L924.6 411.3L924.6 415.1L921.4 415.1M1143.1 331.1L1143.1 337.1L1143.1 342.6L1139.7 342.6L1141.5 342.6L1141.5 338.7M824.0 352.5L822.4 352.5L822.4 354.1L822.4 351.1M970.8 547.0L970.8 550.6L969.2 550.6L969.2 555.1L971.9 555.1M869.0 493.0L869.0 496.5L866.4 496.5L866.4 501.1L863.9 501.1L866.3 501.1L866.3 498.3L866.3 496.5L866.3 499.9M935.9 471.0L937.7 471.0L937.7 467.1L937.7 464.5L935.6 464.5L935.6 461.3L941.1 461.3L941.1 455.9L938.2 455.9M1116.6 564.7L1116.6 560.7L1116.6 555.7L1115.0 555.7L1112.2 555.7L1112.2 560.6L1112.2 558.4L1115.7 558.4L1115.7 553.2M797.2 531.4L799.9 531.4L799.9 526.4L805.6 526.4M1085.3 511.7L1088.5 511.7L1088.5 515.6L1091.3 515.6L1091.3 520.7L1091.3 524.6L1095.0 524.6L1095.0 526.6L1091.4 526.6M1130.7 499.6L1130.7 495.9L1127.6 495.9L1127.6 493.9L1133.1 493.9L1128.2 493.9M1163.0 537.2L1163.0 542.4L1157.2 542.4L1161.2 542.4L1161.2 539.2L1161.2 541.3L1163.0 541.3L1163.0 547.2L1168.7 547.2M827.5 510.8L830.1 510.8L833.2 510.8L833.2 516.7L828.1 516.7L828.1 513.6L828.1 519.6M1086.7 578.5L1088.6 578.5L1091.2 578.5L1093.2 578.5L1093.2 580.2M986.3 482.4L982.2 482.4L977.8 482.4L974.3 482.4L979.2 482.4M739.6 443.7L734.5 443.7L734.5 440.5L734.5 444.6L734.5 442.5L734.5 437.9L731.7 437.9M908.2 400.3L908.2 402.3L908.2 404.5L908.2 399.3L908.2 394.2L910.6 394.2L910.6 390.0L906.3 390.0M787.8 480.1L787.8 474.6L790.8 474.6L790.8 480.2M1119.2 553.7L1115.2 553.7L1115.2 557.5L1119.7 557.5L1124.1 557.5L1124.1 553.7L1121.3 553.7L1123.4 553.7L1123.4 548.1M826.2 472.4L826.2 470.2L826.2 472.1L823.3 472.1L823.3 467.9L819.5 467.9M889.0 558.8L891.5 558.8L891.5 553.2L895.1 553.2L895.1 548.8L900.7 548.8L898.4 548.8L898.4 543.5M1100.7 556.1L1096.6 556.1L1096.6 551.9L1093.0 551.9L1093.0 556.3L1087.7 556.3L1087.7 559.5L1091.6 559.5M776.0 323.8L776.0 319.6L779.6 319.6L774.2 319.6L776.8 319.6L776.8 316.9L771.5 316.9M1158.4 486.2L1158.4 490.0L1159.9 490.0L1159.9 485.3L1159.9 487.7M911.1 489.8L908.2 489.8L912.8 489.8L912.8 494.5L912.8 497.5L908.2 497.5L908.2 502.8L908.2 499.3M877.8 519.2L872.9 519.2L871.1 519.2L871.1 523.4L871.1 526.5L867.3 526.5L873.2 526.5L873.2 524.6M878.5 588.2L881.6 588.2L881.6 583.1L886.4 583.1L886.4 579.7L884.2 579.7L884.2 573.8M1097.9 575.0L1102.0 575.0L1103.8 575.0L1103.8 570.4L1103.8 566.5L1099.0 566.5M830.9 595.7L830.9 592.1L829.1 592.1L824.2 592.1L824.2 598.1L822.7 598.1L822.7 593.8L827.6 593.8L827.6 587.9M855.9 612.9L850.1 612.9L850.1 616.1L847.0 616.1L853.0 616.1L847.3 616.1M1123.4 393.5L1128.9 393.5L1128.9 399.5L1131.6 399.5L1129.2 399.5L1129.2 395.2L1123.6 395.2L1128.1 395.2L1126.3 395.2M1064.9 548.2L1066.6 548.2L1066.6 550.6L1061.4 550.6L1061.4 545.3L1061.4 548.2M735.4 514.2L732.8 514.2L732.8 511.9L732.8 516.4L732.8 510.5L737.7 510.5L737.7 514.6M1155.5 396.9L1155.5 402.8L1151.7 402.8L1151.7 407.3L1155.7 407.3L1155.7 401.9L1152.5 401.9M863.6 355.9L865.8 355.9L865.8 361.9L863.9 361.9L868.5 361.9M846.5 526.3L846.5 529.0L842.1 529.0L842.1 534.1M1026.5 496.2L1026.5 491.0L1022.0 491.0L1022.0 486.9L1022.0 481.9L1017.8 481.9L1012.1 481.9M911.5 578.3L905.8 578.3L905.8 580.2L902.9 580.2L904.7 580.2L904.7 585.7L904.7 590.8L906.8 590.8M971.1 492.9L971.1 497.2L965.3 497.2L965.3 500.4L961.6 500.4L961.6 498.4L967.1 498.4M1092.3 459.4L1087.8 459.4L1087.8 461.0L1089.6 461.0M768.1 584.2L762.7 584.2L762.7 587.9L767.5 587.9M803.9 476.6L803.9 480.6L808.9 480.6L804.3 480.6L804.3 476.1L804.3 472.5L799.4 472.5L799.4 467.7M849.3 458.1L846.6 458.1L846.6 459.8L844.4 459.8L844.4 455.9L842.5 455.9L844.1 455.9L846.0 455.9L846.0 454.4M799.8 530.6L803.9 530.6L803.9 527.4L798.7 527.4L798.7 530.4L793.1 530.4L793.1 533.8L798.8 533.8M851.2 540.8L853.8 540.8L853.8 535.6L853.8 538.4L848.6 538.4M1123.2 526.9L1118.5 526.9L1113.7 526.9L1115.9 526.9L1115.9 524.3L1112.2 524.3L1112.2 519.3L1112.2 516.7M829.0 483.0L829.0 488.4L831.2 488.4L827.4 488.4L827.4 490.9L827.4 488.8L833.3 488.8L835.8 488.8M774.5 483.2L769.7 483.2L769.7 479.5L764.0 479.5L764.0 474.4L764.0 471.7L762.4 471.7M882.6 383.6L882.6 380.3L877.0 380.3L877.0 377.0L877.0 378.6M1079.9 541.0L1082.1 541.0L1079.7 541.0L1079.7 537.1M848.1 340.9L851.8 340.9L851.8 342.6L849.0 342.6L849.0 338.8L847.5 338.8M1072.0 389.8L1072.0 385.2L1072.0 389.3L1069.1 389.3L1073.2 389.3L1067.5 389.3L1067.5 383.3L1067.5 381.2L1069.2 381.2M772.7 477.8L772.7 474.1L775.3 474.1L780.8 474.1L780.8 468.9L780.8 465.0L776.3 465.0L776.3 460.7M1157.7 604.8L1152.7 604.8L1158.4 604.8L1153.7 604.8L1153.7 600.3L1158.3 600.3M868.8 609.4L868.8 614.7L871.2 614.7L871.2 616.6L871.2 619.1L877.0 619.1L879.8 619.1L879.8 615.7M1137.0 367.8L1132.9 367.8L1132.9 362.1L1132.9 356.4M1022.5 355.5L1019.4 355.5L1019.4 352.1L1015.3 352.1L1019.4 352.1L1019.4 355.1L1017.0 355.1L1017.0 353.5M1113.0 355.2L1113.0 361.1L1113.0 359.0L1113.0 355.9L1107.3 355.9L1101.6 355.9L1101.6 357.9L1100.0 357.9M949.8 327.3L949.8 331.3L949.8 328.6L949.8 332.4L949.8 338.4L945.7 338.4L947.6 338.4L947.6 340.1M1065.8 358.3L1065.8 355.2L1060.6 355.2L1060.6 350.0L1063.7 350.0L1060.6 350.0M801.1 419.5L798.4 419.5L798.4 423.2L793.3 423.2L793.3 427.8L795.1 427.8L790.7 427.8L790.7 430.2M1058.5 550.3L1058.5 552.9L1056.2 552.9L1056.2 558.5L1056.2 555.6L1056.2 557.2L1056.2 560.4L1051.5 560.4M803.0 605.2L803.0 610.1L803.0 605.8L806.3 605.8L806.3 602.6M1128.0 452.7L1130.6 452.7L1130.6 456.6L1133.0 456.6L1128.6 456.6L1131.5 456.6L1131.5 460.1L1134.9 460.1L1134.9 462.1M741.6 513.1L741.6 508.6L735.9 508.6L735.9 505.0L741.1 505.0L736.1 505.0L740.9 505.0M785.2 402.5L779.6 402.5L779.6 399.4L779.6 401.5L782.9 401.5L787.2 401.5M956.2 345.9L956.2 349.9L956.2 347.9L954.6 347.9L954.6 343.1L954.6 337.9L950.2 337.9L946.7 337.9M843.1 574.8L847.5 574.8L847.5 573.2L851.9 573.2L851.9 578.0L857.8 578.0L857.8 583.6L857.8 586.4M1038.3 484.2L1042.6 484.2L1042.6 486.7L1042.6 489.6L1037.2 489.6M1019.3 352.4L1019.3 348.8L1014.0 348.8L1014.0 344.4L1014.0 346.6L1008.9 346.6L1008.9 352.4M1068.6 493.4L1073.4 493.4L1073.4 497.8L1071.2 497.8M941.6 370.3L939.5 370.3L939.5 373.7L935.5 373.7L929.6 373.7L929.6 370.9L929.6 376.7L933.3 376.7M1120.4 537.4L1120.4 543.0L1118.0 543.0L1118.0 547.8L1112.2 547.8M991.4 454.0L988.4 454.0L985.2 454.0L985.2 452.0L985.2 455.3L983.2 455.3L987.8 455.3L984.7 455.3M1053.7 516.6L1057.2 516.6L1057.2 513.1L1052.8 513.1L1052.8 509.2M826.8 530.4L825.1 530.4L825.1 524.7L820.6 524.7L824.4 524.7M1096.5 389.9L1096.5 395.7L1096.5 400.8L1094.2 400.8L1094.2 398.8L1097.6 398.8L1097.6 393.5M1006.6 558.9L1009.2 558.9L1004.8 558.9L1004.8 556.3L1000.6 556.3L1002.4 556.3L996.8 556.3L996.8 561.6M1139.1 447.6L1144.1 447.6L1141.2 447.6L1141.2 449.7M1123.1 324.8L1123.1 329.0L1128.8 329.0L1131.7 329.0L1131.7 323.5L1131.7 318.4L1128.1 318.4M948.2 354.6L945.9 354.6L949.6 354.6L949.6 356.4L946.5 356.4L946.5 358.2L948.7 358.2M846.5 539.2L846.5 543.7L842.7 543.7L844.3 543.7L844.3 541.0L840.1 541.0L840.1 535.8L834.5 535.8M853.3 321.6L853.3 316.2L848.6 316.2L842.9 316.2L839.4 316.2M1009.0 338.4L1012.7 338.4L1012.7 332.4L1010.3 332.4M848.9 576.8L854.1 576.8L854.1 575.1L859.5 575.1L859.5 577.1L857.9 577.1M1075.8 440.8L1070.5 440.8L1070.5 444.8L1070.5 442.2L1073.6 442.2L1073.6 439.4L1071.4 439.4L1071.4 441.5L1071.4 436.1M771.0 366.3L771.0 364.0L766.0 364.0L763.9 364.0L763.9 368.3L760.7 368.3L760.7 366.3L756.6 366.3L756.6 369.9M1116.4 401.0L1118.9 401.0L1118.9 402.6L1124.5 402.6L1128.6 402.6L1128.6 404.7L1128.6 409.3M877.1 437.5L880.1 437.5L880.1 442.1L886.0 442.1L886.0 436.7M830.4 589.1L835.6 589.1L835.6 585.9L839.6 585.9L839.6 583.2L839.6 586.4L839.6 592.3L833.9 592.3M826.0 553.7L826.0 558.7L827.7 558.7L827.7 562.2L822.1 562.2L822.1 557.6L817.9 557.6L817.9 560.1L817.9 564.7M977.1 467.8L977.1 469.7L982.2 469.7L982.2 465.3L984.4 465.3L984.4 459.8M1086.4 551.9L1086.4 548.4L1091.1 548.4L1091.1 543.3M960.5 516.0L957.2 516.0L952.0 516.0L952.0 510.8L947.2 510.8M1043.8 515.7L1039.9 515.7L1039.9 520.1L1041.4 520.1M994.0 567.3L994.0 561.8L991.4 561.8L991.4 565.3L991.4 563.0L991.4 566.1L991.4 564.4L985.5 564.4L985.5 570.4M999.1 544.2L999.1 539.9L999.1 538.4L994.9 538.4L994.9 535.2L991.7 535.2L988.7 535.2M982.3 564.3L976.9 564.3L976.9 562.0L980.1 562.0L980.1 564.7L983.6 564.7L987.5 564.7L987.5 559.3L989.5 559.3M1141.6 387.7L1139.1 387.7L1134.1 387.7L1134.1 393.0L1134.1 396.4L1139.5 396.4L1137.3 396.4M913.1 400.6L907.6 400.6L907.6 402.3L911.8 402.3L911.8 408.1L908.4 408.1L906.5 408.1L906.5 404.1L902.0 404.1M814.3 382.4L814.3 388.3L810.2 388.3L815.7 388.3L815.7 383.8M817.3 454.5L817.3 460.0L822.8 460.0L828.4 460.0L834.3 460.0M1135.9 590.8L1132.3 590.8L1132.3 588.4L1128.0 588.4M1117.7 510.1L1122.5 510.1L1122.5 513.8L1124.2 513.8L1124.2 509.9L1126.8 509.9L1131.9 509.9L1130.2 509.9M1150.2 510.2L1150.2 505.4L1145.2 505.4L1145.2 507.7L1147.3 507.7L1147.3 509.7L1147.3 504.5L1141.7 504.5L1136.8 504.5M1070.6 417.0L1075.9 417.0L1075.9 419.2L1078.5 419.2L1078.5 422.9L1075.7 422.9L1075.7 418.4L1075.7 414.7M1043.3 609.0L1047.7 609.0L1047.7 612.9L1049.4 612.9L1049.4 616.6L1046.7 616.6L1046.7 621.6M995.7 351.9L998.3 351.9L998.3 353.8L1001.1 353.8L1001.1 349.3L1004.4 349.3L1004.4 343.4L1006.6 343.4M1076.9 495.4L1072.4 495.4L1074.9 495.4L1070.0 495.4M1066.7 336.2L1066.7 338.5L1072.0 338.5L1066.7 338.5L1066.7 335.2L1064.7 335.2M891.1 437.5L891.1 432.8L894.3 432.8L894.3 437.9L890.5 437.9L890.5 432.3L886.1 432.3L886.1 438.1M822.4 548.0L822.4 553.5L822.4 558.5L818.8 558.5L818.8 556.6L821.9 556.6M782.9 460.8L780.1 460.8L780.1 458.1L784.6 458.1L784.6 460.6L787.0 460.6L781.0 460.6L778.9 460.6M769.1 595.9L769.1 594.4L769.1 599.2L770.8 599.2L774.1 599.2L774.1 600.8L774.1 602.4L771.0 602.4M1040.9 445.7L1046.1 445.7L1046.1 451.1L1049.1 451.1L1051.5 451.1L1051.5 448.4L1056.2 448.4L1058.2 448.4M986.2 387.5L986.2 385.3L983.8 385.3L983.8 388.6M925.8 553.2L925.8 548.4L928.7 548.4L928.7 543.2L926.4 543.2L926.4 547.4L926.4 541.6L926.4 536.3L923.7 536.3M816.8 570.0L822.0 570.0L822.0 564.5L822.0 560.1L822.0 562.3L822.0 558.3L819.0 558.3M955.9 362.7L955.9 368.5L958.1 368.5L958.1 365.9L952.8 365.9L949.8 365.9L949.8 360.1M927.3 521.1L931.9 521.1L937.9 521.1L937.9 525.3L942.5 525.3L942.5 522.9L945.0 522.9L946.7 522.9L941.8 522.9M940.1 384.2L944.5 384.2L944.5 381.6L949.6 381.6L949.6 384.9L944.4 384.9M1149.8 510.3L1146.4 510.3L1151.8 510.3L1154.1 510.3L1154.1 512.8L1151.9 512.8L1151.9 515.4L1153.7 515.4L1157.6 515.4M1092.5 382.6L1087.1 382.6L1081.9 382.6L1081.9 381.0L1086.2 381.0L1086.2 385.4L1086.2 380.6L1084.4 380.6M770.9 476.6L772.5 476.6L776.1 476.6L772.5 476.6M1015.9 362.9L1015.9 367.3L1015.9 373.0L1011.5 373.0L1006.0 373.0L1006.0 374.6L1006.0 371.6M1040.2 547.0L1036.6 547.0L1036.6 552.5L1036.6 548.5L1033.9 548.5M1020.0 403.7L1020.0 406.0L1020.0 401.4L1022.3 401.4L1022.3 403.8M1035.5 584.7L1040.0 584.7L1040.0 586.2L1040.0 582.8L1036.4 582.8L1036.4 588.5L1036.4 584.4L1033.0 584.4M843.8 484.0L843.8 489.9L848.5 489.9L848.5 484.0M838.7 488.8L838.7 483.6L838.7 481.7L835.1 481.7L835.1 478.3L837.4 478.3L837.4 473.2M867.5 453.3L870.5 453.3L870.5 449.3L870.5 453.5L872.8 453.5L876.4 453.5L871.3 453.5L874.5 453.5M999.3 562.3L994.6 562.3L998.4 562.3L1001.9 562.3L997.4 562.3L998.9 562.3L998.9 567.9L994.0 567.9L992.1 567.9M986.1 558.1L992.0 558.1L995.2 558.1L1000.4 558.1L1000.4 554.2L1005.4 554.2M772.8 405.1L772.8 409.5L772.8 414.4L769.4 414.4L769.4 411.3L774.6 411.3L774.6 406.8L771.3 406.8L771.3 411.2M824.8 554.6L820.4 554.6L820.4 550.4L825.1 550.4L821.1 550.4M950.6 424.8L950.6 427.0L952.4 427.0L958.2 427.0L958.2 424.3L963.5 424.3M962.0 447.8L962.0 452.4L966.4 452.4L966.4 455.1L961.6 455.1L961.6 456.8L957.7 456.8L957.7 458.9M802.9 442.1L806.8 442.1L806.8 436.4L809.9 436.4M930.8 580.7L934.1 580.7L934.1 585.3L932.4 585.3L928.3 585.3L928.3 588.0L930.8 588.0M946.3 429.3L941.8 429.3L941.8 434.2L946.6 434.2L946.6 432.4L942.1 432.4L942.1 436.9M1010.6 448.6L1005.9 448.6L1004.4 448.6L1004.4 443.0L1004.4 439.6M830.0 359.2L830.0 355.2L824.5 355.2L824.5 349.8L822.9 349.8L822.9 345.2L818.4 345.2M1057.8 358.3L1057.8 356.4L1060.1 356.4L1060.1 352.1L1060.1 357.3M1147.2 442.8L1147.2 448.0L1147.2 442.1L1143.2 442.1M1006.7 340.5L1010.7 340.5L1010.7 335.7L1010.7 338.7L1007.8 338.7L1007.8 337.0L1011.8 337.0M1102.1 341.8L1102.1 344.3L1099.8 344.3L1099.8 347.9L1099.8 344.6L1094.1 344.6M791.8 432.9L791.8 435.7L794.5 435.7L794.5 433.2L794.5 435.7L794.5 438.2M817.0 561.0L817.0 556.2L815.4 556.2L815.4 561.4L812.3 561.4L809.5 561.4M929.1 331.7L932.8 331.7L932.8 335.3L934.5 335.3L934.5 330.1L936.4 330.1L942.4 330.1M815.5 532.6L815.5 537.5L813.1 537.5L813.1 542.0L813.1 546.9L813.1 542.4L809.6 542.4M999.4 553.0L999.4 549.5L1004.3 549.5L1002.6 549.5L1002.6 553.6L998.9 553.6L998.9 550.4L1003.3 550.4M935.3 403.4L935.3 407.3L933.7 407.3L928.0 407.3L928.0 402.4L928.0 406.0L928.0 408.0M1152.0 513.4L1146.4 513.4L1146.4 517.7L1143.1 517.7L1141.6 517.7L1141.6 521.0M1140.1 456.7L1135.9 456.7L1132.9 456.7L1132.9 462.7M842.9 495.2L839.5 495.2L839.5 499.4L843.0 499.4M853.9 368.1L853.9 363.0L853.9 364.6L853.9 359.9L851.8 359.9L851.8 357.9L851.8 354.6L854.8 354.6M1034.0 604.0L1034.0 598.5L1037.0 598.5L1037.0 602.4M941.0 348.2L941.0 351.6L942.6 351.6L942.6 356.1L947.5 356.1M781.7 398.2L781.7 396.5L776.3 396.5L776.3 399.3L776.3 395.9L776.3 393.2M1091.9 356.3L1087.6 356.3L1087.6 361.5L1087.6 356.1L1086.0 356.1L1086.0 359.4L1086.0 354.1M1099.6 394.5L1099.6 398.5L1105.3 398.5L1109.3 398.5L1105.0 398.5M1058.5 326.5L1058.5 323.9L1055.8 323.9L1050.2 323.9L1050.2 322.4L1052.8 322.4L1052.8 324.2M987.0 511.9L987.0 513.6L990.1 513.6L990.1 509.3L988.0 509.3L988.0 513.0M962.0 569.5L962.0 566.1L964.8 566.1L964.8 560.7L959.0 560.7L959.0 563.5L956.9 563.5M1035.7 496.6L1035.7 492.5L1030.2 492.5L1030.2 495.7L1035.0 495.7L1030.3 495.7L1030.3 492.7L1030.3 489.0L1027.4 489.0M999.1 502.8L999.1 500.7L995.1 500.7L993.5 500.7L988.9 500.7L988.9 502.7L983.6 502.7L983.6 508.0M785.7 409.9L782.9 409.9L787.1 409.9L787.1 405.1M893.9 555.1L893.9 558.6L891.4 558.6L897.0 558.6M1133.3 327.5L1133.3 330.4L1138.9 330.4L1138.9 324.5L1143.5 324.5L1143.5 318.8L1143.5 323.4L1143.5 318.9L1143.5 314.6M1119.5 435.1L1119.5 440.3L1117.7 440.3L1117.7 444.6L1123.0 444.6M1042.5 591.9L1038.5 591.9L1038.5 597.7L1042.6 597.7L1042.6 594.5M923.0 521.2L923.0 526.7L927.2 526.7L927.2 524.9M947.0 551.4L944.9 551.4L942.3 551.4L938.7 551.4L938.7 546.6L943.4 546.6L943.4 548.7M1162.7 532.6L1165.3 532.6L1170.8 532.6L1170.8 535.1M1136.8 418.0L1136.8 423.1L1138.8 423.1L1138.8 420.6L1138.8 422.4L1140.7 422.4L1140.7 425.7M765.9 569.8L765.9 573.6L765.9 568.5L770.8 568.5L770.8 573.0L772.3 573.0L774.0 573.0L774.0 576.4M957.5 365.2L962.8 365.2L962.8 369.4L962.8 371.6L967.3 371.6L964.2 371.6L964.2 374.2L964.2 372.1L964.2 376.2M911.0 460.9L911.0 457.0L913.3 457.0L913.3 462.6L915.6 462.6L910.6 462.6L910.6 465.1M1105.2 531.3L1110.0 531.3L1110.0 529.7L1110.0 525.5L1105.9 525.5L1101.3 525.5L1101.3 522.1L1098.4 522.1M1070.0 565.0L1073.4 565.0L1073.4 568.5L1070.4 568.5L1070.4 570.8L1065.1 570.8L1070.2 570.8M829.3 337.3L829.3 331.4L831.9 331.4L831.9 334.3L826.6 334.3L826.6 328.4L824.4 328.4L824.4 333.1M737.9 582.7L741.8 582.7L738.6 582.7L742.1 582.7M779.6 331.0L779.6 328.7L779.6 331.3L776.2 331.3L776.2 335.8L776.2 332.9L776.2 329.8M856.5 388.8L856.5 391.3L853.7 391.3L853.7 396.8L853.7 393.0L859.3 393.0L857.4 393.0L860.3 393.0M1106.8 407.4L1102.5 407.4L1102.5 412.3L1106.1 412.3L1106.1 408.2M991.8 563.1L986.7 563.1L986.7 569.1L986.7 572.7M871.0 585.7L871.0 580.2L875.3 580.2L875.3 577.1L872.0 577.1L872.0 574.0L872.0 571.3M914.8 500.7L914.8 502.7L916.9 502.7L912.5 502.7M1108.2 508.0L1111.7 508.0L1111.7 512.2L1114.8 512.2L1114.8 509.8L1114.8 513.9L1116.4 513.9L1116.4 518.4L1119.5 518.4M1145.1 474.8L1142.4 474.8L1142.4 476.3L1148.1 476.3L1148.1 480.4L1150.0 480.4L1150.0 477.0L1145.4 477.0M1017.9 508.9L1017.9 512.6L1017.9 510.2L1019.6 510.2L1019.6 506.1L1014.4 506.1L1014.4 512.1L1010.5 512.1M1070.9 432.3L1067.8 432.3L1067.8 437.1L1062.3 437.1L1066.1 437.1M980.2 464.0L984.3 464.0L988.2 464.0L988.2 460.3M904.9 321.9L907.9 321.9L907.9 320.2L913.3 320.2L913.3 315.0L910.8 315.0L910.8 320.6L905.3 320.6M744.1 531.2L748.1 531.2L748.1 534.0L750.8 534.0L750.8 536.0L752.4 536.0L752.4 530.9M902.1 480.4L902.1 486.0L904.8 486.0L904.8 482.2L902.7 482.2L906.0 482.2M1079.3 588.0L1084.8 588.0L1084.8 589.5L1082.9 589.5L1082.9 584.9L1081.3 584.9M997.0 513.3L992.9 513.3L992.9 515.4L994.5 515.4L997.1 515.4L1003.0 515.4L1003.0 512.5L1003.0 508.8M839.2 497.2L839.2 500.0L834.8 500.0L834.8 495.6M825.4 357.3L831.2 357.3L831.2 362.1L825.9 362.1L825.9 358.6L823.9 358.6L827.0 358.6L823.5 358.6L828.4 358.6M782.1 500.4L779.6 500.4L782.4 500.4L782.4 505.6L784.2 505.6L784.2 510.7L784.2 514.2M787.2 487.6L787.2 492.3L790.0 492.3L790.0 489.8L785.8 489.8L785.8 486.7L785.8 483.7L783.0 483.7M929.5 360.3L929.5 364.3L924.3 364.3L921.6 364.3L921.6 367.5L916.8 367.5L916.8 362.9L914.6 362.9M799.1 551.8L793.9 551.8L793.9 547.3L793.9 543.8L799.5 543.8L799.5 548.0L797.5 548.0L797.5 549.6M982.5 608.5L984.6 608.5L979.0 608.5L973.8 608.5L973.8 613.2L970.0 613.2L965.5 613.2L969.6 613.2L969.6 618.7M799.9 402.0L799.9 404.9L804.8 404.9L804.8 408.6L804.8 413.7L802.0 413.7L799.1 413.7L799.1 419.4L794.3 419.4M1030.4 424.0L1025.6 424.0L1025.6 421.1L1028.1 421.1L1028.1 419.4L1032.8 419.4M809.7 489.3L804.6 489.3L804.6 491.9L804.6 487.5L804.6 492.3L804.6 487.1M808.2 602.2L808.2 603.7L808.2 605.7L814.1 605.7L810.1 605.7M904.0 333.8L909.3 333.8L909.3 335.7L909.3 338.7L911.8 338.7L911.8 343.8L914.1 343.8M971.1 601.7L971.1 607.1L966.6 607.1L966.6 611.3L963.0 611.3L963.0 613.1L957.4 613.1L957.4 607.5L957.4 603.4M1008.7 468.4L1008.7 470.7L1008.7 466.0L1005.7 466.0L1005.7 463.5L1000.4 463.5L1000.4 461.8L1005.9 461.8M1024.6 453.3L1030.4 453.3L1035.8 453.3L1035.8 450.3L1032.1 450.3L1034.9 450.3M810.1 544.1L810.1 539.8L810.1 544.3L807.1 544.3L807.1 541.6L807.1 544.8L810.6 544.8M1079.0 441.2L1081.4 441.2L1081.4 446.7L1087.1 446.7L1089.3 446.7L1091.4 446.7M957.1 477.1L955.3 477.1L955.3 471.8L950.9 471.8M1157.4 336.2L1160.7 336.2L1158.2 336.2L1158.2 330.4L1158.2 326.7L1162.2 326.7L1162.2 330.9M924.8 613.3L924.8 615.3L924.8 618.9L930.6 618.9L927.0 618.9L927.0 621.8M831.6 418.9L831.6 423.7L831.6 420.1L831.6 416.2M933.7 513.2L933.7 507.6L930.8 507.6L930.8 511.6M1018.3 326.5L1018.3 322.6L1020.7 322.6L1016.2 322.6L1016.2 317.8L1014.0 317.8L1014.0 312.0M988.0 565.5L984.2 565.5L981.6 565.5L985.4 565.5M961.7 379.2L957.4 379.2L959.7 379.2L964.0 379.2M1032.2 608.8L1028.5 608.8L1024.9 608.8L1026.7 608.8L1026.7 604.9L1022.6 604.9M822.7 389.8L822.7 385.2L827.9 385.2L827.9 388.1L822.1 388.1M1160.9 376.3L1160.9 373.6L1156.8 373.6L1162.4 373.6L1162.4 377.6L1162.4 381.3L1167.6 381.3L1167.6 375.7M1014.7 338.6L1014.7 333.4L1009.3 333.4L1009.3 330.0L1009.3 324.8L1009.3 322.6M798.0 325.1L798.0 329.9L802.3 329.9L804.8 329.9L807.8 329.9M989.1 416.5L984.3 416.5L984.3 412.1L984.3 413.7L984.3 411.3L989.8 411.3L991.8 411.3L988.7 411.3L988.7 416.9M816.0 529.0L816.0 533.8L821.9 533.8L824.5 533.8L822.1 533.8L822.1 528.3M800.8 465.8L804.1 465.8L804.1 469.0L808.0 469.0M1011.7 444.4L1011.7 448.4L1010.1 448.4L1010.1 452.1L1007.6 452.1L1002.8 452.1M764.4 524.5L766.4 524.5L766.4 529.4L763.3 529.4M755.3 431.5L755.3 429.6L755.3 435.6L755.3 439.1L755.3 435.0L757.4 435.0L757.4 439.2L757.4 442.7M1033.9 524.7L1036.3 524.7L1032.3 524.7L1030.6 524.7L1030.6 529.6L1034.9 529.6L1034.9 525.9M872.8 575.1L876.5 575.1L876.5 569.7L873.5 569.7M925.3 496.6L925.3 499.4L927.3 499.4L927.3 495.7M811.1 593.5L811.1 587.5L806.2 587.5L808.0 587.5L812.5 587.5M921.9 440.6L921.9 436.0L921.9 432.8L919.4 432.8L921.7 432.8L923.2 432.8L923.2 431.1L926.0 431.1L926.0 427.6M1056.0 416.0L1050.2 416.0L1050.2 413.7L1053.6 413.7L1053.6 418.7M990.5 541.8L990.5 546.5L986.6 546.5L986.6 544.2L982.5 544.2L982.5 538.3M1071.5 355.1L1076.6 355.1L1076.6 356.9L1082.5 356.9L1084.1 356.9L1084.1 354.9M811.0 562.7L815.3 562.7L815.3 565.2L820.5 565.2L820.5 566.8L825.9 566.8L821.5 566.8L818.2 566.8M876.0 415.4L876.0 419.4L874.0 419.4L874.0 416.6L872.2 416.6L872.2 414.8L872.2 410.9L873.9 410.9L873.9 406.9M898.1 496.4L901.2 496.4L901.2 494.8L901.2 499.6L901.2 505.4M869.0 545.1L865.6 545.1L865.6 542.0L865.6 547.5L863.4 547.5L863.4 549.8L861.1 549.8L861.1 547.6L861.1 543.1M983.3 414.2L981.2 414.2L981.2 415.9L981.2 417.7L983.1 417.7L983.1 412.5L988.7 412.5L985.6 412.5L985.6 417.3M788.0 524.8L788.0 520.9L793.1 520.9L793.1 526.4L793.1 524.6L793.1 520.9L790.1 520.9L790.1 526.1L796.1 526.1M927.2 411.1L927.2 406.9L921.2 406.9L921.2 411.6L918.5 411.6L918.5 414.0M814.1 549.1L814.1 553.6L817.4 553.6L817.4 549.5L812.9 549.5M829.6 454.0L835.4 454.0L835.4 457.7L837.1 457.7L837.1 456.0M1030.1 589.3L1030.1 594.4L1030.1 591.1L1028.0 591.1L1028.0 586.9L1028.0 590.3L1026.1 590.3M1101.2 548.1L1101.2 550.6L1096.7 550.6L1096.7 548.8L1094.7 548.8L1089.5 548.8L1089.5 546.3M832.0 541.4L832.0 547.3L828.0 547.3L825.7 547.3L831.2 547.3L826.5 547.3L826.5 549.4L829.2 549.4L829.2 547.4M845.5 469.9L841.8 469.9L841.8 465.1L839.8 465.1L839.8 470.4L845.4 470.4L845.4 465.2L851.0 465.2L851.0 462.2M952.6 599.1L957.8 599.1L954.0 599.1L956.7 599.1L956.7 596.8L956.7 602.1L953.5 602.1L953.5 599.4M905.7 360.0L905.7 363.2L904.0 363.2L904.0 368.2M833.3 394.1L827.9 394.1L823.8 394.1L823.8 392.3L829.8 392.3L829.8 386.3M769.6 593.3L772.7 593.3L772.7 587.7L772.7 585.2L770.4 585.2M764.4 462.9L764.4 460.3L769.0 460.3L773.0 460.3L778.9 460.3L780.8 460.3L780.8 458.0L780.8 460.0L780.8 454.2M997.9 604.5L1001.8 604.5L996.1 604.5L996.1 606.4L992.0 606.4L988.9 606.4L988.9 609.6M1017.8 503.2L1017.8 498.4L1014.6 498.4L1014.6 495.8L1014.6 492.1M860.3 475.2L860.3 469.4L860.3 473.9L860.3 471.8L864.4 471.8L859.0 471.8L859.0 470.2L861.1 470.2L861.1 472.6M1140.1 449.1L1136.1 449.1L1139.4 449.1L1139.4 454.0L1135.6 454.0M938.8 531.1L936.3 531.1L936.3 528.0L941.1 528.0L941.1 525.2L941.1 522.5L936.6 522.5M1071.2 340.6L1071.2 338.0L1067.6 338.0L1067.6 334.2M746.8 342.9L746.8 346.8L746.8 345.0L744.8 345.0L744.8 348.7M985.1 528.3L981.5 528.3L981.5 533.7L983.5 533.7L983.5 535.6L979.7 535.6L979.7 539.3M787.0 529.3L787.0 526.8L789.0 526.8L789.0 528.8M812.1 524.5L812.1 521.8L808.3 521.8L808.3 527.2L808.3 533.0L808.3 535.9L806.2 535.9L806.2 530.7L808.4 530.7M1105.2 584.9L1105.2 581.6L1105.2 584.4L1105.2 579.7M1065.6 611.5L1062.3 611.5L1062.3 609.7L1056.9 609.7L1055.1 609.7L1055.1 605.9L1051.1 605.9L1051.1 602.4M1030.1 565.5L1026.2 565.5L1026.2 570.0L1028.7 570.0L1028.7 564.7L1030.6 564.7L1030.6 559.5M1034.3 370.7L1034.3 376.2L1034.3 373.4L1028.7 373.4M789.9 353.5L785.5 353.5L785.5 356.3L783.7 356.3L783.7 358.2L788.7 358.2L788.7 353.7L792.2 353.7L792.2 358.9M788.2 583.1L788.2 587.0L790.8 587.0L790.8 591.2L793.4 591.2L793.4 586.3M784.7 584.3L786.2 584.3L782.9 584.3L786.2 584.3L786.2 579.7L782.2 579.7L782.2 584.9L782.2 587.2L776.3 587.2M881.8 335.8L886.1 335.8L886.1 332.6L888.4 332.6L888.4 334.2L883.6 334.2L885.9 334.2M999.6 509.6L1003.1 509.6L1003.1 515.1L998.0 515.1L998.0 521.0L1000.0 521.0L1000.0 525.5L1000.0 520.0M1140.5 528.4L1137.9 528.4L1137.9 526.3L1132.8 526.3L1132.8 531.4L1128.2 531.4L1128.2 526.9L1122.3 526.9M849.8 332.5L849.8 327.3L855.0 327.3L849.3 327.3L846.6 327.3M757.8 328.9L754.2 328.9L755.9 328.9L755.9 323.6L755.9 320.3L750.7 320.3M787.7 595.7L782.0 595.7L782.0 600.0L776.3 600.0M988.9 418.9L984.4 418.9L984.4 414.6L987.5 414.6M906.9 433.1L906.9 438.7L910.1 438.7L910.1 444.2L910.1 439.2L910.1 445.1M1020.2 357.4L1016.9 357.4L1021.6 357.4L1021.6 363.4L1027.0 363.4M899.3 539.0L899.3 534.5L899.3 537.2L895.3 537.2L895.3 542.2L890.5 542.2L890.5 539.4L892.3 539.4M1012.1 357.7L1007.0 357.7L1007.0 361.6L1007.0 360.1L1009.7 360.1L1005.6 360.1L1010.6 360.1M1090.6 527.5L1093.5 527.5L1093.5 533.4L1099.2 533.4M1159.2 388.6L1163.0 388.6L1163.0 385.5L1163.0 389.1L1163.0 383.9M879.6 608.8L879.6 604.6L876.7 604.6L871.6 604.6L871.6 610.5L874.1 610.5L874.1 604.7L874.1 598.9M948.4 468.5L948.4 464.9L948.4 459.3L948.4 456.8L945.9 456.8M1087.0 461.2L1089.8 461.2L1089.8 456.3L1086.2 456.3L1086.2 450.9L1090.3 450.9L1090.3 447.4M839.1 413.2L842.3 413.2L842.3 418.6L846.0 418.6M824.9 377.0L829.7 377.0L829.7 372.9L824.0 372.9L821.1 372.9L821.1 369.0L819.6 369.0L819.6 374.0M981.5 411.6L981.5 408.1L981.5 404.6L976.3 404.6L979.9 404.6L979.9 401.5L977.1 401.5M893.0 535.1L893.0 540.7L895.7 540.7L897.3 540.7L897.3 543.4L893.8 543.4M748.0 600.6L742.1 600.6L742.1 595.2L742.1 592.9L737.1 592.9L737.1 596.7L743.0 596.7M1097.2 466.1L1097.2 461.2L1097.2 464.2L1097.2 465.9L1099.7 465.9L1099.7 470.9M1064.8 359.2L1067.1 359.2L1073.0 359.2L1073.0 364.7L1071.4 364.7L1071.4 366.4M963.3 549.1L963.3 554.7L963.3 549.7L963.3 546.9L963.3 550.5L966.0 550.5L966.0 553.9L966.0 558.8L970.1 558.8M1039.9 489.3L1042.4 489.3L1042.4 485.4L1042.4 491.2L1047.9 491.2L1047.9 486.7L1053.4 486.7M884.9 369.5L884.9 366.9L884.9 372.5L879.9 372.5M905.1 422.1L905.1 420.0L905.1 418.5L908.2 418.5L908.2 412.9L911.7 412.9L911.7 407.3L916.5 407.3M773.4 342.5L773.4 338.3L767.8 338.3L773.6 338.3L773.6 342.4M771.4 364.5L774.6 364.5L774.6 360.2L779.9 360.2L779.9 355.9L783.2 355.9L779.5 355.9L779.5 353.0M901.3 556.2L901.3 551.3L895.6 551.3L892.3 551.3L892.3 547.9M837.6 546.2L837.6 551.7L842.5 551.7L842.5 549.8L839.3 549.8M960.2 455.3L960.2 449.9L956.6 449.9L956.6 455.2L954.1 455.2L957.9 455.2L957.9 457.8L954.5 457.8L954.5 463.4M894.7 514.8L894.7 517.9L892.7 517.9L892.7 523.1M1075.0 524.0L1075.0 521.7L1075.0 526.0L1069.6 526.0L1069.6 523.7L1065.4 523.7L1065.4 528.7L1065.4 526.9L1067.8 526.9M1153.6 366.4L1153.6 361.7L1155.6 361.7L1155.6 367.0L1152.1 367.0L1152.1 361.9L1150.0 361.9L1145.9 361.9L1145.9 366.8M854.5 607.1L856.9 607.1L862.4 607.1L862.4 604.5M940.7 537.1L935.3 537.1L930.3 537.1L930.3 541.2L928.1 541.2L929.8 541.2L932.1 541.2L927.3 541.2M911.7 434.2L911.7 430.0L905.7 430.0L900.0 430.0M1163.4 503.7L1158.6 503.7L1158.6 509.1L1162.0 509.1M921.5 350.9L927.4 350.9L923.7 350.9L923.7 347.9L923.7 352.9L923.7 350.9L922.2 350.9M1106.0 356.4L1106.0 354.6L1108.8 354.6L1108.8 356.6L1111.4 356.6L1111.4 351.5L1111.4 345.8M928.9 359.4L934.3 359.4L930.3 359.4L930.3 361.8L928.7 361.8L924.7 361.8M1064.4 351.4L1065.9 351.4L1065.9 356.5L1064.4 356.5L1064.4 359.2M864.9 450.0L864.9 452.3L869.6 452.3L869.6 449.5L873.9 449.5L873.9 445.7L870.1 445.7L870.1 450.0L867.2 450.0M1057.6 539.6L1057.6 536.9L1057.6 539.3L1055.7 539.3L1055.7 534.9L1051.3 534.9L1051.3 538.8L1051.3 537.0M977.6 422.7L979.9 422.7L979.9 426.1L976.3 426.1M1098.6 532.2L1101.9 532.2L1101.9 535.3L1098.0 535.3L1098.0 532.0L1100.7 532.0L1100.7 529.5L1095.7 529.5L1095.7 532.2M1123.3 339.6L1123.3 345.3L1127.0 345.3L1130.8 345.3M1025.0 454.7L1025.0 451.2L1028.2 451.2L1028.2 448.3L1023.2 448.3M964.9 405.7L960.6 405.7L960.6 402.4L960.6 400.1L965.0 400.1M862.2 550.1L865.2 550.1L865.2 547.6L870.6 547.6L870.6 550.1L872.4 550.1L872.4 554.6L869.9 554.6L869.9 557.0M1061.9 467.1L1064.2 467.1L1069.5 467.1L1072.3 467.1L1072.3 465.1L1066.7 465.1L1066.7 468.7L1066.7 466.5L1063.8 466.5M885.3 332.1L885.3 335.3L882.2 335.3L879.1 335.3M1044.8 456.9L1043.1 456.9L1048.2 456.9L1053.6 456.9L1053.6 459.2L1051.3 459.2L1051.3 461.4L1051.3 457.3M875.6 428.8L872.6 428.8L875.7 428.8L875.7 422.9L879.1 422.9L873.7 422.9L873.7 419.8L873.7 421.4M872.2 330.4L874.5 330.4L874.5 326.3L868.8 326.3L868.8 321.4L868.8 315.5L872.0 315.5L872.0 310.5M817.2 558.9L817.2 555.0L813.2 555.0L813.2 560.5L817.1 560.5L817.1 563.1L821.2 563.1L821.2 568.5L815.4 568.5M877.4 437.6L872.4 437.6L872.4 432.4L872.4 434.5L878.3 434.5M1065.0 327.7L1065.0 322.7L1069.6 322.7L1072.8 322.7L1072.8 328.5L1071.2 328.5L1066.2 328.5L1066.2 326.7M778.9 452.4L778.9 456.3L778.9 460.1L778.9 458.6L773.5 458.6L773.5 464.4L773.5 466.8M735.1 445.6L740.9 445.6L740.9 443.3L736.1 443.3L736.1 448.8L738.5 448.8L738.5 445.9L738.5 444.1M918.2 322.0L916.1 322.0L916.1 325.1L918.7 325.1L918.7 329.3L916.7 329.3L916.7 325.1L921.0 325.1L923.3 325.1M826.8 523.0L826.8 525.5L824.5 525.5L824.5 529.4L828.9 529.4M857.4 559.8L857.4 556.5L851.5 556.5L851.5 552.0L851.5 555.8M807.7 573.4L803.1 573.4L803.1 579.3L808.3 579.3L808.3 574.1L811.5 574.1L811.5 576.5L811.5 580.9L811.5 579.1M985.3 563.8L985.3 561.8L985.3 564.4L982.3 564.4L982.3 562.2L987.1 562.2M1047.0 462.7L1043.9 462.7L1038.3 462.7L1038.3 465.8M896.0 343.8L896.0 338.7L896.0 337.0L896.0 339.7L898.7 339.7L898.7 335.0M1153.4 487.7L1153.4 491.0L1151.9 491.0L1151.9 493.7L1151.9 497.7L1155.2 497.7L1155.2 495.1M1027.7 393.4L1024.3 393.4L1024.3 390.3L1027.5 390.3L1027.5 388.3L1025.4 388.3L1025.4 383.5M915.8 499.4L920.9 499.4L920.9 494.0L920.9 497.4L924.8 497.4L928.8 497.4L928.8 492.6M963.3 398.4L967.0 398.4L967.0 401.1L969.0 401.1M839.2 411.8L841.2 411.8L844.2 411.8L844.2 408.8M1017.6 533.4L1017.6 538.5L1021.5 538.5L1021.5 535.6M857.5 605.9L852.8 605.9L852.8 602.0L854.4 602.0L854.4 605.3M863.4 499.5L865.9 499.5L865.9 504.6L865.9 506.7L863.5 506.7M864.9 497.2L864.9 501.2L869.1 501.2L869.1 495.4M821.3 397.2L826.1 397.2L828.8 397.2L826.5 397.2L826.5 402.4L826.5 405.1L826.5 408.6L824.5 408.6M774.1 552.1L779.2 552.1L779.2 557.2L782.4 557.2L782.4 561.7L782.4 567.7M877.9 508.9L879.9 508.9L882.9 508.9L882.9 514.6L878.7 514.6M1095.2 322.2L1095.2 317.1L1090.5 317.1L1090.5 314.8L1086.2 314.8L1086.2 317.9L1086.2 322.8L1086.2 317.5L1090.3 317.5M755.1 592.6L755.1 594.6L758.7 594.6L758.7 592.7L752.7 592.7L752.7 588.1L756.4 588.1M1035.2 332.1L1033.3 332.1L1033.3 337.0L1033.3 339.4L1029.9 339.4L1029.9 336.8M1073.1 425.6L1076.4 425.6L1076.4 421.7L1082.2 421.7L1082.2 425.3L1086.2 425.3L1086.2 430.4L1083.4 430.4L1083.4 425.3M803.9 492.8L803.9 490.3L803.9 493.9L799.5 493.9L799.5 488.5L795.7 488.5L793.9 488.5L789.2 488.5M778.6 521.6L778.6 523.6L773.7 523.6L773.7 518.2L769.8 518.2M774.2 468.2L770.1 468.2L770.1 463.2L775.0 463.2L775.0 465.8L775.0 463.1M860.6 529.3L856.0 529.3L856.0 527.7L858.9 527.7L858.9 522.5M813.9 365.1L811.8 365.1L811.8 363.2L807.2 363.2L807.2 365.6M1037.7 426.4L1037.7 427.9L1034.2 427.9L1034.2 423.6L1039.9 423.6L1039.9 428.7M992.7 611.5L997.9 611.5L996.0 611.5L996.0 617.1M870.7 610.6L870.7 607.7L865.5 607.7L861.8 607.7L861.8 604.0L856.8 604.0L856.8 598.8L853.0 598.8L853.0 594.9M1103.2 453.2L1106.8 453.2L1106.8 448.7L1101.3 448.7L1106.7 448.7L1103.6 448.7L1099.2 448.7L1099.2 451.9M886.3 603.6L886.3 607.2L886.3 608.8L886.3 607.1L888.4 607.1L888.4 611.5M1158.9 421.2L1161.6 421.2L1164.2 421.2L1164.2 425.1L1166.0 425.1L1171.4 425.1L1171.4 422.0L1175.2 422.0M797.5 549.8L797.5 552.8L800.6 552.8L798.2 552.8L798.2 549.0L798.2 544.2L801.9 544.2L796.6 544.2M851.8 393.1L851.8 399.1L854.6 399.1L854.6 397.4M812.4 571.0L807.6 571.0L807.6 567.5L807.6 570.5L811.1 570.5L811.1 573.4L815.4 573.4L815.4 569.0M794.4 403.6L794.4 405.1L790.0 405.1L790.0 403.0L794.8 403.0L794.8 400.1L794.8 403.4L800.4 403.4L800.4 401.5M1094.7 454.5L1094.7 456.5L1094.7 454.7L1090.6 454.7M772.2 560.4L773.7 560.4L777.9 560.4L781.7 560.4M840.6 406.9L844.1 406.9L844.1 410.7L842.2 410.7L842.2 415.3L844.9 415.3L839.5 415.3L839.5 412.6L844.7 412.6M1153.5 583.5L1153.5 585.0L1150.0 585.0L1150.0 580.7L1146.1 580.7L1149.5 580.7L1149.5 584.7L1152.8 584.7L1149.0 584.7M956.4 331.5L953.2 331.5L953.2 337.4L958.9 337.4L962.8 337.4L962.8 340.4L958.8 340.4L958.8 342.5M772.3 432.0L775.7 432.0L775.7 428.9L771.4 428.9M977.1 469.3L975.0 469.3L969.3 469.3L969.3 471.4L964.0 471.4L964.0 467.9L967.2 467.9L967.2 472.5L970.4 472.5M964.6 417.9L964.6 414.6L964.6 411.7L958.8 411.7L958.8 415.1M962.9 581.4L964.6 581.4L959.6 581.4L959.6 585.0L959.6 579.6L959.6 574.3L964.1 574.3L964.1 571.8M1118.6 332.9L1118.6 337.6L1121.2 337.6L1121.2 333.9L1122.8 333.9L1122.8 331.4L1122.8 326.0L1126.1 326.0M923.2 549.2L920.9 549.2L920.9 546.4L916.8 546.4L916.8 540.7M922.3 508.0L917.6 508.0L913.6 508.0L913.6 504.2L913.6 510.0L916.2 510.0L916.2 507.0M1062.4 478.3L1067.0 478.3L1067.0 472.8L1067.0 474.8L1067.0 476.5L1065.4 476.5M995.9 415.7L1001.8 415.7L996.5 415.7L999.5 415.7L999.5 410.6L1004.1 410.6L999.3 410.6L999.3 415.5M1062.2 338.8L1058.6 338.8L1063.8 338.8L1065.6 338.8L1067.6 338.8L1069.2 338.8L1072.0 338.8M865.6 584.4L865.6 590.2L870.4 590.2L870.4 585.4L870.4 581.3M779.5 385.0L779.5 391.0L776.4 391.0L776.4 385.9L772.8 385.9L778.0 385.9L778.0 379.9L778.0 374.7L778.0 380.7M751.2 392.2L751.2 395.9L756.3 395.9L756.3 391.6L759.4 391.6L759.4 393.2L764.2 393.2M940.2 585.8L940.2 583.1L944.2 583.1L950.1 583.1L948.3 583.1L948.3 587.6M1087.3 333.2L1087.3 336.0L1082.7 336.0L1082.7 341.3L1086.7 341.3L1086.7 345.7L1090.2 345.7L1090.2 349.9L1086.9 349.9M953.7 500.3L953.7 505.2L948.5 505.2L944.2 505.2L942.0 505.2L942.0 503.2L946.8 503.2M1150.5 357.6L1144.8 357.6L1140.4 357.6L1138.0 357.6L1138.0 355.6L1138.0 352.5M1131.4 321.4L1131.4 318.9L1131.4 320.8L1126.9 320.8L1126.9 322.8L1130.6 322.8L1130.6 324.8M1043.4 551.3L1043.4 555.9L1047.3 555.9L1047.3 552.9M1155.2 393.5L1155.2 398.8L1153.6 398.8L1150.5 398.8L1150.5 403.7M974.5 557.9L976.5 557.9L976.5 562.4L970.7 562.4L970.7 559.0L970.7 562.8L973.8 562.8M893.4 334.1L893.4 337.1L889.7 337.1L889.7 338.7M1070.5 564.1L1074.8 564.1L1077.5 564.1L1077.5 560.5L1077.5 564.4L1082.6 564.4L1076.8 564.4L1079.5 564.4L1079.5 566.7M774.4 534.3L770.5 534.3L770.5 530.0L773.6 530.0L773.6 527.4L768.0 527.4L768.0 525.6M950.3 579.4L944.9 579.4L944.9 575.4L944.9 578.6L939.8 578.6L939.8 574.4M1147.4 576.3L1142.7 576.3L1142.7 572.3L1137.3 572.3L1137.3 569.7L1131.9 569.7L1131.9 566.1M1081.7 586.5L1081.7 584.3L1081.7 586.3L1087.6 586.3M1082.0 528.2L1082.0 530.1L1078.0 530.1L1083.7 530.1L1085.9 530.1L1083.9 530.1L1083.9 533.5L1083.9 528.3M1019.4 385.9L1024.9 385.9L1024.9 388.9L1021.6 388.9L1017.4 388.9L1017.4 393.7L1012.9 393.7L1012.9 390.0M854.1 551.5L848.2 551.5L848.2 549.8L846.6 549.8L851.9 549.8L851.9 553.6M952.8 388.9L955.6 388.9L951.3 388.9L953.0 388.9L953.0 385.6M925.8 525.1L925.8 528.8L923.1 528.8L923.1 532.9L923.1 538.3L927.5 538.3L927.5 543.8L925.7 543.8M788.5 366.0L788.5 368.2L788.5 365.7L793.6 365.7L793.6 370.7L793.6 366.9L797.1 366.9M832.4 420.6L827.9 420.6L827.9 415.1L824.4 415.1M769.1 438.8L769.1 435.3L769.1 437.4L773.3 437.4L773.3 432.4M1023.7 490.8L1017.7 490.8L1017.7 486.7L1015.9 486.7L1015.9 485.0L1011.6 485.0M1003.1 505.1L997.4 505.1L997.4 501.6L993.3 501.6L993.3 499.0L988.1 499.0M815.1 555.9L812.0 555.9L812.0 557.9L816.2 557.9L816.2 556.0L817.9 556.0M903.2 490.1L903.2 485.2L900.4 485.2L900.4 487.5L904.4 487.5L904.4 484.2L908.0 484.2L908.0 481.1L911.3 481.1M1044.7 383.6L1041.3 383.6L1041.3 378.4L1037.4 378.4L1037.4 376.7L1040.0 376.7M922.0 468.9L922.0 471.3L916.3 471.3L916.3 467.2L914.8 467.2L919.7 467.2L919.7 473.1M1045.9 561.1L1041.8 561.1L1036.2 561.1L1036.2 564.4L1036.2 568.8M903.4 369.3L903.4 366.1L901.1 366.1L903.4 366.1L907.9 366.1L907.9 360.8L907.9 362.8M1007.2 504.4L1007.2 500.1L1005.3 500.1L1005.3 494.1M1092.7 357.2L1092.7 354.9L1087.6 354.9L1087.6 352.7M1162.7 364.1L1162.7 360.9L1167.8 360.9L1171.7 360.9L1168.7 360.9L1173.0 360.9L1169.6 360.9L1169.6 363.4M1068.5 515.5L1068.5 510.6L1071.7 510.6L1071.7 514.4L1071.7 512.1L1075.5 512.1M859.7 534.1L862.0 534.1L862.0 538.9L856.4 538.9L856.4 535.4L854.8 535.4L859.2 535.4L859.2 539.6L865.2 539.6M768.3 466.6L768.3 470.8L770.0 470.8L773.9 470.8L773.9 467.0L770.6 467.0L770.6 461.8L773.5 461.8L773.5 458.2M918.0 408.5L918.0 403.0L915.4 403.0L915.4 406.2L915.4 409.5L915.4 413.3L912.8 413.3M826.2 349.9L820.6 349.9L820.6 354.4L820.6 358.9L817.6 358.9L817.6 360.7M1052.7 558.8L1047.0 558.8L1048.6 558.8L1045.6 558.8L1045.6 563.8L1047.3 563.8L1047.3 559.3L1052.8 559.3M1147.0 488.2L1147.0 489.7L1141.6 489.7L1141.6 495.5L1146.2 495.5L1146.2 497.5M1048.0 507.2L1048.0 512.5L1045.4 512.5L1045.4 509.5L1051.1 509.5L1054.2 509.5M1055.0 425.7L1056.6 425.7L1056.6 420.1L1056.6 416.2L1056.6 413.7L1056.6 419.2L1056.6 415.4L1056.6 417.1M1145.9 545.5L1142.8 545.5L1142.8 549.1L1142.8 543.8M779.5 485.6L779.5 489.3L773.9 489.3L773.9 484.3L778.0 484.3L775.3 484.3L775.3 488.6M872.8 386.0L877.3 386.0L877.3 390.7L873.9 390.7L869.6 390.7L869.6 387.2L866.8 387.2M767.6 548.2L767.6 549.8L767.6 547.9L765.1 547.9M1105.3 571.1L1105.3 567.8L1105.3 570.3L1105.3 568.5L1105.3 570.5L1102.8 570.5M821.6 580.0L821.6 585.3L816.0 585.3L816.0 583.0L816.0 586.3L810.1 586.3M963.4 454.5L963.4 456.8L963.4 460.4L963.4 456.0L963.4 452.3L957.9 452.3L957.9 449.4M756.2 518.2L753.6 518.2L753.6 521.4L755.5 521.4L755.5 516.0M1083.9 513.3L1086.0 513.3L1086.0 515.9L1086.0 521.1L1084.4 521.1M1085.4 423.5L1085.4 421.6L1090.6 421.6L1090.6 427.4L1087.1 427.4L1087.1 429.2L1090.4 429.2L1092.0 429.2M1066.3 587.1L1066.3 591.7L1066.3 596.5L1071.5 596.5L1071.5 601.1L1068.7 601.1L1068.7 607.0L1068.7 612.1L1065.9 612.1M861.2 332.3L856.4 332.3L856.4 336.9L854.2 336.9L850.4 336.9L850.4 342.5L855.2 342.5L855.2 348.2M750.3 564.3L750.3 569.2L753.9 569.2L753.9 564.4L753.9 567.7L751.2 567.7L751.2 570.0L751.2 572.5M1135.8 370.7L1129.8 370.7L1129.8 376.0L1124.1 376.0M803.4 407.7L798.3 407.7L798.3 402.4L800.4 402.4L800.4 397.2L797.7 397.2L794.6 397.2L790.6 397.2M819.6 556.7L819.6 554.6L816.5 554.6L816.5 560.4L812.9 560.4L812.9 556.7L807.7 556.7L802.2 556.7L798.5 556.7M927.9 607.9L931.1 607.9L936.0 607.9L930.4 607.9L927.5 607.9L927.5 613.7L925.5 613.7L921.0 613.7M1063.5 537.8L1068.4 537.8L1066.3 537.8L1063.9 537.8M794.6 527.9L794.6 522.3L792.8 522.3L792.8 527.2L792.8 523.1L795.2 523.1L795.2 520.2M1030.3 457.4L1030.3 460.3L1033.5 460.3L1035.5 460.3L1035.5 455.6M920.8 386.2L920.8 381.7L917.5 381.7L917.5 376.1L911.6 376.1L911.6 372.0L911.6 376.5L909.8 376.5M928.6 578.7L928.6 582.3L923.1 582.3L923.1 579.0M856.9 373.1L856.9 377.7L861.8 377.7L858.8 377.7M1051.9 425.7L1051.9 427.7L1054.3 427.7L1059.4 427.7L1059.4 424.3L1063.9 424.3L1063.9 428.2M786.6 484.5L786.6 479.5L786.6 477.0L780.6 477.0L780.6 475.2L783.3 475.2L783.3 470.8M832.2 412.8L832.2 414.7L834.9 414.7L834.9 418.2L838.4 418.2M1135.4 413.5L1135.4 409.4L1132.1 409.4L1132.1 412.0L1126.7 412.0L1126.7 415.2M1073.8 474.0L1073.8 470.4L1070.4 470.4L1070.4 468.8L1070.4 471.2M1129.8 493.3L1129.8 496.5L1134.7 496.5L1138.1 496.5L1138.1 494.1L1133.2 494.1L1133.2 498.0L1131.2 498.0L1131.2 501.3M939.7 512.1L939.7 507.0L945.1 507.0L950.1 507.0L950.1 503.7L947.4 503.7L942.7 503.7L942.7 500.3M1121.5 497.0L1121.5 498.9L1127.2 498.9L1127.2 496.2L1122.5 496.2L1122.5 491.1L1122.5 486.2L1118.4 486.2M1159.6 556.5L1163.8 556.5L1163.8 560.3L1161.0 560.3L1161.0 557.6M801.0 388.3L801.0 393.8L803.9 393.8L798.0 393.8L798.0 388.9M1006.8 531.1L1006.8 535.1L1008.9 535.1L1008.9 540.0L1002.9 540.0L1002.9 544.5M750.9 351.0L754.4 351.0L752.7 351.0L752.7 355.5L748.9 355.5L751.2 355.5L748.9 355.5L748.9 353.3L751.0 353.3M947.6 413.7L952.3 413.7L952.3 417.1L955.9 417.1L959.7 417.1M973.9 344.0L973.9 339.6L970.7 339.6L965.6 339.6L969.1 339.6L969.1 341.3L969.1 346.9L972.3 346.9M933.0 541.5L933.0 538.2L933.0 542.1L930.4 542.1M1053.0 607.4L1050.8 607.4L1047.8 607.4L1047.8 611.7L1047.8 615.0L1042.5 615.0L1042.5 617.5L1036.5 617.5M1043.5 517.2L1043.5 515.7L1046.5 515.7L1046.5 518.0L1051.8 518.0M843.3 496.4L843.3 491.1L837.6 491.1L837.6 488.3L841.2 488.3L839.5 488.3L843.8 488.3M1051.8 327.2L1051.8 333.1L1051.8 338.1L1051.8 340.1L1055.5 340.1L1055.5 337.6L1055.5 343.5L1055.5 339.2L1050.1 339.2M818.8 441.9L818.8 446.5L814.2 446.5L814.2 451.0L814.2 453.0L815.8 453.0L815.8 449.1M820.7 474.4L820.7 471.9L816.0 471.9L816.0 475.0L812.2 475.0L816.1 475.0L816.1 473.3M774.9 438.4L779.8 438.4L779.8 443.4L777.5 443.4L777.5 445.0L779.5 445.0L779.5 440.1L776.3 440.1M1164.1 486.4L1164.1 492.4L1162.2 492.4L1160.3 492.4L1160.3 494.9L1160.3 498.2L1154.5 498.2L1154.5 494.6L1151.4 494.6M1032.1 434.3L1029.6 434.3L1032.4 434.3L1032.4 439.9M979.3 509.2L979.3 513.0L973.6 513.0L977.8 513.0L977.8 510.6M1035.8 447.6L1040.2 447.6L1040.2 449.4L1038.1 449.4L1038.1 446.2L1041.1 446.2L1041.1 444.5L1037.8 444.5L1037.8 439.1M789.3 320.5L789.3 317.0L784.3 317.0L787.8 317.0L787.8 314.8L793.5 314.8L793.5 320.6M1084.4 554.3L1090.1 554.3L1090.1 556.3L1090.1 559.9M896.4 544.0L896.4 542.2L898.4 542.2L898.4 547.5L893.7 547.5L893.7 551.4L898.1 551.4L893.4 551.4M758.9 508.5L758.9 506.5L764.5 506.5L764.5 508.3L764.5 502.4M929.3 469.2L933.8 469.2L933.8 471.5L938.3 471.5L942.8 471.5M892.6 408.2L887.2 408.2L888.8 408.2L888.8 410.2L887.0 410.2L887.0 407.0L890.8 407.0L896.3 407.0L896.3 404.4M950.5 570.8L956.3 570.8L956.3 565.5L956.3 569.1L959.6 569.1M882.1 395.9L888.0 395.9L888.0 390.8L885.4 390.8M889.7 503.2L889.7 506.6L894.7 506.6L894.7 512.5L894.7 506.7M738.5 589.8L738.5 593.0L735.6 593.0L733.2 593.0M832.1 534.6L832.1 528.7L829.8 528.7L825.2 528.7M1156.6 385.8L1156.6 389.7L1151.5 389.7L1151.5 387.1L1156.4 387.1L1156.4 389.0L1157.9 389.0L1157.9 386.1M1022.5 411.4L1022.5 406.4L1016.6 406.4L1019.7 406.4L1019.7 408.0L1013.8 408.0L1013.8 402.9M1006.1 533.2L1006.1 539.0L1010.6 539.0L1010.6 542.0M741.2 409.2L746.3 409.2L746.3 413.4L748.7 413.4L752.4 413.4L757.2 413.4L757.2 415.2M1029.4 480.3L1029.4 484.1L1035.0 484.1L1038.5 484.1L1038.5 488.1L1038.5 485.6L1038.5 483.0L1032.5 483.0M825.5 452.5L823.4 452.5L823.4 457.0L824.9 457.0L824.9 453.1L822.6 453.1L822.6 455.1L822.6 458.3L827.4 458.3M993.0 322.3L993.0 317.8L999.0 317.8L999.0 314.2M951.5 390.0L951.5 393.7L951.5 389.9L951.5 384.9L956.7 384.9L956.7 389.7L953.5 389.7L953.5 393.4L958.1 393.4" fill="none" stroke="#d4e1f2" stroke-width="0.6" opacity="0.8"/><path d="M1021.6 598.1L1023.6 594.6L1025.4 591.0L1027.0 587.4L1029.8 584.5L1032.3 581.4L1034.6 578.2L1038.0 576.0L1040.2 572.7L1042.5 569.4L1045.7 567.1L1049.0 564.7L1052.5 562.8L1056.3 561.7L1060.3 561.9L1064.3 562.1M743.7 422.4L740.2 420.4L736.9 418.2L734.7 414.9L733.5 411.1L733.2 407.1L731.5 403.4L731.4 399.4L732.1 395.5L731.2 391.6L730.7 387.6M881.2 349.5L882.1 353.3L883.0 357.3L885.3 360.5L887.2 364.0L889.5 367.2L891.7 370.6L895.0 372.9L898.7 374.5L902.7 374.9L906.6 375.3L910.6 375.9L914.6 375.8L918.3 374.4L922.2 373.5L926.0 372.2L930.0 371.8L933.9 370.7L937.5 369.1L941.1 367.4L944.7 365.6M965.0 528.8L968.5 530.7L972.4 531.3L975.9 533.2L978.6 536.2L981.6 538.9L983.1 542.6L984.8 546.2L986.3 550.0M1021.3 516.2L1023.1 519.7L1026.1 522.4L1029.0 525.2L1032.0 527.8L1033.8 531.4L1034.0 535.4L1034.6 539.3L1036.4 542.9L1036.7 546.9L1038.5 550.5L1041.4 553.1L1044.6 555.6L1048.4 556.8L1052.0 558.5L1055.0 561.2L1058.8 562.3L1062.4 564.2L1066.0 566.0M853.2 345.1L855.6 348.4L857.8 351.7L861.0 354.1L863.3 357.4L866.6 359.6L869.6 362.2L873.0 364.4L876.9 365.1M1024.9 544.7L1022.0 541.9L1018.5 540.1L1015.4 537.4L1011.9 535.5L1008.5 533.4L1004.9 531.8L1001.1 530.3L998.1 527.7L995.0 525.2L993.0 521.7L991.9 517.9L989.5 514.7L988.1 510.9L987.1 507.1L987.2 503.1L987.8 499.1M1125.9 476.2L1122.9 478.8L1119.9 481.5L1116.7 483.9L1113.0 485.4L1109.2 486.6L1105.4 487.9L1101.6 489.0L1097.7 489.8L1093.7 490.4L1089.9 491.7L1086.6 493.9L1082.7 494.8L1078.7 494.9L1074.8 495.7L1071.5 498.0L1067.6 498.9L1063.7 498.1L1059.7 498.6L1056.3 500.7L1052.6 502.3M940.1 478.5L937.3 481.3L935.1 484.7L931.8 486.9L928.5 489.2L925.1 491.3L921.2 492.2L917.4 493.5L913.7 494.8M1127.5 545.4L1128.7 541.6L1130.2 537.9L1132.3 534.5L1134.7 531.3L1136.9 528.0L1140.1 525.6L1142.1 522.1L1144.5 518.9L1146.7 515.6L1148.4 512.0L1150.1 508.4L1152.4 505.1L1154.0 501.4L1154.6 497.5L1154.6 493.5L1152.9 489.8M856.8 321.5L858.5 325.2L861.0 328.2L863.6 331.3L866.0 334.5L868.0 338.0L871.2 340.3L875.0 341.8L878.7 343.3M991.7 419.4L991.2 423.3L991.4 427.3L991.9 431.3L991.1 435.2L989.1 438.7L988.2 442.6L987.0 446.4L986.7 450.4M1063.2 486.9L1062.1 490.7L1060.0 494.1L1058.5 497.8L1058.0 501.8L1057.5 505.8L1055.6 509.2L1052.6 512.0L1049.0 513.6L1045.1 514.7L1041.2 514.4L1037.2 514.8L1033.4 513.5L1029.7 512.1L1026.6 509.5L1023.3 507.2L1019.4 506.3L1015.4 506.7L1011.5 506.1M929.2 449.2L928.6 445.2L927.7 441.3L926.8 437.4L927.1 433.4L927.5 429.5L928.5 425.6L929.7 421.8L929.3 417.8L928.5 413.9L926.3 410.5L923.2 408.1L919.6 406.3L916.3 404.0L912.6 402.4M868.1 522.3L864.2 523.4L860.2 523.8L856.2 523.9L852.3 523.6L848.3 524.5L844.9 526.5L841.3 528.2L837.3 528.3L833.4 529.4L830.3 531.9L826.7 533.7L823.0 535.2L819.5 537.1L815.9 538.9L812.4 540.8M1148.2 444.9L1152.1 444.0L1156.0 444.5L1160.0 444.0L1163.7 442.6L1167.4 441.0L1171.2 439.7L1174.3 437.2L1177.2 434.5L1180.8 432.7L1184.8 432.4L1188.8 432.2L1192.6 431.0L1196.0 429.0L1200.0 428.5L1204.0 428.4M800.7 613.6L798.8 610.1L796.6 606.7L795.6 602.9L796.3 598.9L798.3 595.4L798.7 591.5L798.3 587.5L797.8 583.5L798.1 579.5M1090.9 394.4L1092.1 398.2L1091.6 402.2L1091.6 406.2L1092.8 410.0L1093.0 414.0L1094.2 417.8L1094.5 421.8L1095.0 425.8L1096.0 429.6L1096.6 433.6L1095.7 437.5L1093.7 441.0L1090.9 443.8M972.7 607.1L969.5 604.6L966.0 602.7L963.4 599.6L962.1 595.8L960.8 592.1L960.1 588.1L960.8 584.2L960.7 580.2L961.6 576.3L962.1 572.3L963.5 568.6L965.8 565.3L969.2 563.2L972.3 560.7M1022.7 419.0L1025.9 416.7L1029.8 415.8L1033.1 413.5L1035.5 410.3L1038.7 408.0L1042.6 407.1L1046.6 406.9L1050.6 406.5L1054.4 407.7L1058.4 408.3L1062.2 409.5M745.1 403.0L741.1 403.2L737.1 403.2L733.1 402.8L729.1 402.9L725.2 401.9L721.3 401.0L717.4 400.6L713.8 398.8L710.3 396.9L706.4 395.9L702.7 394.4L698.8 393.7L694.9 392.8L690.9 393.4L687.5 395.6L684.6 398.3L680.8 399.5L677.7 402.1M1124.4 417.9L1128.1 419.5L1131.6 421.4L1134.5 424.2L1136.8 427.4L1137.7 431.3L1138.9 435.1L1140.2 438.9L1142.7 442.0L1145.1 445.2L1146.8 448.8L1148.4 452.5L1151.2 455.3L1154.5 457.6L1156.9 460.8L1158.1 464.6L1157.6 468.6M847.6 454.1L849.9 450.8L852.1 447.4L854.7 444.4L857.9 442.0L860.6 439.0L863.8 436.7L867.7 435.9L871.2 433.8L875.1 433.3L879.1 432.9L882.7 431.1L885.6 428.4L887.6 424.9L890.3 422.0L892.7 418.8L895.9 416.3L899.1 414.0L902.9 412.7L906.0 410.1L908.6 407.1M914.0 423.6L912.8 427.4L911.1 431.0L911.1 435.0L910.9 439.0L909.8 442.9L909.7 446.9L909.8 450.9L908.4 454.6L906.3 458.0L902.9 460.1M1086.6 361.4L1090.5 362.0L1094.0 363.9L1097.5 365.8L1101.3 367.1L1105.2 368.1L1109.1 367.5L1112.8 365.9L1116.6 364.7L1120.4 363.5M808.6 597.0L810.8 600.3L812.6 603.9L815.4 606.8L818.4 609.4L820.6 612.7L822.2 616.4L824.7 619.5L825.7 623.4L826.0 627.4L827.1 631.2L827.8 635.2L829.4 638.8L829.9 642.8L829.1 646.7M813.9 412.4L817.9 412.8L821.8 413.7L825.7 414.6L829.0 416.8L832.8 418.1L836.7 418.0L840.5 416.6L844.4 415.9L848.1 414.4L852.0 413.3L856.0 413.8L860.0 413.5L863.6 411.8M846.8 548.2L842.8 549.0L838.9 548.1L835.1 547.0L831.1 546.4L827.8 544.2L824.6 541.7L821.0 540.1L817.1 539.0L813.7 536.9L811.3 533.7L809.5 530.1L807.5 526.6L806.2 522.9L803.7 519.8L800.2 517.7L797.2 515.1L794.9 511.8L792.9 508.4M904.2 609.6L907.0 612.4L909.9 615.2L912.5 618.2L915.7 620.6L919.6 621.7L923.4 623.0L927.3 623.7L930.6 626.0L933.1 629.1L934.9 632.7L936.7 636.3L939.1 639.4L940.7 643.1L941.3 647.0L941.1 651.0L940.5 655.0L940.6 659.0L940.8 663.0L940.8 667.0L940.1 670.9M956.0 356.4L959.5 354.5L962.0 351.4L965.4 349.3L969.3 348.2L973.3 348.4L977.2 347.5L981.2 347.8L984.9 349.1L988.3 351.2L992.1 352.5L995.2 355.0M965.1 549.2L963.1 552.7L960.1 555.3L957.2 558.1L954.4 560.9L951.1 563.2L947.4 564.6L943.4 564.5L939.4 564.6L935.5 563.8L931.5 564.4L927.6 565.2L924.1 567.1L920.2 568.1L916.9 570.4M945.8 426.2L943.9 429.7L941.7 433.1L938.8 435.8L935.5 438.0L932.0 440.0L928.2 441.2L924.2 441.7L920.6 443.5L917.8 446.3M1111.1 352.9L1110.9 356.9L1111.5 360.9L1112.5 364.8L1113.3 368.7L1115.2 372.2L1118.3 374.7L1120.1 378.3L1123.0 381.0L1126.7 382.5L1130.4 384.1L1133.3 386.9L1137.0 388.3L1139.9 391.1L1141.8 394.6L1144.9 397.2L1147.4 400.3L1149.7 403.6L1151.4 407.2L1153.9 410.3L1157.2 412.6M1144.1 352.6L1143.5 356.6L1144.5 360.4L1146.6 363.9L1148.2 367.5L1148.1 371.5L1147.4 375.5L1146.1 379.3L1144.2 382.8L1143.2 386.6L1142.5 390.6L1142.8 394.6L1143.0 398.6M1136.9 406.0L1140.9 405.9L1144.8 405.1L1148.4 403.3L1151.7 401.1L1153.9 397.8L1156.6 394.8L1159.8 392.4L1162.5 389.4L1166.1 387.8L1170.0 387.0M784.0 607.0L785.9 610.5L786.6 614.4L786.4 618.4L784.8 622.1L783.4 625.8L782.9 629.8L782.6 633.8L783.1 637.8L785.0 641.3L787.9 644.0L790.3 647.2L791.6 651.0M1083.4 554.1L1086.8 552.1L1090.2 550.0L1093.9 548.3L1097.0 545.8L1098.8 542.3L1101.7 539.5L1104.0 536.2L1105.0 532.3L1104.8 528.3L1103.8 524.5L1101.6 521.1L1099.0 518.1L1097.8 514.3M899.7 513.8L901.9 510.5L905.1 508.0L908.6 506.1L912.5 505.1L916.0 503.3L919.4 501.1L922.4 498.5L926.2 497.3L930.2 497.2L934.2 497.2L938.2 497.1L941.8 495.3L945.3 493.3M1058.4 456.5L1059.7 460.3L1060.0 464.3L1061.3 468.0L1061.5 472.0L1061.2 476.0L1060.8 480.0L1060.3 484.0L1059.2 487.8L1058.9 491.8L1057.8 495.7L1058.1 499.6L1057.1 503.5M740.8 368.9L736.8 368.9L733.2 367.2L729.3 366.0L725.4 366.4L721.5 367.3L717.9 369.0L714.1 370.5L710.2 370.3L706.3 369.4L702.3 370.0L698.5 371.2L694.6 372.1L690.6 371.6L686.6 371.3L682.7 371.9L678.8 370.8M1121.8 527.0L1121.2 531.0L1119.1 534.4L1116.4 537.4L1114.1 540.6L1111.5 543.7L1109.8 547.3L1107.5 550.6L1104.3 552.9L1100.4 553.8L1096.4 553.6L1092.4 554.3L1088.6 555.3L1084.6 555.7L1080.7 556.6L1076.7 556.7L1072.9 555.4L1069.8 552.9L1067.4 549.7L1065.5 546.1M954.5 499.4L956.6 495.9L958.5 492.5L960.4 488.9L961.0 485.0L962.1 481.1L963.3 477.3L963.9 473.4L963.1 469.5L962.7 465.5L963.1 461.5L962.3 457.6L960.7 453.9L960.4 449.9L960.1 445.9L960.8 442.0L959.8 438.1L959.1 434.2L958.5 430.2M1157.3 520.9L1156.4 524.8L1155.6 528.7L1156.1 532.6L1155.2 536.5L1155.0 540.5L1156.3 544.3L1157.4 548.2L1159.2 551.7L1161.8 554.8L1164.2 558.0L1167.1 560.7L1170.3 563.1L1173.8 565.1L1176.1 568.4L1178.2 571.8L1179.7 575.5L1180.9 579.3L1181.6 583.3L1181.4 587.3L1182.9 591.0M974.1 448.7L973.0 452.6L972.3 456.5L972.7 460.5L973.6 464.4L975.3 468.1L976.8 471.8L979.0 475.1L980.5 478.8L981.4 482.7L981.5 486.7M761.0 426.5L763.2 423.1L766.3 420.6L770.1 419.4L773.8 417.9L777.7 417.0L781.3 415.3L785.1 414.0L789.1 413.7L793.1 413.5L796.8 415.0L800.8 415.3L804.8 415.4L808.8 415.6L812.8 415.0L816.8 415.4L820.6 416.6L824.6 416.5L828.5 417.0L832.3 418.2L835.7 420.5M980.2 523.3L983.0 520.5L984.4 516.8L987.2 513.8L990.8 512.1L993.7 509.4L995.7 505.9L997.1 502.2L999.1 498.7L1000.0 494.8L1001.5 491.1L1002.1 487.2L1003.7 483.5M820.1 364.0L820.9 360.1L821.8 356.2L821.4 352.2L822.4 348.4L824.9 345.2L828.2 343.0L831.2 340.3L834.6 338.2M1156.9 364.9L1156.2 360.9L1154.7 357.2L1152.6 353.8L1150.2 350.6L1148.4 347.0L1145.3 344.5L1142.6 341.5L1139.4 339.2L1136.3 336.6L1133.7 333.6L1130.6 331.1L1128.7 327.6L1125.7 324.9L1122.1 323.2M1035.0 348.3L1036.2 344.4L1037.7 340.7L1039.5 337.2L1042.5 334.5L1045.4 331.7L1047.4 328.3L1049.2 324.7L1050.9 321.1L1053.9 318.4L1057.4 316.5L1060.9 314.7L1064.2 312.3L1067.9 310.8L1071.8 310.2L1075.8 310.4L1079.6 308.9L1083.6 309.0M1164.0 407.1L1162.4 410.8L1161.6 414.7L1159.8 418.3L1157.6 421.6L1156.0 425.3L1153.7 428.6L1151.2 431.6L1147.7 433.6L1145.2 436.7L1141.8 438.9L1138.0 439.9M1076.6 366.6L1076.2 362.6L1077.0 358.7L1076.3 354.7L1077.0 350.8L1078.3 347.0L1080.3 343.5L1082.4 340.1L1083.7 336.3L1085.4 332.7L1085.7 328.7L1085.9 324.7L1084.5 321.0M860.7 400.4L857.6 397.9L855.0 394.9L853.6 391.1L851.3 387.9L848.8 384.7L847.7 380.9L847.5 376.9L848.7 373.0M880.1 511.2L883.3 508.8L887.2 507.7L891.1 506.8L894.7 505.1L898.1 503.1L901.6 501.2L905.0 498.9L908.7 497.4L912.6 496.6L916.2 495.0L920.2 494.9L924.1 495.8L928.1 495.7L932.0 496.7L935.8 497.9M993.9 337.7L990.0 338.4L986.5 340.4L982.7 341.7L978.8 341.3L974.8 340.8L970.9 341.5L966.9 340.8L962.9 340.4L959.2 341.6L955.2 341.4M761.0 586.7L761.4 582.7L762.4 578.9L762.1 574.9L762.6 570.9L763.7 567.1L765.9 563.7L768.9 561.0L770.8 557.5L773.4 554.4L775.1 550.9L776.7 547.2L779.0 543.9L781.2 540.6L784.0 537.7L787.3 535.4L790.3 532.8L793.0 529.8L794.2 526.0L793.9 522.0M795.6 453.3L799.4 454.5L803.0 456.4L805.7 459.3L808.5 462.2L811.7 464.5L814.0 467.8L817.2 470.2L820.5 472.5L823.3 475.3M851.7 436.6L848.3 434.5L845.1 432.1L841.4 430.6L837.5 429.5L834.4 427.0L831.8 424.0L828.8 421.4L825.9 418.5L824.0 415.0L821.9 411.6L821.0 407.7L820.2 403.8L817.8 400.6L815.1 397.7L812.4 394.7M915.4 474.8L918.5 472.4L922.1 470.5L925.6 468.6L929.3 467.1L933.3 466.9L937.2 467.6L940.6 469.7L942.9 473.0L945.9 475.6L948.4 478.8L951.2 481.7L952.8 485.3L954.3 489.0L955.0 493.0L957.1 496.4L958.4 500.1L960.2 503.7M828.7 366.2L831.9 368.6L835.2 370.8L838.8 372.5L841.5 375.5L843.2 379.1L844.8 382.8L846.6 386.3L848.2 390.0L848.2 394.0L847.3 397.9L847.9 401.9L847.2 405.8M809.3 359.1L813.2 360.0L816.9 361.5L820.9 361.5L824.9 362.2L828.9 362.4L832.4 364.4L835.5 366.9L837.3 370.4L840.3 373.1L844.1 374.3L847.8 375.9L850.8 378.6L853.1 381.8L856.6 383.9L860.3 385.4L863.4 387.9L866.7 390.1M875.6 352.5L875.9 356.5L876.6 360.5L876.2 364.4L874.3 368.0L872.1 371.3L870.0 374.7L868.0 378.2L866.9 382.0L867.0 386.0M811.6 320.6L808.9 323.6L807.6 327.4L805.5 330.7L802.4 333.3L800.3 336.7L797.4 339.5L794.3 342.0L791.0 344.3L787.2 345.5L783.3 346.2L779.9 348.3L776.6 350.6L773.0 352.3L769.2 353.6L765.6 355.3L762.3 357.6L758.5 358.7L754.7 359.9M851.7 323.5L848.3 325.7L845.7 328.7L842.2 330.6L839.2 333.2L836.9 336.6L833.8 339.0L831.0 341.9L829.5 345.6L826.9 348.7M1130.5 497.2L1128.6 493.8L1127.6 489.9L1127.3 485.9L1125.9 482.1L1124.6 478.3L1122.5 475.0L1121.9 471.0L1119.8 467.6L1116.5 465.3M751.7 461.1L755.1 459.1L757.9 456.2L761.5 454.5L765.2 453.0L768.8 451.3L772.8 450.9L776.6 452.1L780.6 451.7L784.6 451.8L788.4 453.0M880.2 566.3L876.3 566.8L872.8 568.7L869.9 571.5L867.1 574.3L864.9 577.7L862.1 580.6L859.9 583.9L858.4 587.6L858.3 591.6L858.1 595.6M830.8 477.2L833.9 474.6L836.5 471.6L839.3 468.8L841.9 465.7L845.4 463.7L848.9 461.8L852.5 460.0L855.3 457.2L858.9 455.4L862.0 452.9M1162.7 337.4L1158.8 337.6L1154.8 337.6L1150.8 337.6L1146.9 338.6L1143.5 340.8L1139.6 341.5L1136.0 343.2L1132.0 343.8L1128.5 345.7M914.8 351.1L917.5 354.1L919.4 357.6L922.3 360.3L926.1 361.6L929.3 363.9L932.2 366.7L935.6 368.8L938.4 371.6L941.8 373.9L944.3 377.0L945.7 380.7L946.6 384.6L947.5 388.5L948.9 392.3L949.8 396.2M1102.4 586.0L1105.7 588.3L1108.0 591.6L1111.0 594.2L1114.0 596.9L1117.2 599.2L1121.1 600.4L1124.1 603.0L1127.9 604.2L1131.1 606.6L1134.5 608.7L1138.4 609.4L1142.3 610.6L1146.3 610.3L1150.2 610.9L1154.2 610.7L1158.0 612.1L1161.1 614.6L1164.8 616.0L1168.3 618.0" fill="none" stroke="#e6eef8" stroke-width="0.8" opacity="0.8"/></g><path d="M812.8 440.0 L846.7 438.6 L872.0 432.0 L875.0 410.0" fill="none" stroke="#0000c8" stroke-width="2.4" stroke-linejoin="round"/><path d="M872.0 432.0 L880.6 437.6 L888.0 449.0 L893.7 466.0 L910.7 484.7 L960.0 501.6 L1003.0 497.0 L1007.0 471.0" fill="none" stroke="#0000c8" stroke-width="2.4" stroke-linejoin="round"/><path d="M1003.0 497.0 L1009.4 486.0 L1034.0 473.5 L1040.4 464.8 L1044.0 456.0 L1056.5 451.2 L1069.0 442.5 L1076.3 441.8 L1098.6 441.3 L1123.3 432.6 L1150.5 434.6" fill="none" stroke="#0000c8" stroke-width="2.4" stroke-linejoin="round"/><path d="M798.7 481.9 L822.2 496.0 L831.6 520.5 L859.9 522.0 L884.3 531.8 L904.5 536.7 L915.8 545.0" fill="none" stroke="#0000c8" stroke-width="2.4" stroke-linejoin="round"/><path d="M855.2 496.0 L859.9 509.0 L884.3 516.7 L891.3 523.5 L912.0 547.0" fill="none" stroke="#0000c8" stroke-width="2.4" stroke-linejoin="round"/><path d="M880.0 548.0 L891.3 549.0 L904.5 556.5 L908.2 565.9 L906.4 576.2 L891.3 590.3 L880.6 591.0 L846.7 576.0" fill="none" stroke="#0000c8" stroke-width="2.4" stroke-linejoin="round"/><path d="M904.5 518.8 L925.2 526.4 L934.6 543.3" fill="none" stroke="#0000c8" stroke-width="2.4" stroke-linejoin="round"/><path d="M927.0 503.8 L936.5 510.4 L947.8 518.8 L955.3 511.3 L981.6 515.0 L991.0 510.4 L1002.3 501.0" fill="none" stroke="#0000c8" stroke-width="2.4" stroke-linejoin="round"/><path d="M917.6 517.0 L936.5 518.8 L949.6 528.2 L962.8 528.2" fill="none" stroke="#0000c8" stroke-width="2.4" stroke-linejoin="round"/><path d="M942.0 547.0 L955.3 537.6 L966.6 528.2 L983.4 514.3 L990.9 509.4 L1003.0 497.0" fill="none" stroke="#0000c8" stroke-width="2.4" stroke-linejoin="round"/><path d="M979.8 533.9 L985.4 558.3" fill="none" stroke="#0000c8" stroke-width="2.4" stroke-linejoin="round"/><path d="M979.8 533.9 L1000.5 545.0 L1000.5 551.8 L1002.3 565.9 L1019.3 590.3" fill="none" stroke="#0000c8" stroke-width="2.4" stroke-linejoin="round"/><path d="M1000.5 551.8 L1024.0 576.2" fill="none" stroke="#0000c8" stroke-width="2.4" stroke-linejoin="round"/><path d="M991.0 510.4 L1000.5 522.6 L995.8 533.0" fill="none" stroke="#0000c8" stroke-width="2.4" stroke-linejoin="round"/><path d="M906.4 576.2 L913.9 596.0 L921.4 614.0" fill="none" stroke="#0000c8" stroke-width="2.4" stroke-linejoin="round"/><path d="M917.6 567.8 L925.2 588.5 L930.8 601.6 L947.8 604.5" fill="none" stroke="#0000c8" stroke-width="2.4" stroke-linejoin="round"/><path d="M926.0 587.5 L942.0 582.8" fill="none" stroke="#0000c8" stroke-width="2.4" stroke-linejoin="round"/><path d="M880.6 591.0 L886.0 601.4 L880.6 614.0" fill="none" stroke="#0000c8" stroke-width="2.4" stroke-linejoin="round"/><path d="M1055.2 365.8 L1056.0 386.8 L1051.5 425.2 L1057.7 430.0 L1066.4 441.3" fill="none" stroke="#0000c8" stroke-width="2.4" stroke-linejoin="round"/><path d="M1064.0 448.7 L1065.0 473.5 L1096.0 463.6 L1120.8 469.8" fill="none" stroke="#0000c8" stroke-width="2.4" stroke-linejoin="round"/><path d="M1031.7 411.6 L1051.5 425.2" fill="none" stroke="#0000c8" stroke-width="2.4" stroke-linejoin="round"/><path d="M1050.3 429.0 L1007.0 445.0 L987.0 438.8 L979.7 434.0 L979.7 419.8" fill="none" stroke="#0000c8" stroke-width="2.4" stroke-linejoin="round"/><path d="M958.0 410.0 L968.0 424.0 L973.0 433.0" fill="none" stroke="#0000c8" stroke-width="2.4" stroke-linejoin="round"/><path d="M1042.8 478.5 L1045.3 498.3 L1056.5 503.2 L1068.8 525.5 L1083.7 542.8 L1102.3 556.4" fill="none" stroke="#0000c8" stroke-width="2.4" stroke-linejoin="round"/><path d="M1025.5 461.0 L1041.6 462.4" fill="none" stroke="#0000c8" stroke-width="2.4" stroke-linejoin="round"/><path d="M1007.0 470.5 L1009.4 486.0" fill="none" stroke="#0000c8" stroke-width="2.4" stroke-linejoin="round"/><path d="M1040.0 349.7 L1051.5 354.7 L1055.2 365.8" fill="none" stroke="#0000c8" stroke-width="2.4" stroke-linejoin="round"/><path d="M793.0 464.0 L822.0 461.0 L843.0 471.5 L861.8 483.0 L899.0 488.5 L914.5 483.0 L916.0 456.5 L910.7 437.6 L899.4 420.7 L892.0 408.0" fill="none" stroke="#f00" stroke-width="2.4" stroke-linejoin="round"/><path d="M861.8 484.0 L871.0 509.0 L891.3 515.0 L900.7 526.4 L910.0 530.0 L919.5 545.0 L925.2 547.0 L936.5 548.0 L940.2 558.3 L926.1 567.8 L930.8 581.9 L964.7 565.9 L976.0 571.5 L976.0 582.8 L985.4 589.4 L997.6 591.3 L1004.2 607.3 L1034.3 601.6 L1043.8 607.3 L1056.0 600.7 L1063.5 614.0" fill="none" stroke="#f00" stroke-width="2.4" stroke-linejoin="round"/><path d="M788.0 540.0 L812.8 543.0 L818.5 562.0 L829.8 567.5 L861.8 546.8 L886.0 540.0 L919.5 559.3" fill="none" stroke="#f00" stroke-width="2.4" stroke-linejoin="round"/><path d="M784.6 564.0 L789.5 585.0 L805.5 575.0 L820.0 577.0 L826.0 584.0 L848.0 591.0 L855.0 598.0 L870.0 601.5 L923.3 601.6 L930.8 612.0 L953.4 606.3 L957.2 594.0 L985.4 589.4" fill="none" stroke="#f00" stroke-width="2.4" stroke-linejoin="round"/><path d="M899.0 488.5 L905.0 496.0 L930.8 500.0 L936.5 503.8 L977.9 507.5 L1002.3 500.0 L1031.7 510.6 L1041.6 518.0" fill="none" stroke="#f00" stroke-width="2.4" stroke-linejoin="round"/><path d="M789.5 585.0 L795.0 590.0 L803.0 594.0 L807.0 601.0 L823.0 605.0 L828.0 614.0" fill="none" stroke="#f00" stroke-width="2.4" stroke-linejoin="round"/><path d="M898.8 601.6 L902.6 614.0" fill="none" stroke="#f00" stroke-width="2.4" stroke-linejoin="round"/><path d="M936.8 412.0 L962.0 426.0 L966.0 437.0 L973.0 439.0 L981.5 432.7 L988.0 413.5 L989.0 405.0" fill="none" stroke="#f00" stroke-width="2.4" stroke-linejoin="round"/><path d="M1062.6 372.0 L1091.0 399.0 L1092.4 409.0 L1081.0 424.0 L1076.0 436.4 L1071.3 441.3 L1086.0 453.7 L1131.2 447.7 L1140.0 467.0 L1157.5 482.5" fill="none" stroke="#f00" stroke-width="2.4" stroke-linejoin="round"/><path d="M1044.0 481.0 L1034.0 486.0 L1031.7 500.7 L1041.6 518.0 L1056.5 535.4 L1081.2 565.0 L1096.0 592.3 L1106.0 594.8" fill="none" stroke="#f00" stroke-width="2.4" stroke-linejoin="round"/><path d="M1046.5 481.0 L1056.5 493.3 L1073.8 508.0 L1095.0 527.0 L1113.4 542.8" fill="none" stroke="#f00" stroke-width="2.4" stroke-linejoin="round"/><path d="M1040.4 328.7 L1056.5 332.4 L1060.2 344.8 L1062.6 369.5 L1076.3 377.0 L1106.0 389.3 L1108.5 401.7 L1128.3 414.0 L1145.6 424.0 L1150.8 440.0 L1152.0 447.4 L1158.8 456.8 L1162.0 468.0 L1157.5 483.8 L1154.8 496.0 L1155.5 504.0 L1154.0 510.0 L1147.4 516.0 L1142.7 520.0 L1130.7 530.4 L1113.4 542.8 L1125.8 562.6 L1125.8 580.0 L1108.5 592.3 L1096.0 614.0 L1096.0 616.0 L735.0 616.0 L735.6 614.0 L745.0 598.0 L754.0 585.0 L760.0 577.0 L767.6 567.5 L784.6 564.0 L801.5 554.0 L788.0 540.0 L777.0 522.0 L773.0 479.0 L793.0 464.0 L805.0 443.0 L820.0 428.0 L841.0 410.0 L1040.0 300.0Z" fill="none" stroke="#f00" stroke-width="2.4" stroke-linejoin="round"/><circle cx="875" cy="410" r="4.5" fill="#0ad00a" stroke="#000" stroke-width="1"/><circle cx="872" cy="432" r="4.5" fill="#0ad00a" stroke="#000" stroke-width="1"/><circle cx="812.8" cy="440" r="4.5" fill="#0ad00a" stroke="#000" stroke-width="1"/><circle cx="911.6" cy="485" r="4.5" fill="#0ad00a" stroke="#000" stroke-width="1"/><circle cx="798.7" cy="481.9" r="4.5" fill="#0ad00a" stroke="#000" stroke-width="1"/><circle cx="855.2" cy="496" r="4.5" fill="#0ad00a" stroke="#000" stroke-width="1"/><circle cx="854.2" cy="497.9" r="4.5" fill="#0ad00a" stroke="#000" stroke-width="1"/><circle cx="852" cy="510.7" r="4.5" fill="#0ad00a" stroke="#000" stroke-width="1"/><circle cx="859.9" cy="522" r="4.5" fill="#0ad00a" stroke="#000" stroke-width="1"/><circle cx="758.2" cy="610.8" r="4.5" fill="#0ad00a" stroke="#000" stroke-width="1"/><circle cx="855.2" cy="609.9" r="4.5" fill="#0ad00a" stroke="#000" stroke-width="1"/><circle cx="886.2" cy="609.9" r="4.5" fill="#0ad00a" stroke="#000" stroke-width="1"/><circle cx="878.7" cy="547.8" r="4.5" fill="#0ad00a" stroke="#000" stroke-width="1"/><circle cx="846.7" cy="576" r="4.5" fill="#0ad00a" stroke="#000" stroke-width="1"/><circle cx="888" cy="601.4" r="4.5" fill="#0ad00a" stroke="#000" stroke-width="1"/><circle cx="926.7" cy="504.1" r="4.5" fill="#0ad00a" stroke="#000" stroke-width="1"/><circle cx="901.6" cy="511.7" r="4.5" fill="#0ad00a" stroke="#000" stroke-width="1"/><circle cx="904.8" cy="518.8" r="4.5" fill="#0ad00a" stroke="#000" stroke-width="1"/><circle cx="919" cy="517" r="4.5" fill="#0ad00a" stroke="#000" stroke-width="1"/><circle cx="947.8" cy="518.8" r="4.5" fill="#0ad00a" stroke="#000" stroke-width="1"/><circle cx="922.9" cy="527.9" r="4.5" fill="#0ad00a" stroke="#000" stroke-width="1"/><circle cx="924.8" cy="535.8" r="4.5" fill="#0ad00a" stroke="#000" stroke-width="1"/><circle cx="923.3" cy="543.3" r="4.5" fill="#0ad00a" stroke="#000" stroke-width="1"/><circle cx="913.9" cy="550.8" r="4.5" fill="#0ad00a" stroke="#000" stroke-width="1"/><circle cx="920.5" cy="553" r="4.5" fill="#0ad00a" stroke="#000" stroke-width="1"/><circle cx="937.4" cy="547" r="4.5" fill="#0ad00a" stroke="#000" stroke-width="1"/><circle cx="941.2" cy="546.1" r="4.5" fill="#0ad00a" stroke="#000" stroke-width="1"/><circle cx="931.8" cy="555" r="4.5" fill="#0ad00a" stroke="#000" stroke-width="1"/><circle cx="937.4" cy="555.5" r="4.5" fill="#0ad00a" stroke="#000" stroke-width="1"/><circle cx="983.5" cy="514.7" r="4.5" fill="#0ad00a" stroke="#000" stroke-width="1"/><circle cx="991" cy="509.8" r="4.5" fill="#0ad00a" stroke="#000" stroke-width="1"/><circle cx="966.6" cy="527.9" r="4.5" fill="#0ad00a" stroke="#000" stroke-width="1"/><circle cx="972.2" cy="525.4" r="4.5" fill="#0ad00a" stroke="#000" stroke-width="1"/><circle cx="976.9" cy="523.5" r="4.5" fill="#0ad00a" stroke="#000" stroke-width="1"/><circle cx="979.8" cy="533.9" r="4.5" fill="#0ad00a" stroke="#000" stroke-width="1"/><circle cx="995.8" cy="532.9" r="4.5" fill="#0ad00a" stroke="#000" stroke-width="1"/><circle cx="999.5" cy="551.8" r="4.5" fill="#0ad00a" stroke="#000" stroke-width="1"/><circle cx="985.4" cy="558.7" r="4.5" fill="#0ad00a" stroke="#000" stroke-width="1"/><circle cx="1024" cy="576.2" r="4.5" fill="#0ad00a" stroke="#000" stroke-width="1"/><circle cx="1019.3" cy="590.7" r="4.5" fill="#0ad00a" stroke="#000" stroke-width="1"/><circle cx="907.9" cy="565.9" r="4.5" fill="#0ad00a" stroke="#000" stroke-width="1"/><circle cx="916.7" cy="567.8" r="4.5" fill="#0ad00a" stroke="#000" stroke-width="1"/><circle cx="920.5" cy="566.8" r="4.5" fill="#0ad00a" stroke="#000" stroke-width="1"/><circle cx="906.4" cy="576.2" r="4.5" fill="#0ad00a" stroke="#000" stroke-width="1"/><circle cx="926.1" cy="587.5" r="4.5" fill="#0ad00a" stroke="#000" stroke-width="1"/><circle cx="942.1" cy="582.8" r="4.5" fill="#0ad00a" stroke="#000" stroke-width="1"/><circle cx="947.8" cy="604.5" r="4.5" fill="#0ad00a" stroke="#000" stroke-width="1"/><circle cx="887.5" cy="601.6" r="4.5" fill="#0ad00a" stroke="#000" stroke-width="1"/><circle cx="916.7" cy="601.6" r="4.5" fill="#0ad00a" stroke="#000" stroke-width="1"/><circle cx="885.6" cy="610" r="4.5" fill="#0ad00a" stroke="#000" stroke-width="1"/><circle cx="1088" cy="546.7" r="4.5" fill="#0ad00a" stroke="#000" stroke-width="1"/><circle cx="1093.6" cy="555" r="4.5" fill="#0ad00a" stroke="#000" stroke-width="1"/><circle cx="1103" cy="556.8" r="4.5" fill="#0ad00a" stroke="#000" stroke-width="1"/><circle cx="1002.3" cy="501" r="4.5" fill="#0ad00a" stroke="#000" stroke-width="1"/><circle cx="1055" cy="366" r="4.5" fill="#0ad00a" stroke="#000" stroke-width="1"/><circle cx="1056" cy="387" r="4.5" fill="#0ad00a" stroke="#000" stroke-width="1"/><circle cx="979.7" cy="419.8" r="4.5" fill="#0ad00a" stroke="#000" stroke-width="1"/><circle cx="974.8" cy="434" r="4.5" fill="#0ad00a" stroke="#000" stroke-width="1"/><circle cx="979" cy="434" r="4.5" fill="#0ad00a" stroke="#000" stroke-width="1"/><circle cx="1050.3" cy="426" r="4.5" fill="#0ad00a" stroke="#000" stroke-width="1"/><circle cx="1057.7" cy="430.7" r="4.5" fill="#0ad00a" stroke="#000" stroke-width="1"/><circle cx="1043.6" cy="440" r="4.5" fill="#0ad00a" stroke="#000" stroke-width="1"/><circle cx="1068.8" cy="442.5" r="4.5" fill="#0ad00a" stroke="#000" stroke-width="1"/><circle cx="1075" cy="441.8" r="4.5" fill="#0ad00a" stroke="#000" stroke-width="1"/><circle cx="1062.7" cy="447.5" r="4.5" fill="#0ad00a" stroke="#000" stroke-width="1"/><circle cx="1056.5" cy="451.2" r="4.5" fill="#0ad00a" stroke="#000" stroke-width="1"/><circle cx="1059" cy="460" r="4.5" fill="#0ad00a" stroke="#000" stroke-width="1"/><circle cx="1150.5" cy="434.6" r="4.5" fill="#0ad00a" stroke="#000" stroke-width="1"/><circle cx="1120.8" cy="469.8" r="4.5" fill="#0ad00a" stroke="#000" stroke-width="1"/><circle cx="1025.5" cy="461" r="4.5" fill="#0ad00a" stroke="#000" stroke-width="1"/><circle cx="1041.6" cy="462.4" r="4.5" fill="#0ad00a" stroke="#000" stroke-width="1"/><circle cx="1039" cy="464.3" r="4.5" fill="#0ad00a" stroke="#000" stroke-width="1"/><circle cx="1042.8" cy="479.7" r="4.5" fill="#0ad00a" stroke="#000" stroke-width="1"/><circle cx="1007" cy="470.5" r="4.5" fill="#0ad00a" stroke="#000" stroke-width="1"/><circle cx="1009.4" cy="486" r="4.5" fill="#0ad00a" stroke="#000" stroke-width="1"/><circle cx="1004.5" cy="497" r="4.5" fill="#0ad00a" stroke="#000" stroke-width="1"/><circle cx="1023.8" cy="576.7" r="4.5" fill="#0ad00a" stroke="#000" stroke-width="1"/></g></svg>
<div style="position:absolute;left:644px;top:52px;width:4px;height:562px;background:linear-gradient(90deg,rgba(0,0,0,0.3),rgba(0,0,0,0))"></div>
<div style="position:absolute;left:191px;top:51px;width:453px;height:563px;background:#f8f8f8;border:1px solid #808080;border-bottom:none;box-sizing:border-box"></div>
<div class="t" style="left:221px;top:58.00px;font-size:12.7px;line-height:12.7px;color:#000;">Layer erstellen</div>
<svg style="position:absolute;left:627px;top:58.5px;" width="6" height="9" viewBox="0 0 6 9"><path d="M0 0L5 4.5L0 9Z" fill="#000"/></svg>
<div style="position:absolute;left:192px;top:74px;width:451px;height:22px;background:linear-gradient(#0078d7,#0066be)"></div>
<div class="t" style="left:221px;top:80.00px;font-size:12.7px;line-height:12.7px;color:#fff;">Layer hinzufügen</div>
<svg style="position:absolute;left:627px;top:80.5px;" width="6" height="9" viewBox="0 0 6 9"><path d="M0 0L5 4.5L0 9Z" fill="#fff"/></svg>
<div class="t" style="left:221px;top:102.00px;font-size:12.7px;line-height:12.7px;color:#000;">Eingebettete Layer und Gruppen...</div>
<div class="t" style="left:221px;top:124.00px;font-size:12.7px;line-height:12.7px;color:#000;">Aus Layerdefinitionsdatei hinzufügen...</div>
<div style="position:absolute;left:197px;top:140px;width:441px;height:1px;background:#bdbdbd"></div>
<svg style="position:absolute;left:196px;top:144px;" width="20" height="20" viewBox="0 0 20 20"><path d="M6.5 1.5H12L14.5 4V14.5H6.5Z" fill="#f6f6f6" stroke="#7d7d7d" stroke-width="0.9"/><path d="M1.5 5.5H8.5L11.5 8.5V17.5H1.5Z" fill="#fff" stroke="#6d6d6d" stroke-width="0.9"/><path d="M8.5 5.5V8.5H11.5" fill="none" stroke="#6d6d6d" stroke-width="0.9"/><path d="M3.3 10h6M3.3 12.2h6M3.3 14.4h6" stroke="#7d7d7d" stroke-width="0.9"/></svg>
<div class="t" style="left:221px;top:149.00px;font-size:12.7px;line-height:12.7px;color:#000;">Stil kopieren</div>
<svg style="position:absolute;left:196px;top:168px;" width="20" height="20" viewBox="0 0 20 20"><rect x="1.5" y="2.5" width="13" height="16" rx="2" fill="#e4e4e4" stroke="#b9b9b9"/><rect x="5" y="1" width="6" height="3" rx="1" fill="#d6d6d6" stroke="#b9b9b9" stroke-width="0.8"/><path d="M3.5 5.5H10L12.5 8V16.5H3.5Z" fill="#fbfbfb" stroke="#bdbdbd" stroke-width="0.8"/><path d="M5 10h5.5M5 12h5.5M5 14h5.5" stroke="#c8c8c8" stroke-width="0.8"/></svg>
<div class="t" style="left:221px;top:173.00px;font-size:12.7px;line-height:12.7px;color:#6d6d6d;">Stil einfügen</div>
<div style="position:absolute;left:197px;top:190px;width:441px;height:1px;background:#bdbdbd"></div>
<svg style="position:absolute;left:195px;top:195px;" width="20" height="20" viewBox="0 0 20 20"><rect x="0.5" y="0.5" width="16" height="16" rx="1" fill="#dfe9f6" stroke="#7aa0d0"/><rect x="1" y="1" width="15" height="3.5" fill="#9dbce3"/><path d="M3 2.8h11" stroke="#fff" stroke-width="0.9"/><path d="M3 7.2h11M3 10.2h11M3 13.2h11" stroke="#7aa0d0" stroke-width="1.3"/><path d="M6 5v11" stroke="#dfe9f6" stroke-width="0.8"/></svg>
<div class="t" style="left:221px;top:199.00px;font-size:12.7px;line-height:12.7px;color:#000;">Attributtabelle öffnen</div>
<div class="t" style="left:528.4px;top:199.00px;font-size:12.7px;line-height:12.7px;color:#000;">F6</div>
<svg style="position:absolute;left:196px;top:217px;" width="20" height="20" viewBox="0 0 20 20"><path d="M4 15.5L11.5 2.5L15 4.5L7.5 17.5Z" fill="#e1cc3a" stroke="#6d6020" stroke-width="0.8"/><path d="M6 16.3L13.2 3.6" stroke="#f3e88a" stroke-width="0.9"/><path d="M11.5 2.5L12.5 0.8L16 2.8L15 4.5Z" fill="#f4f4f4" stroke="#8a8a8a" stroke-width="0.6"/><path d="M4 15.5L7.5 17.5L1.5 20.5Z" fill="#a8a8a8" stroke="#777" stroke-width="0.5"/><path d="M1.5 20.5L2.6 18.5L3.8 19.2Z" fill="#333"/></svg>
<div class="t" style="left:221px;top:223.00px;font-size:12.7px;line-height:12.7px;color:#000;">Bearbeitungsstatus umschalten</div>
<svg style="position:absolute;left:195px;top:243px;" width="20" height="20" viewBox="0 0 20 20"><rect x="0.5" y="0.5" width="15" height="15.5" rx="2" fill="#b4b4b4" stroke="#a6a6a6"/><rect x="3" y="1.5" width="10" height="6" fill="#ececec"/><path d="M4.5 3.3h7M4.5 5.3h7" stroke="#c4c4c4" stroke-width="0.8"/><rect x="3.5" y="10" width="8" height="6" fill="#ececec"/><rect x="5" y="11.3" width="2" height="3.2" fill="#a3a3a3"/><path d="M10 17.5L16 8L18.5 9.5L12.5 19Z" fill="#c2c2c2" stroke="#9c9c9c" stroke-width="0.7"/><path d="M10 17.5L12.5 19L9.5 20.5Z" fill="#9c9c9c"/></svg>
<div class="t" style="left:221px;top:247.00px;font-size:12.7px;line-height:12.7px;color:#6d6d6d;">Layeränderungen speichern</div>
<svg style="position:absolute;left:196px;top:265px;" width="20" height="20" viewBox="0 0 20 20"><path d="M1.5 16L8.5 2.5L11.5 4L4.5 17.5Z" fill="#bdbdbd" stroke="#9c9c9c" stroke-width="0.7"/><path d="M1.5 16L4.5 17.5L1 20Z" fill="#a5a5a5"/><path d="M6.5 17.5L13.5 4L16.5 5.5L9.5 19Z" fill="#c6c6c6" stroke="#9c9c9c" stroke-width="0.7"/><path d="M6.5 17.5L9.5 19L6 21.5Z" fill="#a5a5a5"/><path d="M3.5 16.5L10 3.3M8.5 18L15 4.8" stroke="#e0e0e0" stroke-width="0.7"/></svg>
<div class="t" style="left:221px;top:271.00px;font-size:12.7px;line-height:12.7px;color:#6d6d6d;">Aktuelle Änderungen</div>
<svg style="position:absolute;left:627px;top:271.5px;" width="6" height="9" viewBox="0 0 6 9"><path d="M0 0L5 4.5L0 9Z" fill="#a0a0a0"/></svg>
<div style="position:absolute;left:197px;top:288px;width:441px;height:1px;background:#bdbdbd"></div>
<div class="t" style="left:221px;top:296.00px;font-size:12.7px;line-height:12.7px;color:#000;">Speichern unter...</div>
<div class="t" style="left:221px;top:318.00px;font-size:12.7px;line-height:12.7px;color:#000;">Als Layerdefinitionsdatei speichern...</div>
<svg style="position:absolute;left:195px;top:337px;" width="20" height="20" viewBox="0 0 20 20"><rect x="0.75" y="0.75" width="14" height="14" fill="#ececec" stroke="#8a8a8a" stroke-width="1.5"/><rect x="10" y="11" width="8" height="7" rx="2.2" fill="#e84848"/><path d="M11.8 14.5h4.4" stroke="#fff" stroke-width="1.6"/></svg>
<div class="t" style="left:221px;top:341.00px;font-size:12.7px;line-height:12.7px;color:#000;">Layer/Gruppe löschen</div>
<div class="t" style="left:528.4px;top:341.00px;font-size:12.7px;line-height:12.7px;color:#000;">Strg+D</div>
<svg style="position:absolute;left:195px;top:361px;" width="20" height="20" viewBox="0 0 20 20"><path d="M0.5 3.5H3.5V14.5H14.5V17.5H2.5C1.3 17.5 0.5 16.7 0.5 15.5Z" fill="#c4c4c4" stroke="#b0b0b0" stroke-width="0.8"/><rect x="3.5" y="0.5" width="14" height="14" rx="1" fill="#eeeeee" stroke="#b8b8b8"/><rect x="10" y="10" width="7.5" height="7.5" rx="1.5" fill="#d8d8d8"/><circle cx="13.75" cy="13.75" r="1.8" fill="none" stroke="#fff" stroke-width="0.9"/><path d="M13.75 10.8v6M10.8 13.75h6" stroke="#fff" stroke-width="0.8"/></svg>
<div class="t" style="left:221px;top:365.00px;font-size:12.7px;line-height:12.7px;color:#6d6d6d;">Layer duplizieren</div>
<div class="t" style="left:221px;top:388.00px;font-size:12.7px;line-height:12.7px;color:#6d6d6d;">Maßstabsabhängige Sichtbarkeit des/der Layer setzen</div>
<div class="t" style="left:221px;top:410.00px;font-size:12.7px;line-height:12.7px;color:#6d6d6d;">KBS von Layer(n) setzen</div>
<div class="t" style="left:528.4px;top:410.00px;font-size:12.7px;line-height:12.7px;color:#6d6d6d;">Strg+Umschalt+C</div>
<div class="t" style="left:221px;top:432.00px;font-size:12.7px;line-height:12.7px;color:#6d6d6d;">Layer-KBS dem Projekt zuweisen</div>
<div class="t" style="left:221px;top:454.00px;font-size:12.7px;line-height:12.7px;color:#000;">Eigenschaften (P)...</div>
<div class="t" style="left:221px;top:476.00px;font-size:12.7px;line-height:12.7px;color:#000;">Filter...</div>
<div class="t" style="left:528.4px;top:476.00px;font-size:12.7px;line-height:12.7px;color:#000;">Strg+F</div>
<svg style="position:absolute;left:194px;top:497px;" width="20" height="20" viewBox="0 0 20 20"><path d="M0.5 4.5L4 0.5H17.5V8.5H4Z" fill="#f2dc3a" stroke="#c8ad1a" stroke-width="0.8"/><text x="10.7" y="7.3" font-family="Liberation Serif" font-weight="bold" font-size="7.6" fill="#222" text-anchor="middle">abc</text></svg>
<div class="t" style="left:221px;top:499.00px;font-size:12.7px;line-height:12.7px;color:#000;">Beschriftung</div>
<div style="position:absolute;left:197px;top:516px;width:441px;height:1px;background:#bdbdbd"></div>
<svg style="position:absolute;left:194px;top:521px;" width="20" height="20" viewBox="0 0 20 20"><path d="M0.8 1.2H19.2" stroke="#111" stroke-width="1.6"/><path d="M1.2 1.2L2 5.5C2.3 7 3.2 7.3 4.5 7.3H6.8C8 7.3 8.5 6.8 8.8 5.5L9.3 1.8M10.7 1.8L11.2 5.5C11.5 6.8 12 7.3 13.2 7.3H15.5C16.8 7.3 17.7 7 18 5.5L18.8 1.2" fill="none" stroke="#111" stroke-width="1.7"/><rect x="12.5" y="11.5" width="7" height="7" rx="1" fill="#5c9c5c" stroke="#4b874b" stroke-width="0.8"/><path d="M16 12.6v4.8M13.6 15h4.8" stroke="#fff" stroke-width="1.5"/></svg>
<div class="t" style="left:221px;top:525.00px;font-size:12.7px;line-height:12.7px;color:#000;">Zur Übersicht hinzufügen</div>
<svg style="position:absolute;left:194px;top:545px;" width="20" height="20" viewBox="0 0 20 20"><path d="M0.8 1.2H19.2" stroke="#111" stroke-width="1.6"/><path d="M1.2 1.2L2 5.5C2.3 7 3.2 7.3 4.5 7.3H6.8C8 7.3 8.5 6.8 8.8 5.5L9.3 1.8M10.7 1.8L11.2 5.5C11.5 6.8 12 7.3 13.2 7.3H15.5C16.8 7.3 17.7 7 18 5.5L18.8 1.2" fill="none" stroke="#111" stroke-width="1.7"/><rect x="4.5" y="11.5" width="15" height="7" rx="1.2" fill="#5c9c5c" stroke="#4b874b" stroke-width="0.8"/><path d="M8.5 12.6v4.8M6.1 15h4.8M15.5 12.6v4.8M13.1 15h4.8" stroke="#fff" stroke-width="1.5"/></svg>
<div class="t" style="left:221px;top:549.00px;font-size:12.7px;line-height:12.7px;color:#000;">Alle zur Übersicht hinzufügen</div>
<svg style="position:absolute;left:194px;top:569px;" width="20" height="20" viewBox="0 0 20 20"><path d="M0.8 1.2H19.2" stroke="#111" stroke-width="1.6"/><path d="M1.2 1.2L2 5.5C2.3 7 3.2 7.3 4.5 7.3H6.8C8 7.3 8.5 6.8 8.8 5.5L9.3 1.8M10.7 1.8L11.2 5.5C11.5 6.8 12 7.3 13.2 7.3H15.5C16.8 7.3 17.7 7 18 5.5L18.8 1.2" fill="none" stroke="#111" stroke-width="1.7"/><rect x="12" y="11" width="8" height="8" fill="#e84848"/><circle cx="16" cy="15" r="2.6" fill="none" stroke="#fff" stroke-width="1"/><path d="M14.3 16.7L17.7 13.3" stroke="#fff" stroke-width="1"/></svg>
<div class="t" style="left:221px;top:573.00px;font-size:12.7px;line-height:12.7px;color:#000;">Alle aus Übersicht entfernen</div>
<div style="position:absolute;left:197px;top:590px;width:441px;height:1px;background:#bdbdbd"></div>
<svg style="position:absolute;left:194px;top:597px;" width="20" height="20" viewBox="0 0 20 20"><path d="M0.5 7C5 0.8 15 0.8 20 7C15 13.2 5 13.2 0.5 7Z" fill="#fdfdfd" stroke="#9a9a9a" stroke-width="0.9"/><path d="M3 2.5C8 0 13 0 18 2.5" fill="none" stroke="#b5b5b5" stroke-width="0.7"/><circle cx="10" cy="7.3" r="4" fill="#6d9bd0" stroke="#3d6494" stroke-width="0.7"/><circle cx="9.6" cy="5.8" r="1.4" fill="#111"/></svg>
<div class="t" style="left:221px;top:599.00px;font-size:12.7px;line-height:12.7px;color:#000;">Alle Layer anzeigen</div>
<div class="t" style="left:528.4px;top:599.00px;font-size:12.7px;line-height:12.7px;color:#000;">Strg+Umschalt+U</div>
<div style="position:absolute;left:1041px;top:76px;width:4px;height:339px;background:linear-gradient(90deg,rgba(0,0,0,0.3),rgba(0,0,0,0))"></div>
<div style="position:absolute;left:645px;top:412px;width:396px;height:4px;background:linear-gradient(rgba(0,0,0,0.3),rgba(0,0,0,0))"></div>
<div style="position:absolute;left:643px;top:74px;width:398px;height:338px;background:#f8f8f8;border:1px solid #808080;box-sizing:border-box"></div>
<svg style="position:absolute;left:645px;top:77px;" width="22" height="22" viewBox="0 0 22 22"><path d="M2.5 3L8 15.5L13 3H17" fill="none" stroke="#3d5675" stroke-width="1.3"/><circle cx="2.5" cy="3" r="2" fill="#f8f8f8" stroke="#3d5675" stroke-width="1.1"/><circle cx="8" cy="15.5" r="2" fill="#f8f8f8" stroke="#3d5675" stroke-width="1.1"/><circle cx="13" cy="3" r="2" fill="#f8f8f8" stroke="#3d5675" stroke-width="1.1"/><circle cx="17.5" cy="3" r="2" fill="#f8f8f8" stroke="#3d5675" stroke-width="1.1"/><rect x="12.5" y="12.5" width="7" height="7" rx="1.3" fill="#5c9c5c" stroke="#4b874b" stroke-width="1"/><path d="M16.0 13.4V18.6M13.4 16.0H18.6" stroke="#fff" stroke-width="2.0"/></svg>
<div class="t" style="left:672.3px;top:82.00px;font-size:12.7px;line-height:12.7px;color:#000;">Vektorlayer hinzufügen...</div>
<div class="t" style="left:921.2px;top:82.00px;font-size:12.7px;line-height:12.7px;color:#000;">Strg+Umschalt+V</div>
<svg style="position:absolute;left:645px;top:101px;" width="22" height="22" viewBox="0 0 22 22"><rect x="0.5" y="1" width="5" height="5" fill="#213f63"/><rect x="5.5" y="1" width="5" height="5" fill="#6e9bd1"/><rect x="10.5" y="1" width="5" height="5" fill="#213f63"/><rect x="0.5" y="6" width="5" height="5" fill="#6e9bd1"/><rect x="5.5" y="6" width="5" height="5" fill="#213f63"/><rect x="10.5" y="6" width="5" height="5" fill="#6e9bd1"/><rect x="0.5" y="11" width="5" height="5" fill="#213f63"/><rect x="5.5" y="11" width="5" height="5" fill="#6e9bd1"/><rect x="12.5" y="12.5" width="7" height="7" rx="1.3" fill="#5c9c5c" stroke="#4b874b" stroke-width="1"/><path d="M16.0 13.4V18.6M13.4 16.0H18.6" stroke="#fff" stroke-width="2.0"/></svg>
<div class="t" style="left:672.3px;top:106.00px;font-size:12.7px;line-height:12.7px;color:#000;">Rasterlayer hinzufügen...</div>
<div class="t" style="left:921.2px;top:106.00px;font-size:12.7px;line-height:12.7px;color:#000;">Strg+Umschalt+R</div>
<svg style="position:absolute;left:645px;top:125px;" width="22" height="22" viewBox="0 0 22 22"><path d="M2.0 2.0C4.0 0.5 13.0 0.5 16.5 1.5C18.5 2.5 19.0 5.0 18.0 8.0C17.5 10.0 16.0 11.0 15.0 11.0L18.0 12.0L14.5 12.8C13.0 13.5 12.5 15.5 12.0 17.0C11.0 19.0 9.0 19.0 9.0 17.5L8.5 13.0L6.0 13.5C3.0 13.5 1.0 11.0 0.8 7.0C0.6 4.5 1.0 3.0 2.0 2.0Z" fill="#6d9bd0" stroke="#2f5a8a" stroke-width="1.1"/><path d="M5.5 2.5C5.0 6.0 5.5 10.0 7.5 13.0M14.0 3.0C13.0 5.0 13.5 8.0 15.0 11.0" fill="none" stroke="#2f5a8a" stroke-width="1"/><circle cx="11.5" cy="6" r="0.8" fill="#2f5a8a"/><rect x="12.5" y="12.5" width="7" height="7" rx="1.3" fill="#5c9c5c" stroke="#4b874b" stroke-width="1"/><path d="M16.0 13.4V18.6M13.4 16.0H18.6" stroke="#fff" stroke-width="2.0"/></svg>
<div class="t" style="left:672.3px;top:130.00px;font-size:12.7px;line-height:12.7px;color:#000;">PostGIS-Layer hinzufügen...</div>
<div class="t" style="left:921.2px;top:130.00px;font-size:12.7px;line-height:12.7px;color:#000;">Strg+Umschalt+D</div>
<svg style="position:absolute;left:645px;top:149px;" width="22" height="22" viewBox="0 0 22 22"><path d="M0.5 19.5C3 11 9 3 19 0.5C19 6 14 12 4 14Z" fill="#a9c6ea" stroke="#2f4f7a" stroke-width="1"/><path d="M1.5 18C6 11 11 6 17 3" fill="none" stroke="#2f4f7a" stroke-width="0.9"/><path d="M7 10C10 9 13 8 16 6" fill="none" stroke="#e6f0fb" stroke-width="0.8"/><rect x="12.5" y="12.5" width="7" height="7" rx="1.3" fill="#5c9c5c" stroke="#4b874b" stroke-width="1"/><path d="M16.0 13.4V18.6M13.4 16.0H18.6" stroke="#fff" stroke-width="2.0"/></svg>
<div class="t" style="left:672.3px;top:154.00px;font-size:12.7px;line-height:12.7px;color:#000;">SpatiaLite-Layer hinzufügen...</div>
<div class="t" style="left:921.2px;top:154.00px;font-size:12.7px;line-height:12.7px;color:#000;">Strg+Umschalt+L</div>
<svg style="position:absolute;left:645px;top:173px;" width="22" height="22" viewBox="0 0 22 22"><path d="M0.5 0.5C9 1.5 18 4 20 9.5C13 11 6 14 0.5 18C5 13 5 6 0.5 0.5Z" fill="#6d9bd0" stroke="#1f3f68" stroke-width="1.1"/><path d="M6.5 1.5C8.5 5 8.5 10 7 13.5M11.5 2.5C13 5 13 8 12 11M15.5 4C16.5 6 16.5 8 16 10" fill="none" stroke="#1f3f68" stroke-width="1"/><rect x="12.5" y="12.5" width="7" height="7" rx="1.3" fill="#5c9c5c" stroke="#4b874b" stroke-width="1"/><path d="M16.0 13.4V18.6M13.4 16.0H18.6" stroke="#fff" stroke-width="2.0"/></svg>
<div class="t" style="left:672.3px;top:178.00px;font-size:12.7px;line-height:12.7px;color:#000;">Räumlichen MSSQL-Layer hinzufügen...</div>
<div class="t" style="left:921.2px;top:178.00px;font-size:12.7px;line-height:12.7px;color:#000;">Strg+Umschalt+M</div>
<svg style="position:absolute;left:645px;top:197px;" width="22" height="22" viewBox="0 0 22 22"><rect x="0" y="0" width="17" height="17" rx="3.5" fill="#6f9bd0"/><text x="8.5" y="11.5" font-family="Liberation Sans" font-size="7.5" fill="#fff" text-anchor="middle" textLength="12" lengthAdjust="spacingAndGlyphs">DB2</text><rect x="12.5" y="12.5" width="7" height="7" rx="1.3" fill="#5c9c5c" stroke="#4b874b" stroke-width="1"/><path d="M16.0 13.4V18.6M13.4 16.0H18.6" stroke="#fff" stroke-width="2.0"/></svg>
<div class="t" style="left:672.3px;top:202.00px;font-size:12.7px;line-height:12.7px;color:#000;">DB2-Layer hinzufügen...</div>
<div class="t" style="left:921.2px;top:202.00px;font-size:12.7px;line-height:12.7px;color:#000;">Strg+Umschalt+2</div>
<svg style="position:absolute;left:645px;top:221px;" width="22" height="22" viewBox="0 0 22 22"><rect x="1.5" y="1" width="15.5" height="11" rx="4" fill="#6f98cc" stroke="#1c3a60" stroke-width="2"/><rect x="12.5" y="12.5" width="7" height="7" rx="1.3" fill="#5c9c5c" stroke="#4b874b" stroke-width="1"/><path d="M16.0 13.4V18.6M13.4 16.0H18.6" stroke="#fff" stroke-width="2.0"/></svg>
<div class="t" style="left:672.3px;top:226.00px;font-size:12.7px;line-height:12.7px;color:#000;">Oracle Spatial-Layer hinzufügen...</div>
<div class="t" style="left:921.2px;top:226.00px;font-size:12.7px;line-height:12.7px;color:#000;">Strg+Umschalt+O</div>
<svg style="position:absolute;left:645px;top:245px;" width="22" height="22" viewBox="0 0 22 22"><circle cx="10" cy="9.5" r="9" fill="#a9c2e0" stroke="#6f95c5" stroke-width="1"/><path d="M1.5 9.5h17M10 1.5v17M3 5.5h14M3 13.5h14" stroke="#e8f0fa" stroke-width="0.6" opacity="0.6"/><path d="M4 5.5l3 -0.5 1.5 1.5 -1.5 2 -1 2 -1.5 -1.5 -1 -2z M7 12l1.5 0 -0.5 3.5 -1 0.5z M11.5 4.5l4 0 0.5 1.5 -1.5 1.5 -1 4 -1.5 0.5 -0.5 -3 -1 -2.5z M15.5 12l1 1 -1 1.5z" fill="#2f4f7a"/><rect x="12.5" y="12.5" width="7" height="7" rx="1.3" fill="#5c9c5c" stroke="#4b874b" stroke-width="1"/><path d="M16.0 13.4V18.6M13.4 16.0H18.6" stroke="#fff" stroke-width="2.0"/></svg>
<div class="t" style="left:672.3px;top:250.00px;font-size:12.7px;line-height:12.7px;color:#000;">WMS/WMTS-Layer hinzufügen...</div>
<div class="t" style="left:921.2px;top:250.00px;font-size:12.7px;line-height:12.7px;color:#000;">Strg+Umschalt+W</div>
<svg style="position:absolute;left:645px;top:269px;" width="22" height="22" viewBox="0 0 22 22"><circle cx="10" cy="9.5" r="9" fill="#a9c2e0" stroke="#6f95c5" stroke-width="1"/><path d="M1.5 9.5h17M10 1.5v17M3 5.5h14M3 13.5h14" stroke="#e8f0fa" stroke-width="0.6" opacity="0.6"/><path d="M4 5.5l3 -0.5 1.5 1.5 -1.5 2 -1 2 -1.5 -1.5 -1 -2z M7 12l1.5 0 -0.5 3.5 -1 0.5z M11.5 4.5l4 0 0.5 1.5 -1.5 1.5 -1 4 -1.5 0.5 -0.5 -3 -1 -2.5z M15.5 12l1 1 -1 1.5z" fill="#2f4f7a"/><circle cx="4.8" cy="15.2" r="4.6" fill="#1b4d3a" stroke="#222" stroke-width="0.8"/><path d="M2.5 13l2 -1 1.5 1.5 -1 2zM5.5 16l2 0 0 2 -2 0.5z" fill="#2ec02e"/><circle cx="6.5" cy="13.5" r="1" fill="#3a8ad8"/><circle cx="3" cy="17" r="1" fill="#3a8ad8"/><rect x="12.5" y="12.5" width="7" height="7" rx="1.3" fill="#5c9c5c" stroke="#4b874b" stroke-width="1"/><path d="M16.0 13.4V18.6M13.4 16.0H18.6" stroke="#fff" stroke-width="2.0"/></svg>
<div class="t" style="left:672.3px;top:274.00px;font-size:12.7px;line-height:12.7px;color:#000;">ArcGIS-MapServer-Layer hinzufügen...</div>
<svg style="position:absolute;left:645px;top:293px;" width="22" height="22" viewBox="0 0 22 22"><circle cx="10" cy="9.5" r="9" fill="#2a4f7e" stroke="#1c3a60" stroke-width="1"/><path d="M1.8 6.5H18.2M1.8 12.5H18.2" stroke="#a9c6ea" stroke-width="2.2"/><ellipse cx="10" cy="9.5" rx="4" ry="9" fill="none" stroke="#a9c6ea" stroke-width="1.2"/><path d="M10 0.5V18.5" stroke="#a9c6ea" stroke-width="0.8"/><rect x="12.5" y="12.5" width="7" height="7" rx="1.3" fill="#5c9c5c" stroke="#4b874b" stroke-width="1"/><path d="M16.0 13.4V18.6M13.4 16.0H18.6" stroke="#fff" stroke-width="2.0"/></svg>
<div class="t" style="left:672.3px;top:298.00px;font-size:12.7px;line-height:12.7px;color:#000;">WCS-Layer hinzufügen...</div>
<svg style="position:absolute;left:645px;top:317px;" width="22" height="22" viewBox="0 0 22 22"><circle cx="10" cy="9.5" r="9" fill="#eef4fb" stroke="#5b8bc6" stroke-width="1"/><path d="M1.5 9.5H18.5M3 5H17M3 14H17M10 0.5V18.5" stroke="#9dbbe2" stroke-width="0.9"/><ellipse cx="10" cy="9.5" rx="4.5" ry="9" fill="none" stroke="#9dbbe2" stroke-width="0.9"/><path d="M5 3L8.5 14L12 3H16" fill="none" stroke="#1f2f45" stroke-width="1.1"/><circle cx="5" cy="3" r="1.5" fill="#fff" stroke="#1f2f45" stroke-width="0.9"/><circle cx="12" cy="3" r="1.5" fill="#fff" stroke="#1f2f45" stroke-width="0.9"/><circle cx="16" cy="3" r="1.5" fill="#fff" stroke="#1f2f45" stroke-width="0.9"/><circle cx="8.5" cy="14" r="1.5" fill="#fff" stroke="#1f2f45" stroke-width="0.9"/><rect x="12.5" y="12.5" width="7" height="7" rx="1.3" fill="#5c9c5c" stroke="#4b874b" stroke-width="1"/><path d="M16.0 13.4V18.6M13.4 16.0H18.6" stroke="#fff" stroke-width="2.0"/></svg>
<div class="t" style="left:672.3px;top:322.00px;font-size:12.7px;line-height:12.7px;color:#000;">WFS-Layer hinzufügen...</div>
<svg style="position:absolute;left:645px;top:341px;" width="22" height="22" viewBox="0 0 22 22"><circle cx="10" cy="9.5" r="9" fill="#eef4fb" stroke="#5b8bc6" stroke-width="1"/><path d="M1.5 9.5H18.5M3 5H17M3 14H17M10 0.5V18.5" stroke="#9dbbe2" stroke-width="0.9"/><ellipse cx="10" cy="9.5" rx="4.5" ry="9" fill="none" stroke="#9dbbe2" stroke-width="0.9"/><path d="M5 3L8.5 14L12 3H16" fill="none" stroke="#1f2f45" stroke-width="1.1"/><circle cx="5" cy="3" r="1.5" fill="#fff" stroke="#1f2f45" stroke-width="0.9"/><circle cx="12" cy="3" r="1.5" fill="#fff" stroke="#1f2f45" stroke-width="0.9"/><circle cx="16" cy="3" r="1.5" fill="#fff" stroke="#1f2f45" stroke-width="0.9"/><circle cx="8.5" cy="14" r="1.5" fill="#fff" stroke="#1f2f45" stroke-width="0.9"/><circle cx="4.8" cy="15.2" r="4.6" fill="#1b4d3a" stroke="#222" stroke-width="0.8"/><path d="M2.5 13l2 -1 1.5 1.5 -1 2zM5.5 16l2 0 0 2 -2 0.5z" fill="#2ec02e"/><circle cx="6.5" cy="13.5" r="1" fill="#3a8ad8"/><circle cx="3" cy="17" r="1" fill="#3a8ad8"/><rect x="12.5" y="12.5" width="7" height="7" rx="1.3" fill="#5c9c5c" stroke="#4b874b" stroke-width="1"/><path d="M16.0 13.4V18.6M13.4 16.0H18.6" stroke="#fff" stroke-width="2.0"/></svg>
<div class="t" style="left:672.3px;top:346.00px;font-size:12.7px;line-height:12.7px;color:#000;">ArcGIS-FeatureServer-Layer hinzufügen...</div>
<div style="position:absolute;left:644px;top:363px;width:396px;height:24px;background:linear-gradient(#0078d7,#0066be)"></div>
<svg style="position:absolute;left:645px;top:365px;" width="22" height="22" viewBox="0 0 22 22"><path d="M5 2.5C9 1 12.5 3.5 11 8C10 11 7 13.5 4 15C6.5 12.5 8 10 7.5 8C4.5 8.5 2.5 4.5 5 2.5Z" fill="#6a8ab5" stroke="#3d5f8f" stroke-width="0.7"/><rect x="12.5" y="12.5" width="7" height="7" rx="1.3" fill="#5c9c5c" stroke="#4b874b" stroke-width="1"/><path d="M16.0 13.4V18.6M13.4 16.0H18.6" stroke="#fff" stroke-width="2.0"/></svg>
<div class="t" style="left:672.3px;top:370.00px;font-size:12.7px;line-height:12.7px;color:#fff;">Textdatei als Layer importieren...</div>
<svg style="position:absolute;left:645px;top:389px;" width="22" height="22" viewBox="0 0 22 22"><rect x="1.5" y="0.5" width="17" height="17" rx="2.5" fill="#c6d7ec" stroke="#5d7fa8" stroke-width="1"/><path d="M3 2L7.5 14.5L12 2H16" fill="none" stroke="#2a3f5a" stroke-width="1"/><circle cx="3" cy="2" r="1.5" fill="#fff" stroke="#2a3f5a" stroke-width="0.8"/><circle cx="12" cy="2" r="1.5" fill="#fff" stroke="#2a3f5a" stroke-width="0.8"/><circle cx="16" cy="2" r="1.5" fill="#fff" stroke="#2a3f5a" stroke-width="0.8"/><circle cx="7.5" cy="14.5" r="1.5" fill="#fff" stroke="#2a3f5a" stroke-width="0.8"/><rect x="12.5" y="12.5" width="7" height="7" rx="1.3" fill="#5c9c5c" stroke="#4b874b" stroke-width="1"/><path d="M16.0 13.4V18.6M13.4 16.0H18.6" stroke="#fff" stroke-width="2.0"/></svg>
<div class="t" style="left:672.3px;top:394.00px;font-size:12.7px;line-height:12.7px;color:#000;">Virtuellen Layer hinzufügen/bearbeiten...</div>
<div style="position:absolute;left:191px;top:660px;width:786px;height:518px;background:#f0f0f0;border:1px solid #1c7ed6;box-sizing:border-box"></div>
<div style="position:absolute;left:192px;top:661px;width:784px;height:37px;background:#fff"></div>
<svg style="position:absolute;left:201px;top:667px;" width="20" height="24" viewBox="0 0 20 24"><ellipse cx="9.4" cy="12.6" rx="6.4" ry="7.6" transform="rotate(12 9.4 12.6)" fill="#e4ef5e" stroke="#c9d24a" stroke-width="0.5"/><ellipse cx="10" cy="12.2" rx="2.1" ry="5.8" transform="rotate(22 10 12.2)" fill="#fff"/><path d="M11.5 18.5C13.5 20.5 16 20.5 18.5 19L17.8 21.2C15 22.5 12.5 22 10.8 20Z" fill="#e4ef5e"/><path d="M8 14.8L15.6 5.6" stroke="#159515" stroke-width="2.3"/><path d="M12.2 4.6L18.4 1.8L16.4 8.6Z" fill="#159515"/><path d="M1.8 17.8L6.4 17L6 21.4Z" fill="#0b3d0b"/></svg>
<div class="t" style="left:226.6px;top:672.00px;font-size:15.0px;line-height:15.0px;color:#000;">Textdatei als Layer importieren</div>
<div class="t" style="left:885.5px;top:672.00px;font-size:15.5px;line-height:15.5px;color:#000;">?</div>
<svg style="position:absolute;left:940px;top:673px;" width="13" height="13" viewBox="0 0 13 13"><path d="M0.5 0.5L12.5 12.5M12.5 0.5L0.5 12.5" stroke="#000" stroke-width="1"/></svg>
<div class="t" style="left:203.3px;top:718.00px;font-size:12.7px;line-height:12.7px;color:#000;">Dateiname</div>
<div style="position:absolute;left:270px;top:713px;width:593px;height:21px;background:#fff;border:1px solid #adadad;border-radius:2px;box-sizing:border-box"></div>
<div class="t" style="left:277.3px;top:718.00px;font-size:12.7px;line-height:12.7px;color:#000;">D:/NA-Modell_ArcEGMO/results/U11/gis/Gesamt/hyd_mit.gwn</div>
<div style="position:absolute;left:869px;top:709px;width:96px;height:28px;background:linear-gradient(#f6f6f6,#e6e6e6);border:1px solid #adadad;border-radius:3px;box-sizing:border-box"></div>
<div class="t" style="left:869px;top:718px;width:96px;text-align:center;font-size:12.7px;line-height:12.7px;color:#000">Durchsuchen...</div>
<div class="t" style="left:203.3px;top:749.00px;font-size:12.7px;line-height:12.7px;color:#000;">Layername</div>
<div style="position:absolute;left:272px;top:743px;width:483px;height:22px;background:#fff;border:1px solid #adadad;border-radius:2px;box-sizing:border-box"></div>
<div class="t" style="left:277.3px;top:749.00px;font-size:12.7px;line-height:12.7px;color:#000;">GWN</div>
<div class="t" style="left:761.4px;top:749.00px;font-size:12.7px;line-height:12.7px;color:#000;">Kodierung</div>
<div style="position:absolute;left:824px;top:743px;width:141px;height:22px;background:linear-gradient(#f6f6f6,#e5e5e5);border:1px solid #adadad;border-radius:3px;box-sizing:border-box"></div>
<div class="t" style="left:829.5px;top:749.00px;font-size:12.7px;line-height:12.7px;color:#000;">UTF-8</div>
<div style="position:absolute;left:948px;top:744px;width:1px;height:20px;background:#d6d6d6"></div>
<svg style="position:absolute;left:952.5px;top:752px;" width="8" height="5" viewBox="0 0 8 5"><path d="M0 0h8l-4 4.5z" fill="#000"/></svg>
<div class="t" style="left:203.4px;top:777.00px;font-size:12.7px;line-height:12.7px;color:#000;">Dateiformat</div>
<svg style="position:absolute;left:320.0px;top:774.8px;" width="15" height="15" viewBox="0 0 15 15"><circle cx="7.5" cy="7.5" r="6.8" fill="#fff" stroke="#a8a8a8" stroke-width="1"/></svg>
<div class="t" style="left:343.2px;top:777.00px;font-size:12.7px;line-height:12.7px;color:#000;">CSV (kommagetrennte Werte)</div>
<svg style="position:absolute;left:536.8px;top:774.8px;" width="15" height="15" viewBox="0 0 15 15"><circle cx="7.5" cy="7.5" r="6.8" fill="#fff" stroke="#a8a8a8" stroke-width="1"/><circle cx="7.5" cy="7.5" r="4" fill="#000"/></svg>
<div class="t" style="left:559.7px;top:777.00px;font-size:12.7px;line-height:12.7px;color:#000;">Benutzerdefiniert</div>
<svg style="position:absolute;left:754.2px;top:774.8px;" width="15" height="15" viewBox="0 0 15 15"><circle cx="7.5" cy="7.5" r="6.8" fill="#fff" stroke="#a8a8a8" stroke-width="1"/></svg>
<div class="t" style="left:777.4px;top:777.00px;font-size:12.7px;line-height:12.7px;color:#000;">Reguläre Ausdrücke</div>
<div style="position:absolute;left:320px;top:799px;width:644px;height:48px;border:1px solid #b4b4b4;box-sizing:border-box;box-shadow:inset 1px 1px 0 #fff, 1px 1px 0 #fff"></div>
<div style="position:absolute;left:323.5px;top:805px;width:15px;height:15px;background:linear-gradient(#fdfdfd,#f1f1f1);border:1px solid #a9a9a9;border-radius:2px;box-sizing:border-box"></div>
<div class="t" style="left:344.8px;top:807.00px;font-size:12.7px;line-height:12.7px;color:#000;">Komma</div>
<div style="position:absolute;left:452.5px;top:805px;width:15px;height:15px;background:linear-gradient(#fdfdfd,#f1f1f1);border:1px solid #a9a9a9;border-radius:2px;box-sizing:border-box"></div>
<svg style="position:absolute;left:452.5px;top:805px;" width="15" height="15" viewBox="0 0 15 15"><path d="M2.8 2.8L12.2 12.2M12.2 2.8L2.8 12.2" stroke="#000" stroke-width="2.7"/></svg>
<div class="t" style="left:474px;top:807.00px;font-size:12.7px;line-height:12.7px;color:#000;">Tabulator</div>
<div style="position:absolute;left:581.5px;top:805px;width:15px;height:15px;background:linear-gradient(#fdfdfd,#f1f1f1);border:1px solid #a9a9a9;border-radius:2px;box-sizing:border-box"></div>
<div class="t" style="left:603px;top:807.00px;font-size:12.7px;line-height:12.7px;color:#000;">Leerzeichen</div>
<div style="position:absolute;left:710.3px;top:805px;width:15px;height:15px;background:linear-gradient(#fdfdfd,#f1f1f1);border:1px solid #a9a9a9;border-radius:2px;box-sizing:border-box"></div>
<div class="t" style="left:732.2px;top:807.00px;font-size:12.7px;line-height:12.7px;color:#000;">Doppelpunkt</div>
<div style="position:absolute;left:839.6px;top:805px;width:15px;height:15px;background:linear-gradient(#fdfdfd,#f1f1f1);border:1px solid #a9a9a9;border-radius:2px;box-sizing:border-box"></div>
<div class="t" style="left:861.5px;top:807.00px;font-size:12.7px;line-height:12.7px;color:#000;">Semikolon</div>
<div class="t" style="left:323px;top:829.00px;font-size:12.7px;line-height:12.7px;color:#000;">Andere Trennzeichen</div>
<div style="position:absolute;left:450px;top:824px;width:107px;height:21px;background:#fff;border:1px solid #adadad;border-radius:2px;box-sizing:border-box"></div>
<div class="t" style="left:563px;top:829.00px;font-size:12.7px;line-height:12.7px;color:#000;">Anführungszeichen</div>
<div style="position:absolute;left:677.5px;top:824px;width:105px;height:21px;background:#fff;border:1px solid #adadad;border-radius:2px;box-sizing:border-box"></div>
<div class="t" style="left:682.5px;top:829.00px;font-size:12.7px;line-height:12.7px;color:#000;">"</div>
<div class="t" style="left:788.8px;top:829.00px;font-size:12.7px;line-height:12.7px;color:#000;">Ausnahme</div>
<div style="position:absolute;left:856px;top:824px;width:106px;height:21px;background:#fff;border:1px solid #adadad;border-radius:2px;box-sizing:border-box"></div>
<div class="t" style="left:861px;top:829.00px;font-size:12.7px;line-height:12.7px;color:#000;">"</div>
<div class="t" style="left:203.3px;top:859.00px;font-size:12.7px;line-height:12.7px;color:#000;">Datensatzoptionen</div>
<div class="t" style="left:320px;top:859.00px;font-size:12.7px;line-height:12.7px;color:#000;">Anzahl der zu überspringenden Kopfzeilen</div>
<div style="position:absolute;left:566px;top:854px;width:54px;height:21px;background:#fff;border:1px solid #adadad;border-radius:2px;box-sizing:border-box"></div>
<div class="t" style="left:571px;top:859.00px;font-size:12.0px;line-height:12.0px;color:#000;">0</div>
<div style="position:absolute;left:603px;top:855px;width:1px;height:19px;background:#e0e0e0"></div>
<svg style="position:absolute;left:606px;top:857px;" width="10" height="16" viewBox="0 0 10 16"><path d="M1 5L5 1L9 5Z" fill="#000"/><path d="M1 11L5 15L9 11Z" fill="#000"/></svg>
<div style="position:absolute;left:626.5px;top:857px;width:15px;height:15px;background:linear-gradient(#fdfdfd,#f1f1f1);border:1px solid #a9a9a9;border-radius:2px;box-sizing:border-box"></div>
<svg style="position:absolute;left:626.5px;top:857px;" width="15" height="15" viewBox="0 0 15 15"><path d="M2.8 2.8L12.2 12.2M12.2 2.8L2.8 12.2" stroke="#000" stroke-width="2.7"/></svg>
<div class="t" style="left:648.1px;top:859.00px;font-size:12.7px;line-height:12.7px;color:#000;">Erster Datensatz enthält Feldnamen</div>
<div class="t" style="left:203.3px;top:886.00px;font-size:12.7px;line-height:12.7px;color:#000;">Feldoptionen</div>
<div style="position:absolute;left:320.2px;top:883.6px;width:15px;height:15px;background:linear-gradient(#fdfdfd,#f1f1f1);border:1px solid #a9a9a9;border-radius:2px;box-sizing:border-box"></div>
<div class="t" style="left:342.2px;top:886.00px;font-size:12.7px;line-height:12.7px;color:#000;">Felder abschneiden</div>
<div style="position:absolute;left:465.6px;top:883.6px;width:15px;height:15px;background:linear-gradient(#fdfdfd,#f1f1f1);border:1px solid #a9a9a9;border-radius:2px;box-sizing:border-box"></div>
<div class="t" style="left:487.2px;top:886.00px;font-size:12.7px;line-height:12.7px;color:#000;">Leere Felder überspringen</div>
<div style="position:absolute;left:650.4px;top:883.6px;width:15px;height:15px;background:linear-gradient(#fdfdfd,#f1f1f1);border:1px solid #a9a9a9;border-radius:2px;box-sizing:border-box"></div>
<div class="t" style="left:672.3px;top:886.00px;font-size:12.7px;line-height:12.7px;color:#000;">Dezimalseparator ist Komma</div>
<div class="t" style="left:203.3px;top:914.00px;font-size:12.7px;line-height:12.7px;color:#000;">Geometriedefinition</div>
<svg style="position:absolute;left:320.0px;top:911.3px;" width="15" height="15" viewBox="0 0 15 15"><circle cx="7.5" cy="7.5" r="6.8" fill="#fff" stroke="#a8a8a8" stroke-width="1"/></svg>
<div class="t" style="left:343.2px;top:914.00px;font-size:12.7px;line-height:12.7px;color:#000;">Punktkoordinaten</div>
<svg style="position:absolute;left:523.5px;top:911.3px;" width="15" height="15" viewBox="0 0 15 15"><circle cx="7.5" cy="7.5" r="6.8" fill="#fff" stroke="#a8a8a8" stroke-width="1"/></svg>
<div class="t" style="left:546.2px;top:914.00px;font-size:12.7px;line-height:12.7px;color:#000;">Well-Known-Text (WKT)</div>
<svg style="position:absolute;left:726.3px;top:911.3px;" width="15" height="15" viewBox="0 0 15 15"><circle cx="7.5" cy="7.5" r="6.8" fill="#fff" stroke="#a8a8a8" stroke-width="1"/><circle cx="7.5" cy="7.5" r="4" fill="#000"/></svg>
<div class="t" style="left:749.2px;top:914.00px;font-size:12.7px;line-height:12.7px;color:#000;">Keine Geometrie (nur Attributtabelle)</div>
<div class="t" style="left:203.3px;top:969.00px;font-size:12.7px;line-height:12.7px;color:#000;">Layereigenschaften</div>
<div style="position:absolute;left:320.2px;top:966.2px;width:15px;height:15px;background:linear-gradient(#f0f0f0,#e8e8e8);border:1px solid #c8c8c8;border-radius:2px;box-sizing:border-box"></div>
<div class="t" style="left:342.2px;top:969.00px;font-size:12.7px;line-height:12.7px;color:#7a7a7a;">Räumlichen Index benutzen</div>
<div style="position:absolute;left:537.6px;top:966.2px;width:15px;height:15px;background:linear-gradient(#fdfdfd,#f1f1f1);border:1px solid #a9a9a9;border-radius:2px;box-sizing:border-box"></div>
<div class="t" style="left:559.2px;top:969.00px;font-size:12.7px;line-height:12.7px;color:#000;">Untermengenindex benutzen</div>
<div style="position:absolute;left:754.5px;top:966.2px;width:15px;height:15px;background:linear-gradient(#fdfdfd,#f1f1f1);border:1px solid #a9a9a9;border-radius:2px;box-sizing:border-box"></div>
<div class="t" style="left:776.4px;top:969.00px;font-size:12.7px;line-height:12.7px;color:#000;">Datei überwachen</div>
<div style="position:absolute;left:203.5px;top:991.5px;width:762px;height:118px;background:#fff;border:1px solid #a8a8a8;border-radius:2px;box-sizing:border-box"></div>
<div style="position:absolute;left:204.5px;top:992.5px;width:742px;height:26px;background:#f0f0f0"></div>
<div style="position:absolute;left:204.5px;top:992.5px;width:26px;height:26.5px;background:linear-gradient(#fbfbfb,#e9e9e9);border-right:1px solid #8d8d8d;border-bottom:1px solid #8d8d8d;box-sizing:border-box"></div>
<div style="position:absolute;left:230.5px;top:992.5px;width:50px;height:26.5px;background:linear-gradient(#fbfbfb,#e9e9e9);border-right:1px solid #8d8d8d;border-bottom:1px solid #8d8d8d;box-sizing:border-box"></div>
<div style="position:absolute;left:280.5px;top:992.5px;width:108px;height:26.5px;background:linear-gradient(#fbfbfb,#e9e9e9);border-right:1px solid #8d8d8d;border-bottom:1px solid #8d8d8d;box-sizing:border-box"></div>
<div class="t" style="left:245.5px;top:1001.00px;font-size:12.7px;line-height:12.7px;color:#000;">KEN</div>
<div class="t" style="left:313.5px;top:1001.00px;font-size:12.7px;line-height:12.7px;color:#000;">Gesamt</div>
<div style="position:absolute;left:204px;top:1019px;width:742px;height:89px;overflow:hidden">
<div style="position:absolute;left:0.5px;top:0px;width:26px;height:26px;background:linear-gradient(#fbfbfb,#e9e9e9);border-right:1px solid #8d8d8d;border-bottom:2px solid #8d8d8d;box-sizing:border-box"></div>
<div style="position:absolute;left:26.5px;top:0px;width:50px;height:26px;border-right:1px solid #a0a0a0;border-bottom:1px solid #a0a0a0;box-sizing:border-box"></div>
<div style="position:absolute;left:76.5px;top:0px;width:108px;height:26px;border-right:1px solid #a0a0a0;border-bottom:1px solid #a0a0a0;box-sizing:border-box"></div>
<div class="t" style="left:6.5px;top:8px;font-size:12.7px;line-height:12.7px">1</div>
<div class="t" style="left:26.5px;width:45.5px;text-align:right;top:8px;font-size:12.7px;line-height:12.7px">1</div>
<div class="t" style="left:76.5px;width:104px;text-align:right;top:8px;font-size:12.7px;line-height:12.7px">1.311750</div>
<div style="position:absolute;left:0.5px;top:26px;width:26px;height:26px;background:linear-gradient(#fbfbfb,#e9e9e9);border-right:1px solid #8d8d8d;border-bottom:2px solid #8d8d8d;box-sizing:border-box"></div>
<div style="position:absolute;left:26.5px;top:26px;width:50px;height:26px;border-right:1px solid #a0a0a0;border-bottom:1px solid #a0a0a0;box-sizing:border-box"></div>
<div style="position:absolute;left:76.5px;top:26px;width:108px;height:26px;border-right:1px solid #a0a0a0;border-bottom:1px solid #a0a0a0;box-sizing:border-box"></div>
<div class="t" style="left:6.5px;top:34px;font-size:12.7px;line-height:12.7px">2</div>
<div class="t" style="left:26.5px;width:45.5px;text-align:right;top:34px;font-size:12.7px;line-height:12.7px">2</div>
<div class="t" style="left:76.5px;width:104px;text-align:right;top:34px;font-size:12.7px;line-height:12.7px">1.225073</div>
<div style="position:absolute;left:0.5px;top:52px;width:26px;height:26px;background:linear-gradient(#fbfbfb,#e9e9e9);border-right:1px solid #8d8d8d;border-bottom:2px solid #8d8d8d;box-sizing:border-box"></div>
<div style="position:absolute;left:26.5px;top:52px;width:50px;height:26px;border-right:1px solid #a0a0a0;border-bottom:1px solid #a0a0a0;box-sizing:border-box"></div>
<div style="position:absolute;left:76.5px;top:52px;width:108px;height:26px;border-right:1px solid #a0a0a0;border-bottom:1px solid #a0a0a0;box-sizing:border-box"></div>
<div class="t" style="left:6.5px;top:60px;font-size:12.7px;line-height:12.7px">3</div>
<div class="t" style="left:26.5px;width:45.5px;text-align:right;top:60px;font-size:12.7px;line-height:12.7px">3</div>
<div class="t" style="left:76.5px;width:104px;text-align:right;top:60px;font-size:12.7px;line-height:12.7px">1.117023</div>
<div style="position:absolute;left:0.5px;top:78px;width:26px;height:26px;background:linear-gradient(#fbfbfb,#e9e9e9);border-right:1px solid #8d8d8d;border-bottom:2px solid #8d8d8d;box-sizing:border-box"></div>
<div style="position:absolute;left:26.5px;top:78px;width:50px;height:26px;border-right:1px solid #a0a0a0;border-bottom:1px solid #a0a0a0;box-sizing:border-box"></div>
<div style="position:absolute;left:76.5px;top:78px;width:108px;height:26px;border-right:1px solid #a0a0a0;border-bottom:1px solid #a0a0a0;box-sizing:border-box"></div>
<div class="t" style="left:6.5px;top:86px;font-size:12.7px;line-height:12.7px">4</div>
<div class="t" style="left:26.5px;width:45.5px;text-align:right;top:86px;font-size:12.7px;line-height:12.7px">4</div>
<div class="t" style="left:76.5px;width:104px;text-align:right;top:86px;font-size:12.7px;line-height:12.7px">0.204720</div>
</div>
<div style="position:absolute;left:946.5px;top:992.5px;width:17px;height:116px;background:repeating-linear-gradient(45deg,#e8e8e8 0 1px,#f6f6f6 1px 2px)"></div>
<div style="position:absolute;left:947px;top:993.5px;width:16px;height:15px;background:linear-gradient(90deg,#fafafa,#e6e6e6);border:1px solid #8d8d8d;border-radius:2px;box-sizing:border-box"></div>
<svg style="position:absolute;left:950.5px;top:998.0px;" width="9" height="6" viewBox="0 0 9 6"><path d="M1 5L4.5 1L8 5Z" fill="#000"/></svg>
<div style="position:absolute;left:947px;top:1009px;width:16px;height:26px;background:linear-gradient(90deg,#fafafa,#e6e6e6);border:1px solid #8d8d8d;border-radius:2px;box-sizing:border-box"></div>
<div style="position:absolute;left:947px;top:1077px;width:16px;height:15px;background:linear-gradient(90deg,#fafafa,#e6e6e6);border:1px solid #8d8d8d;border-radius:2px;box-sizing:border-box"></div>
<svg style="position:absolute;left:950.5px;top:1081.5px;" width="9" height="6" viewBox="0 0 9 6"><path d="M1 5L4.5 1L8 5Z" fill="#000"/></svg>
<div style="position:absolute;left:947px;top:1092.5px;width:16px;height:15.5px;background:linear-gradient(90deg,#fafafa,#e6e6e6);border:1px solid #8d8d8d;border-radius:2px;box-sizing:border-box"></div>
<svg style="position:absolute;left:950.5px;top:1097.25px;" width="9" height="6" viewBox="0 0 9 6"><path d="M1 1L4.5 5L8 1Z" fill="#000"/></svg>
<div style="position:absolute;left:666px;top:1138px;width:93px;height:28px;background:linear-gradient(#f6f6f6,#e6e6e6);border:1px solid #6f6f6f;border-radius:3px;box-sizing:border-box"></div>
<div class="t" style="left:666px;top:1147px;width:93px;text-align:center;font-size:12.7px;line-height:12.7px;color:#000">OK</div>
<div style="position:absolute;left:769px;top:1138px;width:93px;height:28px;background:linear-gradient(#f6f6f6,#e6e6e6);border:1px solid #adadad;border-radius:3px;box-sizing:border-box"></div>
<div class="t" style="left:769px;top:1147px;width:93px;text-align:center;font-size:12.7px;line-height:12.7px;color:#000">Abbrechen</div>
<div style="position:absolute;left:872px;top:1138px;width:93px;height:28px;background:linear-gradient(#f6f6f6,#e6e6e6);border:1px solid #adadad;border-radius:3px;box-sizing:border-box"></div>
<div class="t" style="left:872px;top:1147px;width:93px;text-align:center;font-size:12.7px;line-height:12.7px;color:#000">Hilfe</div>
</body></html>
